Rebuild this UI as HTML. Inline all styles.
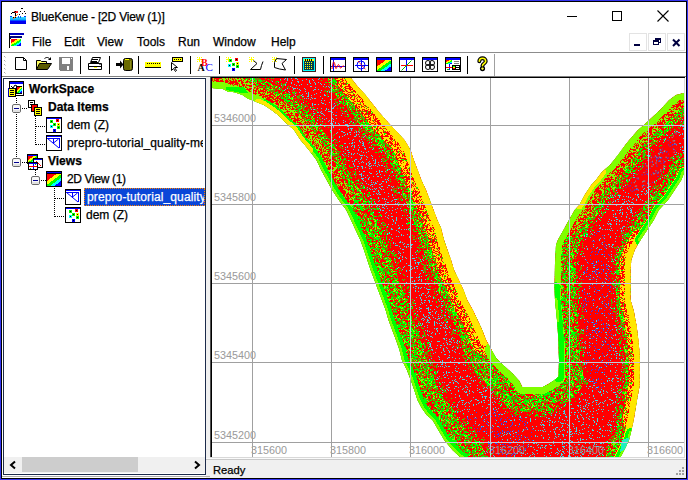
<!DOCTYPE html>
<html><head><meta charset="utf-8">
<style>
html,body{margin:0;padding:0;}
body{width:688px;height:480px;position:relative;overflow:hidden;background:#fff;font-family:"Liberation Sans",sans-serif;color:#000;}
.a{position:absolute;}
.t{position:absolute;white-space:nowrap;line-height:1;-webkit-text-stroke:0.25px currentColor;}
.menu{font-size:12px;top:36px;}
.tree{font-size:12px;}
.lbl{position:absolute;font-size:10.8px;color:#999;line-height:1;white-space:nowrap;}
</style></head><body>
<svg class="a" style="left:0;top:0" width="688" height="78" shape-rendering="crispEdges">
<defs><linearGradient id="wat" x1="0" y1="0" x2="0" y2="1"><stop offset="0" stop-color="#40e0ff"/><stop offset="0.45" stop-color="#00a0ff"/><stop offset="0.55" stop-color="#0000ff"/><stop offset="1" stop-color="#0000e0"/></linearGradient><linearGradient id="rb" x1="0" y1="0.1" x2="0.8" y2="1"><stop offset="0" stop-color="#ff0000"/><stop offset="0.3" stop-color="#ff0000"/><stop offset="0.3" stop-color="#ffff00"/><stop offset="0.5" stop-color="#ffff00"/><stop offset="0.5" stop-color="#00ff00"/><stop offset="0.68" stop-color="#00ff00"/><stop offset="0.68" stop-color="#00ffff"/><stop offset="0.85" stop-color="#00ffff"/><stop offset="0.85" stop-color="#0000ff"/><stop offset="1" stop-color="#0000ff"/></linearGradient></defs>
<path d="M10 17h16v7h-16z" fill="url(#wat)"/>
<rect x="10" y="16" width="2" height="1" fill="#0040ff"/><rect x="24" y="16" width="2" height="1" fill="#0040ff"/>
<rect x="14" y="11" width="4" height="2" fill="#ff2020"/><rect x="15" y="13" width="1" height="5" fill="#000"/><rect x="13" y="17" width="3" height="1" fill="#000"/>
<path d="M11 14l2-2 1 1 2-2" fill="none" stroke="#000" stroke-width="1" shape-rendering="auto"/>
<path d="M13 19l5-5" fill="none" stroke="#ff8020" stroke-width="1" shape-rendering="auto"/>
<rect x="21" y="8" width="2" height="1" fill="#000"/><rect x="20" y="11" width="1" height="1" fill="#000"/><rect x="24" y="11" width="1" height="1" fill="#000"/><rect x="22" y="13" width="1" height="1" fill="#000"/><rect x="25" y="13" width="1" height="1" fill="#000"/><rect x="19" y="14" width="1" height="1" fill="#000"/>
<rect x="18" y="16" width="1" height="2" fill="#0060ff"/><rect x="20" y="16" width="1" height="2" fill="#0060ff"/>
<rect x="9" y="33" width="1" height="15" fill="#000"/><rect x="10" y="33" width="14" height="2" fill="#0000c0"/><rect x="10" y="36" width="12" height="2" fill="#000080"/><rect x="10" y="38" width="1" height="1" fill="#000"/>
<rect x="11" y="39" width="10" height="7" fill="url(#rb)"/>
<rect x="567" y="16" width="10" height="1" fill="#000"/>
<rect x="612.5" y="11.5" width="9" height="9" fill="none" stroke="#000" stroke-width="1"/>
<path d="M657.5 10.5l11 11M668.5 10.5l-11 11" stroke="#000" stroke-width="1.1" shape-rendering="auto"/>
<rect x="629.5" y="33.5" width="17" height="17" fill="#fff" stroke="#e3e3e3"/>
<rect x="648.5" y="33.5" width="17" height="17" fill="#fff" stroke="#e3e3e3"/>
<rect x="667.5" y="33.5" width="17" height="17" fill="#fff" stroke="#e3e3e3"/>
<rect x="634" y="44" width="6" height="2" fill="#000040"/>
<rect x="655" y="38" width="6" height="2" fill="#000040"/><rect x="655" y="38" width="1" height="2" fill="#000040"/><rect x="660" y="38" width="1" height="5" fill="#000040"/><rect x="659" y="42" width="2" height="1" fill="#000040"/>
<rect x="653" y="40" width="6" height="2" fill="#000040"/><rect x="653" y="40" width="1" height="5" fill="#000040"/><rect x="658" y="40" width="1" height="5" fill="#000040"/><rect x="653" y="44" width="6" height="1" fill="#000040"/><rect x="654" y="42" width="4" height="2" fill="#fff"/>
<path d="M673 39.5l6.5 6.5M679.5 39.5l-6.5 6.5" stroke="#000040" stroke-width="2" shape-rendering="auto"/>
<rect x="2" y="52" width="684" height="1" fill="#8c8c8c"/>
<rect x="2" y="76" width="684" height="1" fill="#808080"/>
<rect x="4" y="56" width="1" height="1" fill="#a8a8a8"/><rect x="5" y="57" width="1" height="1" fill="#d8d8d8"/>
<rect x="4" y="60" width="1" height="1" fill="#a8a8a8"/><rect x="5" y="61" width="1" height="1" fill="#d8d8d8"/>
<rect x="4" y="64" width="1" height="1" fill="#a8a8a8"/><rect x="5" y="65" width="1" height="1" fill="#d8d8d8"/>
<rect x="4" y="68" width="1" height="1" fill="#a8a8a8"/><rect x="5" y="69" width="1" height="1" fill="#d8d8d8"/>
<rect x="4" y="72" width="1" height="1" fill="#a8a8a8"/><rect x="5" y="73" width="1" height="1" fill="#d8d8d8"/>
<rect x="80" y="56" width="1" height="18" fill="#000"/>
<rect x="109" y="56" width="1" height="18" fill="#000"/>
<rect x="138" y="56" width="1" height="18" fill="#000"/>
<rect x="190" y="56" width="1" height="18" fill="#000"/>
<rect x="219" y="56" width="1" height="18" fill="#000"/>
<rect x="294" y="56" width="1" height="18" fill="#000"/>
<rect x="323" y="56" width="1" height="18" fill="#000"/>
<rect x="467" y="56" width="1" height="18" fill="#000"/>
<rect x="494" y="54" width="1" height="22" fill="#a0a0a0"/>
<path d="M15.5 57.5h8l3 3v9h-11z" fill="#fff" stroke="#000" shape-rendering="auto"/>
<path d="M23.5 57.5v3h3" fill="none" stroke="#000" stroke-width="1" shape-rendering="auto"/>
<path d="M36.5 69.5v-9h4l1 1h5v2" fill="#ffff60" stroke="#000" shape-rendering="auto"/>
<path d="M36.5 69.5l3-6h12l-4 6z" fill="#5c5c00" stroke="#000" shape-rendering="auto"/>
<path d="M44.5 58.5c2-1.5 4-1.5 5.5 1" fill="none" stroke="#000" shape-rendering="auto"/>
<path d="M48 60h3v-3z" fill="#000" shape-rendering="auto"/>
<rect x="59" y="57" width="14" height="14" fill="#808080"/><rect x="62" y="58" width="8" height="6" fill="#fff"/><rect x="67" y="66" width="2" height="4" fill="#fff"/><rect x="71" y="58" width="1" height="1" fill="#fff"/>
<rect x="59" y="70" width="1" height="1" fill="#fff"/>
<path d="M90.5 62.5l2-5h8l-2 5z" fill="#fff" stroke="#000" shape-rendering="auto"/>
<rect x="92" y="59" width="6" height="1" fill="#000"/><rect x="91" y="61" width="6" height="1" fill="#000"/>
<path d="M88.5 63.5h13v6h-13z" fill="#fff" stroke="#000" shape-rendering="auto"/>
<rect x="88" y="66" width="13" height="1" fill="#000"/><rect x="94" y="67" width="3" height="1" fill="#ffff00"/><rect x="99" y="64" width="2" height="1" fill="#808080"/>
<rect x="116" y="63" width="5" height="3" fill="#000"/><path d="M120 60.5l3.5 4-3.5 4z" fill="#000" shape-rendering="auto"/>
<rect x="123.5" y="58.5" width="9" height="12" rx="2" fill="#6a6a00" stroke="#000" shape-rendering="auto"/>
<rect x="125" y="59" width="4" height="1" fill="#ffff00"/><rect x="130" y="61" width="1" height="8" fill="#8c8c20"/>
<rect x="145" y="62" width="16" height="5" fill="#ffff00"/><rect x="145" y="67" width="16" height="1" fill="#000"/>
<rect x="147" y="63" width="1" height="1" fill="#000"/>
<rect x="149" y="63" width="1" height="1" fill="#000"/>
<rect x="151" y="63" width="1" height="1" fill="#000"/>
<rect x="153" y="63" width="1" height="1" fill="#000"/>
<rect x="155" y="63" width="1" height="1" fill="#000"/>
<rect x="157" y="63" width="1" height="1" fill="#000"/>
<rect x="159" y="63" width="1" height="1" fill="#000"/>
<rect x="172" y="57" width="11" height="5" fill="#000"/><rect x="173" y="58" width="9" height="3" fill="#ffff00"/><rect x="174" y="59" width="1" height="1" fill="#000"/><rect x="176" y="59" width="1" height="1" fill="#000"/><rect x="178" y="59" width="1" height="1" fill="#000"/><rect x="180" y="59" width="1" height="1" fill="#000"/>
<path d="M171.5 62.5v8l2-2 2 3 1-1-2-3h3z" fill="#fff" stroke="#000" stroke-width="1" shape-rendering="auto"/>
<rect x="199" y="57" width="1" height="5" fill="#ffff00"/><rect x="197" y="59" width="5" height="1" fill="#ffff00"/><rect x="197" y="57" width="1" height="1" fill="#ffff00"/><rect x="201" y="57" width="1" height="1" fill="#ffff00"/><rect x="197" y="61" width="1" height="1" fill="#ffff00"/><rect x="201" y="61" width="1" height="1" fill="#ffff00"/>
<text x="197.5" y="70.5" font-family="Liberation Serif" font-weight="bold" font-size="10" fill="#000">A</text>
<text x="201" y="66" font-family="Liberation Serif" font-weight="bold" font-size="10" fill="#ff0000">B</text>
<text x="205.5" y="70.5" font-family="Liberation Serif" font-size="11" fill="#0000ff">C</text>
<rect x="228" y="57" width="1" height="5" fill="#ffff00"/><rect x="226" y="59" width="5" height="1" fill="#ffff00"/><rect x="226" y="57" width="1" height="1" fill="#ffff00"/><rect x="230" y="57" width="1" height="1" fill="#ffff00"/><rect x="226" y="61" width="1" height="1" fill="#ffff00"/><rect x="230" y="61" width="1" height="1" fill="#ffff00"/>
<rect x="229" y="59" width="3" height="3" fill="#00ff00"/><rect x="230" y="60" width="1" height="1" fill="#000"/><rect x="235" y="58" width="3" height="3" fill="#ff0000"/><rect x="236" y="59" width="1" height="1" fill="#000"/><rect x="232" y="63" width="3" height="3" fill="#00ff00"/><rect x="233" y="64" width="1" height="1" fill="#000"/><rect x="236" y="62" width="3" height="3" fill="#ffff00"/><rect x="237" y="63" width="1" height="1" fill="#000"/><rect x="228" y="64" width="3" height="3" fill="#00ffff"/><rect x="229" y="65" width="1" height="1" fill="#000"/><rect x="236" y="65" width="3" height="3" fill="#00ff00"/><rect x="237" y="66" width="1" height="1" fill="#000"/><rect x="232" y="68" width="3" height="3" fill="#0000ff"/><rect x="233" y="69" width="1" height="1" fill="#000"/>
<rect x="251" y="57" width="1" height="5" fill="#ffff00"/><rect x="249" y="59" width="5" height="1" fill="#ffff00"/><rect x="249" y="57" width="1" height="1" fill="#ffff00"/><rect x="253" y="57" width="1" height="1" fill="#ffff00"/><rect x="249" y="61" width="1" height="1" fill="#ffff00"/><rect x="253" y="61" width="1" height="1" fill="#ffff00"/>
<path d="M253.5 60.5l3.5 3-6.5 6h10l1-4 1.5-4" fill="none" stroke="#000" stroke-width="1" shape-rendering="auto"/>
<rect x="274" y="57" width="1" height="5" fill="#ffff00"/><rect x="272" y="59" width="5" height="1" fill="#ffff00"/><rect x="272" y="57" width="1" height="1" fill="#ffff00"/><rect x="276" y="57" width="1" height="1" fill="#ffff00"/><rect x="272" y="61" width="1" height="1" fill="#ffff00"/><rect x="276" y="61" width="1" height="1" fill="#ffff00"/>
<path d="M276.5 58.5l10 1-4.5 4 3.5 6.5-6-1-5-1.5v-5z" fill="none" stroke="#000" stroke-width="1" shape-rendering="auto"/>
<rect x="302" y="57" width="14" height="15" fill="#402020"/><rect x="303" y="58" width="12" height="13" fill="#00ffff"/><rect x="304" y="59" width="10" height="11" fill="#004050"/><rect x="304" y="59" width="10" height="2" fill="#ffff00"/><rect x="305" y="59" width="1" height="2" fill="#000"/><rect x="307" y="59" width="1" height="2" fill="#000"/><rect x="309" y="59" width="1" height="2" fill="#000"/><rect x="311" y="59" width="1" height="2" fill="#000"/>
<rect x="305" y="62" width="1" height="1" fill="#ffff00"/>
<rect x="307" y="62" width="1" height="1" fill="#ffff00"/>
<rect x="309" y="62" width="1" height="1" fill="#ffff00"/>
<rect x="311" y="62" width="1" height="1" fill="#ffff00"/>
<rect x="305" y="64" width="1" height="1" fill="#ffff00"/>
<rect x="307" y="64" width="1" height="1" fill="#ffff00"/>
<rect x="309" y="64" width="1" height="1" fill="#ffff00"/>
<rect x="311" y="64" width="1" height="1" fill="#ffff00"/>
<rect x="305" y="66" width="1" height="1" fill="#ffff00"/>
<rect x="307" y="66" width="1" height="1" fill="#ffff00"/>
<rect x="309" y="66" width="1" height="1" fill="#ffff00"/>
<rect x="311" y="66" width="1" height="1" fill="#ffff00"/>
<rect x="305" y="68" width="1" height="1" fill="#ffff00"/>
<rect x="307" y="68" width="1" height="1" fill="#ffff00"/>
<rect x="309" y="68" width="1" height="1" fill="#ffff00"/>
<rect x="311" y="68" width="1" height="1" fill="#ffff00"/>
<rect x="330" y="57" width="16" height="15" fill="#000"/><rect x="331" y="58" width="14" height="13" fill="#fff"/><rect x="331" y="58" width="14" height="2" fill="#0000ff"/>
<rect x="353" y="57" width="16" height="15" fill="#000"/><rect x="354" y="58" width="14" height="13" fill="#fff"/><rect x="354" y="58" width="14" height="2" fill="#0000ff"/>
<rect x="376" y="57" width="16" height="15" fill="#000"/><rect x="377" y="58" width="14" height="13" fill="#fff"/><rect x="377" y="58" width="14" height="2" fill="#0000ff"/>
<rect x="399" y="57" width="16" height="15" fill="#000"/><rect x="400" y="58" width="14" height="13" fill="#fff"/><rect x="400" y="58" width="14" height="2" fill="#0000ff"/>
<rect x="422" y="57" width="16" height="15" fill="#000"/><rect x="423" y="58" width="14" height="13" fill="#fff"/><rect x="423" y="58" width="14" height="2" fill="#0000ff"/>
<rect x="445" y="57" width="16" height="15" fill="#000"/><rect x="446" y="58" width="14" height="13" fill="#fff"/><rect x="446" y="58" width="14" height="2" fill="#0000ff"/>
<rect x="333" y="60" width="1" height="11" fill="#0000ff"/><rect x="331" y="66" width="14" height="1" fill="#0000ff"/>
<path d="M332 69c1-8 2-9 3-4s1 4 2 2 1-3 2-2 1 4 2 3 1-2 3-2" fill="none" stroke="#ff0000" stroke-width="1" shape-rendering="auto"/>
<circle cx="361" cy="65" r="4" fill="none" stroke="#0000ff" stroke-width="1" shape-rendering="auto"/><rect x="355" y="65" width="13" height="1" fill="#0000ff"/><rect x="361" y="60" width="1" height="11" fill="#0000ff"/>
<path d="M358 61l8 9" stroke="#ff0000" stroke-width="1" stroke-dasharray="2 1" shape-rendering="auto"/>
<rect x="377" y="60" width="14" height="11" fill="url(#rb)"/>
<rect x="401" y="65" width="12" height="1" fill="#ff0000"/><rect x="406" y="60" width="1" height="11" fill="#0000ff"/><path d="M401.5 70.5l10-10" stroke="#00c000" stroke-width="1" shape-rendering="auto"/>
<g fill="none" stroke="#000" stroke-width="1" shape-rendering="auto"><circle cx="428" cy="63" r="2.5"/><circle cx="432" cy="63" r="2.5"/><circle cx="428" cy="67" r="2.5"/><circle cx="432" cy="67" r="2.5"/></g>
<rect x="446" y="60" width="6" height="4" fill="url(#rb)"/><rect x="454" y="61" width="5" height="1" fill="#808080"/><rect x="454" y="63" width="5" height="1" fill="#808080"/><rect x="449" y="64" width="1" height="6" fill="#0000ff"/><rect x="446" y="67" width="6" height="1" fill="#ff0000"/><rect x="447" y="69" width="2" height="1" fill="#00c000"/>
<rect x="452" y="65" width="8" height="5" fill="#000"/><rect x="453" y="66" width="2" height="1" fill="#00ff00"/><rect x="453" y="67" width="2" height="1" fill="#ffff00"/><rect x="453" y="68" width="2" height="1" fill="#ff0000"/><rect x="456" y="66" width="3" height="1" fill="#fff"/><rect x="456" y="68" width="3" height="1" fill="#fff"/>
<g shape-rendering="auto" fill="none" stroke-linecap="round" stroke-linejoin="round"><path d="M479.3 61.2c0-4 6.4-4 6.4 0c0 2.3-3.2 2.3-3.2 4.6" stroke="#000" stroke-width="4"/><circle cx="482.5" cy="68.6" r="0.8" stroke="#000" stroke-width="3.6"/><path d="M479.3 61.2c0-4 6.4-4 6.4 0c0 2.3-3.2 2.3-3.2 4.6" stroke="#ffff00" stroke-width="1.6"/><circle cx="482.5" cy="68.6" r="0.4" stroke="#ffff00" stroke-width="1.4"/></g>
</svg>
<div class="t" style="left:31px;top:11.2px;font-size:12px;letter-spacing:-0.2px">BlueKenue - [2D View (1)]</div>
<div class="t menu" style="left:32px">File</div>
<div class="t menu" style="left:64px">Edit</div>
<div class="t menu" style="left:97px">View</div>
<div class="t menu" style="left:137px">Tools</div>
<div class="t menu" style="left:178px">Run</div>
<div class="t menu" style="left:213px">Window</div>
<div class="t menu" style="left:271px">Help</div>

<!-- tree panel -->
<div class="a" style="left:3px;top:78px;width:203px;height:397px;border:1px solid #1c2a4a;box-sizing:border-box;background:#fff"></div>
<svg class="a" style="left:0;top:78px" width="206" height="398" shape-rendering="crispEdges">
<g transform="translate(0,-78)">
<rect x="16" y="98" width="1" height="1" fill="#000"/><rect x="16" y="100" width="1" height="1" fill="#000"/><rect x="16" y="102" width="1" height="1" fill="#000"/><rect x="16" y="104" width="1" height="1" fill="#000"/><rect x="16" y="106" width="1" height="1" fill="#000"/><rect x="16" y="108" width="1" height="1" fill="#000"/><rect x="16" y="110" width="1" height="1" fill="#000"/><rect x="16" y="112" width="1" height="1" fill="#000"/><rect x="16" y="114" width="1" height="1" fill="#000"/><rect x="16" y="116" width="1" height="1" fill="#000"/><rect x="16" y="118" width="1" height="1" fill="#000"/><rect x="16" y="120" width="1" height="1" fill="#000"/><rect x="16" y="122" width="1" height="1" fill="#000"/><rect x="16" y="124" width="1" height="1" fill="#000"/><rect x="16" y="126" width="1" height="1" fill="#000"/><rect x="16" y="128" width="1" height="1" fill="#000"/><rect x="16" y="130" width="1" height="1" fill="#000"/><rect x="16" y="132" width="1" height="1" fill="#000"/><rect x="16" y="134" width="1" height="1" fill="#000"/><rect x="16" y="136" width="1" height="1" fill="#000"/><rect x="16" y="138" width="1" height="1" fill="#000"/><rect x="16" y="140" width="1" height="1" fill="#000"/><rect x="16" y="142" width="1" height="1" fill="#000"/><rect x="16" y="144" width="1" height="1" fill="#000"/><rect x="16" y="146" width="1" height="1" fill="#000"/><rect x="16" y="148" width="1" height="1" fill="#000"/><rect x="16" y="150" width="1" height="1" fill="#000"/><rect x="16" y="152" width="1" height="1" fill="#000"/><rect x="16" y="154" width="1" height="1" fill="#000"/><rect x="16" y="156" width="1" height="1" fill="#000"/><rect x="16" y="158" width="1" height="1" fill="#000"/><rect x="16" y="160" width="1" height="1" fill="#000"/>
<rect x="22" y="108" width="1" height="1" fill="#000"/><rect x="24" y="108" width="1" height="1" fill="#000"/><rect x="26" y="108" width="1" height="1" fill="#000"/><rect x="22" y="162" width="1" height="1" fill="#000"/><rect x="24" y="162" width="1" height="1" fill="#000"/><rect x="26" y="162" width="1" height="1" fill="#000"/>
<rect x="35" y="116" width="1" height="1" fill="#000"/><rect x="35" y="118" width="1" height="1" fill="#000"/><rect x="35" y="120" width="1" height="1" fill="#000"/><rect x="35" y="122" width="1" height="1" fill="#000"/><rect x="35" y="124" width="1" height="1" fill="#000"/><rect x="35" y="126" width="1" height="1" fill="#000"/><rect x="35" y="128" width="1" height="1" fill="#000"/><rect x="35" y="130" width="1" height="1" fill="#000"/><rect x="35" y="132" width="1" height="1" fill="#000"/><rect x="35" y="134" width="1" height="1" fill="#000"/><rect x="35" y="136" width="1" height="1" fill="#000"/><rect x="35" y="138" width="1" height="1" fill="#000"/><rect x="35" y="140" width="1" height="1" fill="#000"/><rect x="35" y="142" width="1" height="1" fill="#000"/><rect x="35" y="144" width="1" height="1" fill="#000"/>
<rect x="36" y="126" width="1" height="1" fill="#000"/><rect x="38" y="126" width="1" height="1" fill="#000"/><rect x="40" y="126" width="1" height="1" fill="#000"/><rect x="42" y="126" width="1" height="1" fill="#000"/><rect x="44" y="126" width="1" height="1" fill="#000"/><rect x="36" y="144" width="1" height="1" fill="#000"/><rect x="38" y="144" width="1" height="1" fill="#000"/><rect x="40" y="144" width="1" height="1" fill="#000"/><rect x="42" y="144" width="1" height="1" fill="#000"/><rect x="44" y="144" width="1" height="1" fill="#000"/>
<rect x="35" y="170" width="1" height="1" fill="#000"/><rect x="35" y="172" width="1" height="1" fill="#000"/><rect x="35" y="174" width="1" height="1" fill="#000"/>
<rect x="41" y="180" width="1" height="1" fill="#000"/><rect x="43" y="180" width="1" height="1" fill="#000"/><rect x="45" y="180" width="1" height="1" fill="#000"/>
<rect x="54" y="188" width="1" height="1" fill="#000"/><rect x="54" y="190" width="1" height="1" fill="#000"/><rect x="54" y="192" width="1" height="1" fill="#000"/><rect x="54" y="194" width="1" height="1" fill="#000"/><rect x="54" y="196" width="1" height="1" fill="#000"/><rect x="54" y="198" width="1" height="1" fill="#000"/><rect x="54" y="200" width="1" height="1" fill="#000"/><rect x="54" y="202" width="1" height="1" fill="#000"/><rect x="54" y="204" width="1" height="1" fill="#000"/><rect x="54" y="206" width="1" height="1" fill="#000"/><rect x="54" y="208" width="1" height="1" fill="#000"/><rect x="54" y="210" width="1" height="1" fill="#000"/><rect x="54" y="212" width="1" height="1" fill="#000"/><rect x="54" y="214" width="1" height="1" fill="#000"/><rect x="54" y="216" width="1" height="1" fill="#000"/>
<rect x="55" y="198" width="1" height="1" fill="#000"/><rect x="57" y="198" width="1" height="1" fill="#000"/><rect x="59" y="198" width="1" height="1" fill="#000"/><rect x="61" y="198" width="1" height="1" fill="#000"/><rect x="63" y="198" width="1" height="1" fill="#000"/><rect x="55" y="216" width="1" height="1" fill="#000"/><rect x="57" y="216" width="1" height="1" fill="#000"/><rect x="59" y="216" width="1" height="1" fill="#000"/><rect x="61" y="216" width="1" height="1" fill="#000"/><rect x="63" y="216" width="1" height="1" fill="#000"/>
<rect x="12.5" y="104.5" width="8" height="8" rx="1.5" fill="#f8f8f8" stroke="#6a6a6a" shape-rendering="auto"/><rect x="13" y="110" width="7" height="2" fill="#e0e0e0"/><rect x="14" y="108" width="5" height="1" fill="#000090"/><rect x="12.5" y="158.5" width="8" height="8" rx="1.5" fill="#f8f8f8" stroke="#6a6a6a" shape-rendering="auto"/><rect x="13" y="164" width="7" height="2" fill="#e0e0e0"/><rect x="14" y="162" width="5" height="1" fill="#000090"/><rect x="31.5" y="176.5" width="8" height="8" rx="1.5" fill="#f8f8f8" stroke="#6a6a6a" shape-rendering="auto"/><rect x="32" y="182" width="7" height="2" fill="#e0e0e0"/><rect x="33" y="180" width="5" height="1" fill="#000090"/>
<rect x="9" y="81" width="15" height="15" fill="#000"/><rect x="10" y="82" width="13" height="13" fill="#fff"/><rect x="10" y="82" width="13" height="2" fill="#0000ff"/><rect x="16" y="86" width="6" height="8" fill="#000"/><rect x="17" y="87" width="5" height="6" fill="url(#rb)"/>
<path d="M11 86l2 2 2-3 2 1" fill="none" stroke="#000" stroke-width="1" shape-rendering="auto"/>
<rect x="8" y="88" width="8" height="9" fill="#000"/><rect x="9" y="89" width="6" height="7" fill="#ffff00"/><rect x="10" y="90" width="4" height="1" fill="#000"/><rect x="10" y="92" width="4" height="1" fill="#000"/><rect x="10" y="94" width="4" height="1" fill="#000"/><rect x="8" y="88" width="1" height="9" fill="#0000c0"/>
<rect x="28" y="100" width="7" height="8" fill="#000"/><rect x="29" y="101" width="5" height="6" fill="#fff"/><rect x="30" y="102" width="3" height="1" fill="#000"/><rect x="30" y="104" width="3" height="1" fill="#000"/>
<rect x="31" y="104" width="7" height="8" fill="#000"/><rect x="32" y="105" width="5" height="6" fill="#ff0000"/>
<rect x="34" y="107" width="8" height="9" fill="#000"/><rect x="35" y="108" width="6" height="7" fill="#ffff00"/><rect x="36" y="109" width="4" height="1" fill="#000"/><rect x="36" y="111" width="4" height="1" fill="#000"/><rect x="36" y="113" width="4" height="1" fill="#000"/>
<rect x="46" y="117" width="16" height="16" fill="#000"/><rect x="47" y="118" width="14" height="14" fill="#fff"/><rect x="47" y="118" width="14" height="1" fill="#0000ff"/><rect x="50" y="120" width="3" height="3" fill="#00ff00"/><rect x="51" y="121" width="1" height="1" fill="#000"/><rect x="56" y="119" width="3" height="3" fill="#ff0000"/><rect x="57" y="120" width="1" height="1" fill="#000"/><rect x="53" y="123" width="3" height="3" fill="#00ff00"/><rect x="54" y="124" width="1" height="1" fill="#000"/><rect x="57" y="123" width="3" height="3" fill="#ffff00"/><rect x="58" y="124" width="1" height="1" fill="#000"/><rect x="50" y="125" width="3" height="3" fill="#00ffff"/><rect x="51" y="126" width="1" height="1" fill="#000"/><rect x="57" y="126" width="3" height="3" fill="#00ff00"/><rect x="58" y="127" width="1" height="1" fill="#000"/><rect x="53" y="129" width="3" height="3" fill="#0000ff"/><rect x="54" y="130" width="1" height="1" fill="#000"/><rect x="46" y="135" width="16" height="16" fill="#000"/><rect x="47" y="136" width="14" height="14" fill="#fff"/><rect x="47" y="136" width="14" height="1" fill="#0000ff"/><rect x="47" y="138" width="13" height="1" fill="#0000ff"/><rect x="59" y="138" width="1" height="10" fill="#0000ff"/><path d="M47.5 138.5l11.5 9.5M58.5 139l-5 4M53.5 138.5v5" fill="none" stroke="#0000ff" stroke-width="1" shape-rendering="auto"/><rect x="65" y="189" width="16" height="16" fill="#000"/><rect x="66" y="190" width="14" height="14" fill="#fff"/><rect x="66" y="190" width="14" height="1" fill="#0000ff"/><rect x="66" y="192" width="13" height="1" fill="#0000ff"/><rect x="78" y="192" width="1" height="10" fill="#0000ff"/><path d="M66.5 192.5l11.5 9.5M77.5 193l-5 4M72.5 192.5v5" fill="none" stroke="#0000ff" stroke-width="1" shape-rendering="auto"/><rect x="65" y="207" width="16" height="16" fill="#000"/><rect x="66" y="208" width="14" height="14" fill="#fff"/><rect x="66" y="208" width="14" height="1" fill="#0000ff"/><rect x="69" y="210" width="3" height="3" fill="#00ff00"/><rect x="70" y="211" width="1" height="1" fill="#000"/><rect x="75" y="209" width="3" height="3" fill="#ff0000"/><rect x="76" y="210" width="1" height="1" fill="#000"/><rect x="72" y="213" width="3" height="3" fill="#00ff00"/><rect x="73" y="214" width="1" height="1" fill="#000"/><rect x="76" y="213" width="3" height="3" fill="#ffff00"/><rect x="77" y="214" width="1" height="1" fill="#000"/><rect x="69" y="215" width="3" height="3" fill="#00ffff"/><rect x="70" y="216" width="1" height="1" fill="#000"/><rect x="76" y="216" width="3" height="3" fill="#00ff00"/><rect x="77" y="217" width="1" height="1" fill="#000"/><rect x="72" y="219" width="3" height="3" fill="#0000ff"/><rect x="73" y="220" width="1" height="1" fill="#000"/>
<rect x="27" y="154" width="11" height="10" fill="#000"/><rect x="28" y="156" width="9" height="7" fill="url(#rb)"/><rect x="28" y="155" width="9" height="1" fill="#0000ff"/>
<rect x="33" y="158" width="10" height="10" fill="#000"/><rect x="34" y="159" width="8" height="8" fill="#fff"/><rect x="34" y="159" width="8" height="1" fill="#0000ff"/><path d="M36 161l5 5" stroke="#ff0000" stroke-width="1" shape-rendering="auto"/>
<rect x="28" y="162" width="10" height="8" fill="#000"/><rect x="29" y="163" width="8" height="6" fill="#fff"/><rect x="29" y="163" width="8" height="1" fill="#0000ff"/><rect x="33" y="163" width="1" height="6" fill="#0000ff"/><rect x="29" y="166" width="8" height="1" fill="#ff0000"/><rect x="30" y="168" width="1" height="1" fill="#00c000"/><rect x="35" y="164" width="1" height="1" fill="#00c000"/>
<rect x="46" y="171" width="16" height="16" fill="#000"/><rect x="47" y="172" width="14" height="1" fill="#0000ff"/><rect x="47" y="174" width="14" height="12" fill="url(#rb)"/>
</g></svg>
<div class="t tree" style="left:29px;top:83px;font-weight:bold">WorkSpace</div>
<div class="t tree" style="left:48px;top:101px;font-weight:bold">Data Items</div>
<div class="t tree" style="left:67px;top:119px">dem (Z)</div>
<div class="t tree" style="left:67px;top:135px;width:136px;overflow:hidden;line-height:16px;letter-spacing:0.12px">prepro-tutorial_quality-mesh</div>
<div class="t tree" style="left:48px;top:155px;font-weight:bold">Views</div>
<div class="t tree" style="left:67px;top:173px;letter-spacing:-0.35px">2D View (1)</div>
<div class="a" style="left:84px;top:188px;width:121px;height:18px;background:#0a46d8;border:1px dotted #ff8000;box-sizing:border-box"></div>
<div class="t tree" style="left:87px;top:189px;color:#fff;letter-spacing:0.12px;width:117px;overflow:hidden;line-height:16px">prepro-tutorial_quality</div>
<div class="t tree" style="left:86px;top:209px">dem (Z)</div>

<!-- scrollbar -->
<div class="a" style="left:4px;top:457px;width:201px;height:16px;background:#f0f0f0"></div>
<div class="a" style="left:22px;top:457px;width:116px;height:15px;background:#cdcdcd"></div>
<svg class="a" style="left:0;top:450px" width="206" height="24"><path d="M15 11.5l-4 3.5 4 3.5M195 11.5l4 3.5-4 3.5" fill="none" stroke="#000" stroke-width="2"/></svg>

<!-- map -->
<div class="a" style="left:206px;top:77px;width:4px;height:382px;background:#f0f0f0"></div>
<div class="a" style="left:211px;top:77px;width:474px;height:381px;background:#fff;border-left:1px solid #000;border-top:1px solid #000;box-sizing:border-box"></div>
<div class="a" style="left:210px;top:77px;width:1px;height:381px;background:#505050"></div>
<svg class="a" style="left:0;top:0" width="688" height="480" shape-rendering="crispEdges">
<defs><pattern id="core" width="67" height="67" patternUnits="userSpaceOnUse"><rect width="67" height="67" fill="#ff0000"/><path fill="#3ed8e8" d="M10 0h1v1h-1zM12 0h1v1h-1zM15 0h1v1h-1zM21 0h1v1h-1zM23 0h1v1h-1zM26 0h1v1h-1zM43 0h1v1h-1zM50 0h1v1h-1zM56 0h1v1h-1zM60 0h1v1h-1zM64 0h1v1h-1zM66 0h1v1h-1zM0 1h1v1h-1zM9 1h1v1h-1zM21 1h1v1h-1zM28 1h2v1h-2zM52 1h2v1h-2zM63 1h1v1h-1zM4 2h1v1h-1zM7 2h1v1h-1zM19 2h2v1h-2zM24 2h1v1h-1zM30 2h1v1h-1zM50 2h1v1h-1zM60 2h1v1h-1zM62 2h1v1h-1zM4 3h1v1h-1zM41 3h2v1h-2zM44 3h1v1h-1zM49 3h1v1h-1zM52 3h1v1h-1zM56 3h1v1h-1zM0 4h1v1h-1zM13 4h1v1h-1zM42 4h1v1h-1zM47 4h1v1h-1zM49 4h1v1h-1zM63 4h1v1h-1zM18 5h1v1h-1zM26 5h1v1h-1zM44 5h1v1h-1zM51 5h1v1h-1zM17 6h1v1h-1zM24 6h1v1h-1zM29 6h1v1h-1zM35 6h3v1h-3zM47 6h2v1h-2zM57 6h1v1h-1zM0 7h1v1h-1zM24 7h1v1h-1zM27 7h1v1h-1zM44 7h1v1h-1zM49 7h1v1h-1zM52 7h1v1h-1zM62 7h1v1h-1zM65 7h1v1h-1zM5 8h1v1h-1zM17 8h1v1h-1zM19 8h1v1h-1zM25 8h1v1h-1zM28 8h1v1h-1zM41 8h1v1h-1zM45 8h1v1h-1zM60 8h1v1h-1zM9 9h2v1h-2zM14 9h1v1h-1zM16 9h2v1h-2zM27 9h2v1h-2zM45 9h1v1h-1zM47 9h2v1h-2zM54 9h1v1h-1zM57 9h1v1h-1zM66 9h1v1h-1zM28 10h1v1h-1zM35 10h1v1h-1zM38 10h2v1h-2zM42 10h1v1h-1zM17 11h1v1h-1zM19 11h1v1h-1zM23 11h1v1h-1zM27 11h2v1h-2zM51 11h1v1h-1zM61 11h1v1h-1zM12 12h1v1h-1zM16 12h1v1h-1zM19 12h1v1h-1zM29 12h1v1h-1zM38 12h1v1h-1zM44 12h1v1h-1zM50 12h1v1h-1zM56 12h1v1h-1zM10 13h1v1h-1zM12 13h1v1h-1zM19 13h1v1h-1zM24 13h1v1h-1zM34 13h1v1h-1zM41 13h1v1h-1zM45 13h1v1h-1zM0 14h1v1h-1zM29 14h2v1h-2zM41 14h1v1h-1zM53 14h1v1h-1zM10 15h1v1h-1zM18 15h1v1h-1zM23 15h1v1h-1zM30 15h1v1h-1zM41 15h1v1h-1zM46 15h1v1h-1zM50 15h1v1h-1zM56 15h2v1h-2zM12 16h2v1h-2zM23 16h1v1h-1zM42 16h1v1h-1zM47 16h1v1h-1zM52 16h1v1h-1zM61 16h1v1h-1zM26 17h1v1h-1zM33 17h1v1h-1zM39 17h1v1h-1zM47 17h1v1h-1zM53 17h1v1h-1zM61 17h1v1h-1zM66 17h1v1h-1zM6 18h1v1h-1zM13 18h2v1h-2zM28 18h1v1h-1zM31 18h1v1h-1zM57 18h1v1h-1zM61 18h1v1h-1zM8 19h1v1h-1zM11 19h1v1h-1zM16 19h1v1h-1zM19 19h1v1h-1zM22 19h1v1h-1zM42 19h2v1h-2zM58 19h1v1h-1zM61 19h1v1h-1zM5 20h1v1h-1zM13 20h1v1h-1zM16 20h1v1h-1zM18 20h1v1h-1zM24 20h1v1h-1zM47 20h1v1h-1zM58 20h1v1h-1zM25 21h3v1h-3zM29 21h1v1h-1zM36 21h1v1h-1zM60 21h1v1h-1zM4 22h1v1h-1zM6 22h2v1h-2zM13 22h1v1h-1zM31 22h1v1h-1zM37 22h1v1h-1zM46 22h2v1h-2zM50 22h1v1h-1zM60 22h1v1h-1zM5 23h1v1h-1zM7 23h2v1h-2zM13 23h1v1h-1zM16 23h1v1h-1zM26 23h1v1h-1zM32 23h1v1h-1zM45 23h1v1h-1zM53 23h1v1h-1zM57 23h1v1h-1zM0 24h1v1h-1zM26 24h1v1h-1zM37 24h1v1h-1zM63 24h1v1h-1zM7 25h1v1h-1zM20 25h2v1h-2zM25 25h1v1h-1zM31 25h1v1h-1zM40 25h1v1h-1zM52 25h1v1h-1zM19 26h1v1h-1zM38 26h1v1h-1zM40 26h1v1h-1zM48 26h1v1h-1zM64 26h1v1h-1zM8 27h1v1h-1zM17 27h1v1h-1zM19 27h1v1h-1zM23 27h1v1h-1zM27 27h1v1h-1zM34 27h1v1h-1zM40 27h1v1h-1zM46 27h1v1h-1zM56 27h1v1h-1zM63 27h2v1h-2zM2 28h1v1h-1zM4 28h1v1h-1zM6 28h1v1h-1zM26 28h1v1h-1zM28 28h1v1h-1zM33 28h1v1h-1zM40 28h1v1h-1zM43 28h1v1h-1zM56 28h2v1h-2zM66 28h1v1h-1zM7 29h1v1h-1zM9 29h1v1h-1zM14 29h1v1h-1zM18 29h1v1h-1zM24 29h1v1h-1zM31 29h1v1h-1zM34 29h2v1h-2zM39 29h2v1h-2zM52 29h1v1h-1zM61 29h1v1h-1zM18 30h1v1h-1zM31 30h1v1h-1zM34 30h1v1h-1zM43 30h1v1h-1zM63 30h1v1h-1zM19 31h1v1h-1zM33 31h1v1h-1zM36 31h1v1h-1zM38 31h1v1h-1zM40 31h1v1h-1zM44 31h1v1h-1zM46 31h2v1h-2zM54 31h1v1h-1zM64 31h1v1h-1zM12 32h1v1h-1zM19 32h1v1h-1zM22 32h2v1h-2zM26 32h2v1h-2zM34 32h2v1h-2zM42 32h1v1h-1zM5 33h1v1h-1zM27 33h1v1h-1zM30 33h1v1h-1zM53 33h1v1h-1zM56 33h1v1h-1zM66 33h1v1h-1zM1 34h1v1h-1zM19 34h1v1h-1zM22 34h1v1h-1zM27 34h1v1h-1zM34 34h1v1h-1zM36 34h1v1h-1zM66 34h1v1h-1zM7 35h1v1h-1zM13 35h1v1h-1zM20 35h1v1h-1zM53 35h1v1h-1zM61 35h1v1h-1zM63 35h1v1h-1zM7 36h1v1h-1zM18 36h1v1h-1zM44 36h1v1h-1zM54 36h2v1h-2zM12 37h1v1h-1zM24 37h1v1h-1zM28 37h2v1h-2zM41 37h1v1h-1zM44 37h1v1h-1zM46 37h2v1h-2zM50 37h1v1h-1zM57 37h1v1h-1zM34 38h1v1h-1zM44 38h1v1h-1zM17 39h1v1h-1zM26 39h1v1h-1zM35 39h2v1h-2zM42 39h1v1h-1zM12 40h1v1h-1zM14 40h1v1h-1zM18 40h2v1h-2zM24 40h3v1h-3zM41 40h1v1h-1zM45 40h1v1h-1zM65 40h1v1h-1zM0 41h1v1h-1zM17 41h1v1h-1zM26 41h1v1h-1zM28 41h1v1h-1zM32 41h1v1h-1zM49 41h1v1h-1zM53 41h1v1h-1zM58 41h1v1h-1zM64 41h2v1h-2zM2 42h1v1h-1zM13 42h1v1h-1zM26 42h1v1h-1zM38 42h1v1h-1zM42 42h2v1h-2zM58 42h1v1h-1zM60 42h1v1h-1zM1 43h1v1h-1zM5 43h2v1h-2zM9 43h2v1h-2zM14 43h2v1h-2zM18 43h1v1h-1zM30 43h1v1h-1zM34 43h1v1h-1zM46 43h1v1h-1zM57 43h1v1h-1zM9 44h1v1h-1zM26 44h3v1h-3zM33 44h1v1h-1zM53 44h1v1h-1zM60 44h3v1h-3zM2 45h1v1h-1zM4 45h1v1h-1zM6 45h1v1h-1zM8 45h1v1h-1zM27 45h1v1h-1zM33 45h1v1h-1zM50 45h1v1h-1zM52 45h1v1h-1zM64 45h1v1h-1zM4 46h1v1h-1zM9 46h1v1h-1zM14 46h2v1h-2zM21 46h1v1h-1zM28 46h1v1h-1zM36 46h1v1h-1zM53 46h2v1h-2zM21 47h1v1h-1zM26 47h1v1h-1zM30 47h1v1h-1zM42 47h1v1h-1zM47 47h2v1h-2zM51 47h1v1h-1zM55 47h1v1h-1zM65 47h1v1h-1zM0 48h2v1h-2zM22 48h1v1h-1zM24 48h1v1h-1zM36 48h1v1h-1zM38 48h1v1h-1zM40 48h1v1h-1zM51 48h1v1h-1zM56 48h1v1h-1zM23 49h1v1h-1zM26 49h2v1h-2zM31 49h1v1h-1zM40 49h2v1h-2zM46 49h1v1h-1zM8 50h1v1h-1zM15 50h1v1h-1zM20 50h2v1h-2zM27 50h1v1h-1zM33 50h1v1h-1zM36 50h2v1h-2zM39 50h1v1h-1zM44 50h2v1h-2zM63 50h1v1h-1zM1 51h1v1h-1zM13 51h1v1h-1zM19 51h1v1h-1zM22 51h1v1h-1zM25 51h1v1h-1zM28 51h1v1h-1zM35 51h1v1h-1zM53 51h2v1h-2zM58 51h1v1h-1zM64 51h1v1h-1zM21 52h1v1h-1zM25 52h2v1h-2zM37 52h1v1h-1zM46 52h2v1h-2zM56 52h1v1h-1zM63 52h1v1h-1zM65 52h1v1h-1zM8 53h1v1h-1zM14 53h1v1h-1zM25 53h1v1h-1zM32 53h1v1h-1zM44 53h1v1h-1zM52 53h1v1h-1zM61 53h1v1h-1zM10 54h1v1h-1zM24 54h1v1h-1zM26 54h2v1h-2zM32 54h1v1h-1zM34 54h1v1h-1zM39 54h1v1h-1zM41 54h1v1h-1zM45 54h1v1h-1zM60 54h1v1h-1zM65 54h1v1h-1zM0 55h1v1h-1zM8 55h1v1h-1zM16 55h2v1h-2zM20 55h1v1h-1zM32 55h1v1h-1zM35 55h1v1h-1zM37 55h1v1h-1zM40 55h1v1h-1zM46 55h1v1h-1zM48 55h1v1h-1zM56 55h1v1h-1zM0 56h1v1h-1zM3 56h1v1h-1zM14 56h1v1h-1zM16 56h1v1h-1zM20 56h1v1h-1zM32 56h1v1h-1zM43 56h1v1h-1zM56 56h1v1h-1zM62 56h1v1h-1zM64 56h1v1h-1zM4 57h1v1h-1zM10 57h3v1h-3zM25 57h1v1h-1zM32 57h1v1h-1zM38 57h2v1h-2zM43 57h1v1h-1zM63 57h2v1h-2zM0 58h1v1h-1zM22 58h1v1h-1zM44 58h1v1h-1zM49 58h1v1h-1zM12 59h2v1h-2zM25 59h1v1h-1zM41 59h1v1h-1zM43 59h1v1h-1zM53 59h1v1h-1zM65 59h1v1h-1zM32 60h1v1h-1zM34 60h2v1h-2zM38 60h1v1h-1zM42 60h1v1h-1zM44 60h2v1h-2zM57 60h1v1h-1zM65 60h1v1h-1zM13 61h1v1h-1zM15 61h3v1h-3zM34 61h1v1h-1zM57 61h1v1h-1zM4 62h1v1h-1zM13 62h1v1h-1zM16 62h1v1h-1zM20 62h1v1h-1zM23 62h1v1h-1zM25 62h1v1h-1zM35 62h1v1h-1zM53 62h1v1h-1zM16 63h1v1h-1zM25 63h1v1h-1zM27 63h1v1h-1zM35 63h1v1h-1zM43 63h1v1h-1zM58 63h1v1h-1zM6 64h2v1h-2zM30 64h1v1h-1zM43 64h1v1h-1zM47 64h1v1h-1zM49 64h1v1h-1zM2 65h1v1h-1zM8 65h2v1h-2zM14 65h2v1h-2zM19 65h1v1h-1zM21 65h1v1h-1zM29 65h1v1h-1zM33 65h1v1h-1zM37 65h1v1h-1zM49 65h1v1h-1zM51 65h1v1h-1zM59 65h3v1h-3zM1 66h1v1h-1zM12 66h1v1h-1zM25 66h1v1h-1zM33 66h1v1h-1zM44 66h1v1h-1zM57 66h1v1h-1z"/></pattern><pattern id="coreb" width="59" height="59" patternUnits="userSpaceOnUse"><rect width="59" height="59" fill="#ff0000"/><path fill="#3ed8e8" d="M17 0h1v1h-1zM28 0h1v1h-1zM32 0h1v1h-1zM0 1h1v1h-1zM16 1h1v1h-1zM27 1h1v1h-1zM29 1h2v1h-2zM10 2h1v1h-1zM14 2h1v1h-1zM23 2h1v1h-1zM46 2h1v1h-1zM9 3h1v1h-1zM19 3h1v1h-1zM40 3h1v1h-1zM54 3h1v1h-1zM3 4h1v1h-1zM9 4h1v1h-1zM48 4h1v1h-1zM54 5h1v1h-1zM12 6h1v1h-1zM42 6h1v1h-1zM47 6h1v1h-1zM24 7h1v1h-1zM38 7h2v1h-2zM42 7h1v1h-1zM3 8h1v1h-1zM12 8h1v1h-1zM18 8h1v1h-1zM32 8h1v1h-1zM34 8h1v1h-1zM16 9h1v1h-1zM55 9h1v1h-1zM3 10h1v1h-1zM23 10h1v1h-1zM52 10h1v1h-1zM7 11h1v1h-1zM31 11h1v1h-1zM33 11h1v1h-1zM47 11h1v1h-1zM6 12h1v1h-1zM16 12h1v1h-1zM20 12h1v1h-1zM43 12h1v1h-1zM9 13h1v1h-1zM11 13h1v1h-1zM21 13h1v1h-1zM25 13h2v1h-2zM35 14h1v1h-1zM54 14h1v1h-1zM51 16h1v1h-1zM55 16h1v1h-1zM51 17h1v1h-1zM12 18h1v1h-1zM14 18h1v1h-1zM20 18h1v1h-1zM40 18h1v1h-1zM50 18h1v1h-1zM32 19h1v1h-1zM43 19h2v1h-2zM14 20h1v1h-1zM30 20h1v1h-1zM35 20h1v1h-1zM37 20h1v1h-1zM41 20h1v1h-1zM32 21h1v1h-1zM34 21h1v1h-1zM38 21h1v1h-1zM46 21h1v1h-1zM16 22h1v1h-1zM31 22h1v1h-1zM49 22h1v1h-1zM22 23h1v1h-1zM29 23h1v1h-1zM41 23h1v1h-1zM53 24h1v1h-1zM55 24h1v1h-1zM6 25h1v1h-1zM18 25h1v1h-1zM38 25h1v1h-1zM6 26h1v1h-1zM30 26h1v1h-1zM35 26h1v1h-1zM43 26h1v1h-1zM47 26h1v1h-1zM56 26h1v1h-1zM2 27h1v1h-1zM35 27h1v1h-1zM16 28h1v1h-1zM26 28h1v1h-1zM41 28h1v1h-1zM51 28h1v1h-1zM3 29h2v1h-2zM11 29h1v1h-1zM18 29h1v1h-1zM29 29h1v1h-1zM32 29h1v1h-1zM37 29h1v1h-1zM19 30h1v1h-1zM51 30h1v1h-1zM3 31h2v1h-2zM28 31h1v1h-1zM30 31h1v1h-1zM45 31h1v1h-1zM56 31h1v1h-1zM8 32h1v1h-1zM47 32h1v1h-1zM6 33h2v1h-2zM13 33h1v1h-1zM18 33h1v1h-1zM56 33h1v1h-1zM22 34h1v1h-1zM28 34h1v1h-1zM40 34h1v1h-1zM2 35h1v1h-1zM4 35h1v1h-1zM39 35h1v1h-1zM9 36h1v1h-1zM28 36h1v1h-1zM48 36h1v1h-1zM53 36h1v1h-1zM2 37h1v1h-1zM15 37h2v1h-2zM32 37h1v1h-1zM53 37h1v1h-1zM6 38h1v1h-1zM46 38h1v1h-1zM58 38h1v1h-1zM0 39h1v1h-1zM16 39h1v1h-1zM21 39h1v1h-1zM49 39h1v1h-1zM7 40h1v1h-1zM36 40h1v1h-1zM45 40h1v1h-1zM48 40h1v1h-1zM55 40h1v1h-1zM3 41h1v1h-1zM34 41h1v1h-1zM4 42h1v1h-1zM15 42h1v1h-1zM21 42h1v1h-1zM42 42h1v1h-1zM0 43h1v1h-1zM6 43h1v1h-1zM16 43h1v1h-1zM22 43h1v1h-1zM48 43h1v1h-1zM58 43h1v1h-1zM28 44h1v1h-1zM48 44h1v1h-1zM6 45h1v1h-1zM12 46h1v1h-1zM15 46h1v1h-1zM28 46h1v1h-1zM29 47h1v1h-1zM31 47h1v1h-1zM36 47h1v1h-1zM39 47h1v1h-1zM49 47h1v1h-1zM58 47h1v1h-1zM2 48h1v1h-1zM13 49h1v1h-1zM23 49h1v1h-1zM36 49h1v1h-1zM12 50h1v1h-1zM26 50h1v1h-1zM36 50h1v1h-1zM58 50h1v1h-1zM28 51h1v1h-1zM21 52h1v1h-1zM36 52h1v1h-1zM40 52h1v1h-1zM58 52h1v1h-1zM48 53h1v1h-1zM53 53h1v1h-1zM9 54h1v1h-1zM41 54h1v1h-1zM4 55h1v1h-1zM19 55h1v1h-1zM25 55h1v1h-1zM39 56h1v1h-1zM46 56h1v1h-1zM17 57h1v1h-1zM25 57h1v1h-1zM56 57h1v1h-1zM58 57h1v1h-1zM22 58h1v1h-1zM42 58h1v1h-1z"/><path fill="#2848ff" d="M21 0h1v1h-1zM23 0h1v1h-1zM28 0h1v1h-1zM13 1h1v1h-1zM26 1h1v1h-1zM57 1h1v1h-1zM40 2h1v1h-1zM19 3h1v1h-1zM23 3h1v1h-1zM26 3h1v1h-1zM43 3h1v1h-1zM35 4h1v1h-1zM47 4h1v1h-1zM54 4h1v1h-1zM2 5h1v1h-1zM4 5h1v1h-1zM14 5h1v1h-1zM29 5h1v1h-1zM49 5h1v1h-1zM52 5h1v1h-1zM54 5h1v1h-1zM18 6h1v1h-1zM23 6h1v1h-1zM28 6h1v1h-1zM33 6h1v1h-1zM37 6h1v1h-1zM55 6h1v1h-1zM57 6h1v1h-1zM11 7h1v1h-1zM28 7h1v1h-1zM48 7h1v1h-1zM15 8h1v1h-1zM33 8h1v1h-1zM50 8h1v1h-1zM53 8h1v1h-1zM18 9h1v1h-1zM26 9h1v1h-1zM31 9h1v1h-1zM34 9h1v1h-1zM40 9h1v1h-1zM14 10h1v1h-1zM18 10h1v1h-1zM29 10h1v1h-1zM40 10h1v1h-1zM47 10h1v1h-1zM52 10h1v1h-1zM55 10h1v1h-1zM15 11h1v1h-1zM29 11h1v1h-1zM33 11h1v1h-1zM40 11h1v1h-1zM53 11h1v1h-1zM1 12h1v1h-1zM39 12h1v1h-1zM52 12h1v1h-1zM10 13h1v1h-1zM38 13h1v1h-1zM46 13h1v1h-1zM9 14h1v1h-1zM19 14h1v1h-1zM27 14h1v1h-1zM33 14h1v1h-1zM2 15h1v1h-1zM5 15h1v1h-1zM8 15h1v1h-1zM14 15h1v1h-1zM20 15h1v1h-1zM55 15h1v1h-1zM1 16h1v1h-1zM8 16h1v1h-1zM53 16h1v1h-1zM30 17h1v1h-1zM41 17h1v1h-1zM46 17h1v1h-1zM5 18h1v1h-1zM7 18h1v1h-1zM11 18h1v1h-1zM14 18h1v1h-1zM18 18h1v1h-1zM22 18h1v1h-1zM25 18h1v1h-1zM30 18h1v1h-1zM32 18h1v1h-1zM35 18h2v1h-2zM38 18h1v1h-1zM46 18h1v1h-1zM0 19h1v1h-1zM19 19h1v1h-1zM28 19h1v1h-1zM34 19h1v1h-1zM37 19h1v1h-1zM26 20h1v1h-1zM28 20h1v1h-1zM22 21h1v1h-1zM25 21h2v1h-2zM44 21h1v1h-1zM46 21h1v1h-1zM27 22h1v1h-1zM38 22h1v1h-1zM0 23h1v1h-1zM26 23h1v1h-1zM44 23h1v1h-1zM52 23h1v1h-1zM8 24h1v1h-1zM24 24h1v1h-1zM47 24h1v1h-1zM49 24h1v1h-1zM55 24h1v1h-1zM3 25h1v1h-1zM8 25h1v1h-1zM11 25h1v1h-1zM48 26h1v1h-1zM1 27h1v1h-1zM3 27h1v1h-1zM39 27h1v1h-1zM46 27h1v1h-1zM53 27h1v1h-1zM57 27h1v1h-1zM5 28h2v1h-2zM13 28h1v1h-1zM29 28h1v1h-1zM44 28h1v1h-1zM3 29h1v1h-1zM13 29h1v1h-1zM30 29h1v1h-1zM35 29h1v1h-1zM16 30h2v1h-2zM23 30h2v1h-2zM37 30h2v1h-2zM25 31h1v1h-1zM30 31h2v1h-2zM33 31h1v1h-1zM8 32h1v1h-1zM16 32h2v1h-2zM35 32h1v1h-1zM51 32h1v1h-1zM55 32h1v1h-1zM8 33h1v1h-1zM11 33h1v1h-1zM25 33h1v1h-1zM31 33h1v1h-1zM46 33h1v1h-1zM5 34h1v1h-1zM13 34h1v1h-1zM32 34h1v1h-1zM37 34h1v1h-1zM39 34h1v1h-1zM55 34h1v1h-1zM3 35h1v1h-1zM6 35h1v1h-1zM13 35h1v1h-1zM17 35h1v1h-1zM20 35h1v1h-1zM39 35h1v1h-1zM42 35h1v1h-1zM44 35h1v1h-1zM53 35h1v1h-1zM5 36h1v1h-1zM8 36h1v1h-1zM30 36h2v1h-2zM53 36h1v1h-1zM55 36h1v1h-1zM2 37h1v1h-1zM5 37h1v1h-1zM8 37h1v1h-1zM11 37h1v1h-1zM19 37h1v1h-1zM36 37h1v1h-1zM47 37h1v1h-1zM49 37h1v1h-1zM28 38h1v1h-1zM51 38h1v1h-1zM58 38h1v1h-1zM21 39h1v1h-1zM29 39h1v1h-1zM32 39h1v1h-1zM42 39h1v1h-1zM50 39h1v1h-1zM17 40h1v1h-1zM37 40h1v1h-1zM41 40h1v1h-1zM43 40h1v1h-1zM57 40h1v1h-1zM0 41h1v1h-1zM9 41h1v1h-1zM26 41h1v1h-1zM30 41h1v1h-1zM35 41h1v1h-1zM40 41h1v1h-1zM43 41h1v1h-1zM4 42h1v1h-1zM10 42h1v1h-1zM19 42h1v1h-1zM39 42h1v1h-1zM45 42h1v1h-1zM2 43h1v1h-1zM34 43h1v1h-1zM52 43h1v1h-1zM18 44h1v1h-1zM26 44h1v1h-1zM14 45h1v1h-1zM38 45h1v1h-1zM45 45h1v1h-1zM20 46h1v1h-1zM46 46h1v1h-1zM51 46h1v1h-1zM13 47h1v1h-1zM15 47h1v1h-1zM27 47h1v1h-1zM41 47h1v1h-1zM48 47h1v1h-1zM52 47h1v1h-1zM0 48h1v1h-1zM6 48h1v1h-1zM32 48h1v1h-1zM34 48h1v1h-1zM42 48h1v1h-1zM44 48h1v1h-1zM11 49h1v1h-1zM17 49h2v1h-2zM20 50h1v1h-1zM0 51h1v1h-1zM4 51h1v1h-1zM20 51h1v1h-1zM30 51h1v1h-1zM35 51h1v1h-1zM11 52h1v1h-1zM29 52h1v1h-1zM46 52h1v1h-1zM53 52h1v1h-1zM5 53h1v1h-1zM18 53h1v1h-1zM41 53h1v1h-1zM7 54h2v1h-2zM26 54h1v1h-1zM20 55h1v1h-1zM29 55h1v1h-1zM51 55h1v1h-1zM6 56h1v1h-1zM22 56h2v1h-2zM39 56h1v1h-1zM53 56h1v1h-1zM17 57h1v1h-1zM4 58h1v1h-1zM12 58h1v1h-1zM53 58h1v1h-1zM56 58h1v1h-1z"/></pattern><pattern id="meshg" width="64" height="64" patternUnits="userSpaceOnUse"><rect width="64" height="64" fill="#ff0000"/><path fill="#00ff00" d="M6 0h1v1h-1zM13 0h4v1h-4zM18 0h1v1h-1zM24 0h1v1h-1zM27 0h1v1h-1zM29 0h2v1h-2zM32 0h1v1h-1zM34 0h1v1h-1zM40 0h1v1h-1zM42 0h2v1h-2zM45 0h2v1h-2zM51 0h1v1h-1zM56 0h1v1h-1zM61 0h1v1h-1zM1 1h4v1h-4zM10 1h3v1h-3zM14 1h1v1h-1zM17 1h2v1h-2zM20 1h1v1h-1zM26 1h2v1h-2zM29 1h1v1h-1zM32 1h2v1h-2zM36 1h1v1h-1zM39 1h4v1h-4zM45 1h2v1h-2zM48 1h4v1h-4zM53 1h2v1h-2zM56 1h2v1h-2zM61 1h1v1h-1zM0 2h4v1h-4zM6 2h3v1h-3zM11 2h1v1h-1zM15 2h2v1h-2zM18 2h4v1h-4zM24 2h5v1h-5zM30 2h1v1h-1zM32 2h1v1h-1zM35 2h1v1h-1zM38 2h1v1h-1zM42 2h3v1h-3zM46 2h1v1h-1zM50 2h3v1h-3zM55 2h1v1h-1zM58 2h2v1h-2zM61 2h1v1h-1zM63 2h1v1h-1zM0 3h2v1h-2zM3 3h2v1h-2zM6 3h2v1h-2zM11 3h1v1h-1zM13 3h1v1h-1zM16 3h7v1h-7zM24 3h1v1h-1zM26 3h1v1h-1zM34 3h2v1h-2zM37 3h2v1h-2zM42 3h1v1h-1zM45 3h1v1h-1zM47 3h3v1h-3zM51 3h2v1h-2zM55 3h1v1h-1zM58 3h1v1h-1zM60 3h1v1h-1zM2 4h6v1h-6zM11 4h2v1h-2zM14 4h3v1h-3zM19 4h1v1h-1zM21 4h2v1h-2zM24 4h2v1h-2zM27 4h1v1h-1zM29 4h2v1h-2zM33 4h2v1h-2zM40 4h1v1h-1zM42 4h1v1h-1zM44 4h3v1h-3zM50 4h1v1h-1zM52 4h2v1h-2zM55 4h1v1h-1zM59 4h1v1h-1zM3 5h4v1h-4zM11 5h2v1h-2zM14 5h5v1h-5zM20 5h2v1h-2zM24 5h1v1h-1zM26 5h3v1h-3zM31 5h5v1h-5zM37 5h1v1h-1zM39 5h1v1h-1zM41 5h1v1h-1zM44 5h1v1h-1zM47 5h1v1h-1zM51 5h1v1h-1zM53 5h1v1h-1zM0 6h2v1h-2zM3 6h1v1h-1zM5 6h2v1h-2zM8 6h2v1h-2zM12 6h4v1h-4zM17 6h5v1h-5zM23 6h1v1h-1zM25 6h1v1h-1zM32 6h3v1h-3zM37 6h6v1h-6zM45 6h1v1h-1zM52 6h1v1h-1zM55 6h3v1h-3zM62 6h2v1h-2zM5 7h1v1h-1zM8 7h1v1h-1zM10 7h1v1h-1zM12 7h5v1h-5zM19 7h2v1h-2zM25 7h1v1h-1zM27 7h1v1h-1zM30 7h3v1h-3zM35 7h1v1h-1zM40 7h3v1h-3zM45 7h3v1h-3zM49 7h1v1h-1zM51 7h1v1h-1zM54 7h7v1h-7zM62 7h1v1h-1zM0 8h1v1h-1zM3 8h3v1h-3zM7 8h1v1h-1zM10 8h1v1h-1zM17 8h2v1h-2zM25 8h1v1h-1zM27 8h2v1h-2zM30 8h1v1h-1zM33 8h8v1h-8zM43 8h2v1h-2zM47 8h6v1h-6zM56 8h1v1h-1zM58 8h1v1h-1zM62 8h2v1h-2zM0 9h3v1h-3zM6 9h1v1h-1zM8 9h2v1h-2zM12 9h3v1h-3zM17 9h2v1h-2zM21 9h2v1h-2zM24 9h1v1h-1zM27 9h1v1h-1zM30 9h1v1h-1zM32 9h7v1h-7zM40 9h1v1h-1zM43 9h2v1h-2zM46 9h2v1h-2zM49 9h2v1h-2zM53 9h3v1h-3zM58 9h3v1h-3zM63 9h1v1h-1zM1 10h2v1h-2zM4 10h2v1h-2zM7 10h2v1h-2zM10 10h3v1h-3zM21 10h1v1h-1zM23 10h1v1h-1zM25 10h1v1h-1zM27 10h11v1h-11zM43 10h1v1h-1zM45 10h2v1h-2zM52 10h2v1h-2zM55 10h2v1h-2zM59 10h2v1h-2zM0 11h1v1h-1zM4 11h1v1h-1zM9 11h2v1h-2zM12 11h1v1h-1zM23 11h4v1h-4zM28 11h1v1h-1zM32 11h3v1h-3zM37 11h2v1h-2zM41 11h1v1h-1zM43 11h3v1h-3zM49 11h2v1h-2zM52 11h1v1h-1zM55 11h4v1h-4zM60 11h2v1h-2zM0 12h1v1h-1zM3 12h3v1h-3zM13 12h1v1h-1zM15 12h1v1h-1zM19 12h2v1h-2zM22 12h1v1h-1zM28 12h3v1h-3zM32 12h1v1h-1zM35 12h2v1h-2zM42 12h2v1h-2zM46 12h1v1h-1zM49 12h2v1h-2zM53 12h1v1h-1zM56 12h1v1h-1zM59 12h5v1h-5zM1 13h2v1h-2zM5 13h4v1h-4zM12 13h1v1h-1zM14 13h2v1h-2zM19 13h1v1h-1zM22 13h2v1h-2zM25 13h5v1h-5zM31 13h3v1h-3zM36 13h5v1h-5zM43 13h1v1h-1zM46 13h1v1h-1zM50 13h1v1h-1zM55 13h3v1h-3zM59 13h5v1h-5zM0 14h1v1h-1zM2 14h1v1h-1zM4 14h1v1h-1zM6 14h1v1h-1zM8 14h1v1h-1zM11 14h1v1h-1zM13 14h1v1h-1zM17 14h1v1h-1zM20 14h2v1h-2zM23 14h1v1h-1zM25 14h1v1h-1zM27 14h1v1h-1zM29 14h1v1h-1zM32 14h2v1h-2zM36 14h1v1h-1zM38 14h1v1h-1zM40 14h3v1h-3zM48 14h1v1h-1zM50 14h1v1h-1zM54 14h1v1h-1zM56 14h1v1h-1zM58 14h5v1h-5zM1 15h1v1h-1zM3 15h2v1h-2zM7 15h3v1h-3zM11 15h1v1h-1zM13 15h2v1h-2zM16 15h10v1h-10zM27 15h3v1h-3zM32 15h3v1h-3zM38 15h5v1h-5zM44 15h1v1h-1zM47 15h1v1h-1zM49 15h1v1h-1zM51 15h1v1h-1zM53 15h3v1h-3zM59 15h1v1h-1zM61 15h3v1h-3zM0 16h1v1h-1zM2 16h4v1h-4zM7 16h2v1h-2zM12 16h5v1h-5zM18 16h3v1h-3zM26 16h1v1h-1zM28 16h5v1h-5zM35 16h1v1h-1zM40 16h3v1h-3zM44 16h1v1h-1zM46 16h2v1h-2zM49 16h2v1h-2zM53 16h1v1h-1zM56 16h1v1h-1zM58 16h1v1h-1zM60 16h1v1h-1zM63 16h1v1h-1zM0 17h1v1h-1zM3 17h4v1h-4zM10 17h8v1h-8zM19 17h1v1h-1zM22 17h6v1h-6zM29 17h1v1h-1zM31 17h1v1h-1zM33 17h1v1h-1zM35 17h1v1h-1zM37 17h2v1h-2zM40 17h3v1h-3zM45 17h1v1h-1zM51 17h13v1h-13zM0 18h1v1h-1zM2 18h1v1h-1zM4 18h1v1h-1zM8 18h5v1h-5zM14 18h2v1h-2zM18 18h1v1h-1zM20 18h2v1h-2zM23 18h6v1h-6zM32 18h1v1h-1zM34 18h1v1h-1zM39 18h1v1h-1zM41 18h3v1h-3zM48 18h2v1h-2zM51 18h2v1h-2zM56 18h1v1h-1zM0 19h1v1h-1zM5 19h4v1h-4zM12 19h3v1h-3zM16 19h1v1h-1zM19 19h3v1h-3zM25 19h1v1h-1zM28 19h1v1h-1zM30 19h2v1h-2zM38 19h1v1h-1zM48 19h1v1h-1zM50 19h1v1h-1zM52 19h2v1h-2zM56 19h1v1h-1zM58 19h4v1h-4zM0 20h3v1h-3zM6 20h1v1h-1zM8 20h2v1h-2zM13 20h2v1h-2zM18 20h1v1h-1zM20 20h2v1h-2zM24 20h2v1h-2zM28 20h1v1h-1zM30 20h2v1h-2zM34 20h2v1h-2zM37 20h1v1h-1zM39 20h1v1h-1zM51 20h3v1h-3zM55 20h1v1h-1zM57 20h5v1h-5zM0 21h2v1h-2zM10 21h1v1h-1zM15 21h1v1h-1zM18 21h1v1h-1zM22 21h3v1h-3zM27 21h1v1h-1zM31 21h2v1h-2zM34 21h1v1h-1zM36 21h1v1h-1zM45 21h1v1h-1zM50 21h4v1h-4zM56 21h3v1h-3zM0 22h1v1h-1zM3 22h3v1h-3zM7 22h2v1h-2zM10 22h2v1h-2zM13 22h1v1h-1zM16 22h2v1h-2zM19 22h3v1h-3zM23 22h2v1h-2zM26 22h1v1h-1zM28 22h3v1h-3zM33 22h4v1h-4zM41 22h1v1h-1zM44 22h1v1h-1zM46 22h1v1h-1zM50 22h1v1h-1zM52 22h1v1h-1zM55 22h2v1h-2zM59 22h2v1h-2zM63 22h1v1h-1zM0 23h1v1h-1zM2 23h3v1h-3zM7 23h1v1h-1zM11 23h3v1h-3zM17 23h1v1h-1zM20 23h1v1h-1zM24 23h2v1h-2zM30 23h1v1h-1zM35 23h3v1h-3zM44 23h3v1h-3zM53 23h2v1h-2zM56 23h1v1h-1zM59 23h2v1h-2zM62 23h1v1h-1zM1 24h1v1h-1zM3 24h1v1h-1zM9 24h2v1h-2zM16 24h1v1h-1zM19 24h1v1h-1zM22 24h4v1h-4zM28 24h2v1h-2zM31 24h1v1h-1zM34 24h1v1h-1zM36 24h4v1h-4zM43 24h1v1h-1zM45 24h1v1h-1zM49 24h1v1h-1zM53 24h3v1h-3zM57 24h4v1h-4zM63 24h1v1h-1zM0 25h1v1h-1zM3 25h2v1h-2zM8 25h3v1h-3zM12 25h3v1h-3zM17 25h2v1h-2zM21 25h1v1h-1zM23 25h1v1h-1zM25 25h3v1h-3zM29 25h4v1h-4zM34 25h1v1h-1zM36 25h5v1h-5zM43 25h1v1h-1zM46 25h1v1h-1zM50 25h2v1h-2zM53 25h1v1h-1zM55 25h1v1h-1zM57 25h1v1h-1zM59 25h1v1h-1zM62 25h2v1h-2zM2 26h1v1h-1zM4 26h2v1h-2zM8 26h7v1h-7zM16 26h1v1h-1zM18 26h1v1h-1zM24 26h1v1h-1zM26 26h4v1h-4zM35 26h6v1h-6zM42 26h3v1h-3zM47 26h4v1h-4zM52 26h2v1h-2zM56 26h8v1h-8zM3 27h4v1h-4zM12 27h1v1h-1zM14 27h2v1h-2zM17 27h1v1h-1zM21 27h1v1h-1zM26 27h1v1h-1zM29 27h1v1h-1zM32 27h1v1h-1zM35 27h3v1h-3zM39 27h1v1h-1zM41 27h1v1h-1zM44 27h1v1h-1zM47 27h2v1h-2zM50 27h2v1h-2zM55 27h4v1h-4zM62 27h2v1h-2zM4 28h1v1h-1zM6 28h3v1h-3zM10 28h1v1h-1zM13 28h1v1h-1zM18 28h4v1h-4zM25 28h1v1h-1zM29 28h2v1h-2zM32 28h2v1h-2zM38 28h6v1h-6zM45 28h1v1h-1zM48 28h1v1h-1zM54 28h4v1h-4zM61 28h1v1h-1zM3 29h1v1h-1zM8 29h2v1h-2zM15 29h4v1h-4zM20 29h1v1h-1zM22 29h1v1h-1zM24 29h1v1h-1zM30 29h1v1h-1zM32 29h3v1h-3zM37 29h4v1h-4zM42 29h1v1h-1zM44 29h1v1h-1zM46 29h1v1h-1zM48 29h1v1h-1zM50 29h1v1h-1zM54 29h1v1h-1zM56 29h2v1h-2zM59 29h1v1h-1zM61 29h1v1h-1zM0 30h4v1h-4zM6 30h1v1h-1zM8 30h1v1h-1zM10 30h2v1h-2zM14 30h3v1h-3zM21 30h3v1h-3zM25 30h1v1h-1zM27 30h6v1h-6zM36 30h1v1h-1zM39 30h1v1h-1zM42 30h4v1h-4zM47 30h5v1h-5zM55 30h6v1h-6zM0 31h1v1h-1zM2 31h3v1h-3zM6 31h4v1h-4zM11 31h1v1h-1zM17 31h2v1h-2zM20 31h3v1h-3zM24 31h1v1h-1zM26 31h1v1h-1zM28 31h1v1h-1zM30 31h2v1h-2zM33 31h2v1h-2zM36 31h4v1h-4zM41 31h1v1h-1zM44 31h2v1h-2zM47 31h2v1h-2zM50 31h2v1h-2zM55 31h2v1h-2zM59 31h5v1h-5zM1 32h4v1h-4zM7 32h1v1h-1zM10 32h4v1h-4zM17 32h2v1h-2zM20 32h1v1h-1zM24 32h1v1h-1zM26 32h1v1h-1zM29 32h5v1h-5zM36 32h6v1h-6zM43 32h3v1h-3zM47 32h1v1h-1zM52 32h1v1h-1zM54 32h3v1h-3zM58 32h2v1h-2zM61 32h2v1h-2zM1 33h1v1h-1zM3 33h1v1h-1zM5 33h1v1h-1zM10 33h3v1h-3zM14 33h2v1h-2zM17 33h1v1h-1zM19 33h1v1h-1zM22 33h2v1h-2zM25 33h2v1h-2zM28 33h1v1h-1zM30 33h1v1h-1zM32 33h2v1h-2zM35 33h2v1h-2zM40 33h2v1h-2zM44 33h2v1h-2zM47 33h1v1h-1zM50 33h2v1h-2zM54 33h1v1h-1zM56 33h1v1h-1zM59 33h1v1h-1zM61 33h2v1h-2zM0 34h1v1h-1zM3 34h1v1h-1zM5 34h2v1h-2zM9 34h1v1h-1zM13 34h1v1h-1zM15 34h1v1h-1zM17 34h1v1h-1zM22 34h2v1h-2zM25 34h4v1h-4zM30 34h4v1h-4zM35 34h4v1h-4zM40 34h5v1h-5zM46 34h1v1h-1zM48 34h2v1h-2zM52 34h7v1h-7zM61 34h1v1h-1zM63 34h1v1h-1zM1 35h1v1h-1zM3 35h2v1h-2zM7 35h2v1h-2zM10 35h4v1h-4zM16 35h3v1h-3zM28 35h3v1h-3zM35 35h1v1h-1zM40 35h1v1h-1zM46 35h1v1h-1zM48 35h1v1h-1zM50 35h1v1h-1zM55 35h1v1h-1zM57 35h2v1h-2zM60 35h4v1h-4zM0 36h3v1h-3zM4 36h1v1h-1zM6 36h3v1h-3zM11 36h4v1h-4zM16 36h1v1h-1zM18 36h2v1h-2zM23 36h1v1h-1zM25 36h9v1h-9zM37 36h1v1h-1zM42 36h1v1h-1zM46 36h3v1h-3zM57 36h3v1h-3zM61 36h1v1h-1zM63 36h1v1h-1zM0 37h1v1h-1zM2 37h5v1h-5zM8 37h3v1h-3zM12 37h2v1h-2zM15 37h1v1h-1zM17 37h5v1h-5zM23 37h1v1h-1zM26 37h1v1h-1zM28 37h1v1h-1zM30 37h4v1h-4zM37 37h1v1h-1zM40 37h4v1h-4zM45 37h4v1h-4zM54 37h1v1h-1zM57 37h1v1h-1zM59 37h2v1h-2zM62 37h2v1h-2zM0 38h1v1h-1zM2 38h1v1h-1zM4 38h2v1h-2zM9 38h2v1h-2zM12 38h1v1h-1zM16 38h2v1h-2zM19 38h3v1h-3zM23 38h2v1h-2zM26 38h2v1h-2zM29 38h1v1h-1zM31 38h1v1h-1zM34 38h1v1h-1zM38 38h4v1h-4zM46 38h3v1h-3zM52 38h3v1h-3zM57 38h2v1h-2zM61 38h2v1h-2zM3 39h3v1h-3zM7 39h1v1h-1zM9 39h1v1h-1zM13 39h2v1h-2zM16 39h4v1h-4zM22 39h2v1h-2zM25 39h2v1h-2zM29 39h4v1h-4zM34 39h3v1h-3zM42 39h1v1h-1zM47 39h2v1h-2zM50 39h2v1h-2zM54 39h4v1h-4zM59 39h1v1h-1zM61 39h3v1h-3zM0 40h1v1h-1zM4 40h1v1h-1zM8 40h1v1h-1zM10 40h1v1h-1zM13 40h4v1h-4zM18 40h1v1h-1zM20 40h1v1h-1zM22 40h2v1h-2zM25 40h4v1h-4zM30 40h1v1h-1zM32 40h2v1h-2zM35 40h2v1h-2zM38 40h2v1h-2zM41 40h2v1h-2zM45 40h1v1h-1zM50 40h1v1h-1zM52 40h1v1h-1zM55 40h1v1h-1zM59 40h3v1h-3zM0 41h3v1h-3zM7 41h3v1h-3zM11 41h3v1h-3zM15 41h4v1h-4zM23 41h2v1h-2zM29 41h1v1h-1zM32 41h1v1h-1zM36 41h2v1h-2zM39 41h1v1h-1zM43 41h1v1h-1zM47 41h6v1h-6zM54 41h3v1h-3zM59 41h4v1h-4zM1 42h2v1h-2zM5 42h1v1h-1zM7 42h2v1h-2zM10 42h1v1h-1zM12 42h4v1h-4zM18 42h1v1h-1zM20 42h2v1h-2zM27 42h1v1h-1zM29 42h3v1h-3zM33 42h3v1h-3zM37 42h1v1h-1zM41 42h5v1h-5zM49 42h6v1h-6zM56 42h2v1h-2zM60 42h2v1h-2zM63 42h1v1h-1zM0 43h1v1h-1zM5 43h1v1h-1zM7 43h2v1h-2zM15 43h2v1h-2zM18 43h5v1h-5zM24 43h1v1h-1zM27 43h1v1h-1zM29 43h2v1h-2zM32 43h3v1h-3zM40 43h3v1h-3zM45 43h2v1h-2zM49 43h3v1h-3zM53 43h1v1h-1zM57 43h1v1h-1zM0 44h1v1h-1zM4 44h2v1h-2zM14 44h1v1h-1zM16 44h1v1h-1zM18 44h1v1h-1zM21 44h1v1h-1zM24 44h2v1h-2zM28 44h1v1h-1zM30 44h2v1h-2zM34 44h1v1h-1zM36 44h1v1h-1zM38 44h1v1h-1zM41 44h1v1h-1zM43 44h3v1h-3zM47 44h1v1h-1zM49 44h6v1h-6zM56 44h4v1h-4zM0 45h3v1h-3zM9 45h2v1h-2zM12 45h1v1h-1zM15 45h1v1h-1zM20 45h2v1h-2zM24 45h2v1h-2zM28 45h1v1h-1zM31 45h1v1h-1zM33 45h2v1h-2zM36 45h3v1h-3zM42 45h3v1h-3zM47 45h1v1h-1zM52 45h1v1h-1zM54 45h1v1h-1zM56 45h2v1h-2zM59 45h1v1h-1zM61 45h1v1h-1zM63 45h1v1h-1zM2 46h1v1h-1zM4 46h7v1h-7zM13 46h1v1h-1zM15 46h1v1h-1zM19 46h3v1h-3zM26 46h2v1h-2zM29 46h1v1h-1zM31 46h1v1h-1zM39 46h3v1h-3zM43 46h1v1h-1zM47 46h3v1h-3zM53 46h8v1h-8zM2 47h2v1h-2zM5 47h2v1h-2zM8 47h1v1h-1zM13 47h1v1h-1zM16 47h5v1h-5zM23 47h1v1h-1zM28 47h1v1h-1zM31 47h2v1h-2zM36 47h1v1h-1zM38 47h2v1h-2zM42 47h4v1h-4zM50 47h2v1h-2zM54 47h1v1h-1zM56 47h3v1h-3zM60 47h1v1h-1zM0 48h1v1h-1zM3 48h2v1h-2zM7 48h3v1h-3zM11 48h2v1h-2zM16 48h4v1h-4zM22 48h3v1h-3zM27 48h2v1h-2zM33 48h1v1h-1zM35 48h3v1h-3zM39 48h3v1h-3zM43 48h3v1h-3zM48 48h4v1h-4zM53 48h3v1h-3zM58 48h1v1h-1zM60 48h1v1h-1zM62 48h1v1h-1zM1 49h1v1h-1zM3 49h1v1h-1zM5 49h1v1h-1zM7 49h2v1h-2zM10 49h1v1h-1zM12 49h1v1h-1zM15 49h1v1h-1zM21 49h1v1h-1zM23 49h2v1h-2zM28 49h1v1h-1zM30 49h5v1h-5zM37 49h1v1h-1zM40 49h3v1h-3zM46 49h1v1h-1zM50 49h1v1h-1zM58 49h1v1h-1zM60 49h3v1h-3zM0 50h2v1h-2zM5 50h2v1h-2zM9 50h9v1h-9zM20 50h2v1h-2zM23 50h2v1h-2zM26 50h2v1h-2zM29 50h1v1h-1zM31 50h1v1h-1zM33 50h7v1h-7zM41 50h1v1h-1zM46 50h3v1h-3zM50 50h2v1h-2zM53 50h3v1h-3zM62 50h1v1h-1zM0 51h2v1h-2zM4 51h4v1h-4zM12 51h1v1h-1zM14 51h4v1h-4zM19 51h3v1h-3zM27 51h3v1h-3zM34 51h1v1h-1zM37 51h1v1h-1zM41 51h1v1h-1zM43 51h2v1h-2zM46 51h1v1h-1zM49 51h6v1h-6zM57 51h2v1h-2zM60 51h3v1h-3zM2 52h3v1h-3zM6 52h1v1h-1zM9 52h1v1h-1zM11 52h1v1h-1zM13 52h1v1h-1zM16 52h2v1h-2zM19 52h1v1h-1zM23 52h2v1h-2zM28 52h1v1h-1zM31 52h1v1h-1zM35 52h1v1h-1zM37 52h1v1h-1zM41 52h4v1h-4zM49 52h3v1h-3zM55 52h3v1h-3zM61 52h1v1h-1zM63 52h1v1h-1zM0 53h1v1h-1zM2 53h1v1h-1zM4 53h3v1h-3zM10 53h3v1h-3zM17 53h1v1h-1zM19 53h2v1h-2zM23 53h3v1h-3zM28 53h5v1h-5zM34 53h3v1h-3zM38 53h1v1h-1zM42 53h2v1h-2zM46 53h2v1h-2zM51 53h1v1h-1zM53 53h1v1h-1zM55 53h4v1h-4zM60 53h1v1h-1zM63 53h1v1h-1zM1 54h5v1h-5zM9 54h1v1h-1zM11 54h1v1h-1zM17 54h3v1h-3zM21 54h3v1h-3zM28 54h2v1h-2zM31 54h1v1h-1zM33 54h1v1h-1zM35 54h1v1h-1zM37 54h3v1h-3zM41 54h1v1h-1zM43 54h3v1h-3zM48 54h2v1h-2zM55 54h1v1h-1zM58 54h1v1h-1zM61 54h1v1h-1zM63 54h1v1h-1zM1 55h2v1h-2zM9 55h4v1h-4zM16 55h1v1h-1zM20 55h1v1h-1zM23 55h1v1h-1zM28 55h2v1h-2zM31 55h2v1h-2zM36 55h1v1h-1zM38 55h1v1h-1zM40 55h2v1h-2zM43 55h1v1h-1zM47 55h3v1h-3zM51 55h3v1h-3zM57 55h1v1h-1zM62 55h1v1h-1zM0 56h1v1h-1zM3 56h6v1h-6zM10 56h1v1h-1zM12 56h1v1h-1zM16 56h4v1h-4zM23 56h1v1h-1zM26 56h2v1h-2zM29 56h1v1h-1zM33 56h2v1h-2zM37 56h1v1h-1zM39 56h1v1h-1zM43 56h1v1h-1zM45 56h3v1h-3zM49 56h4v1h-4zM54 56h6v1h-6zM62 56h2v1h-2zM0 57h1v1h-1zM2 57h1v1h-1zM4 57h5v1h-5zM16 57h2v1h-2zM20 57h1v1h-1zM22 57h1v1h-1zM27 57h4v1h-4zM32 57h1v1h-1zM34 57h1v1h-1zM36 57h3v1h-3zM43 57h1v1h-1zM46 57h1v1h-1zM48 57h2v1h-2zM54 57h2v1h-2zM57 57h2v1h-2zM60 57h1v1h-1zM62 57h2v1h-2zM0 58h2v1h-2zM6 58h2v1h-2zM10 58h1v1h-1zM13 58h2v1h-2zM21 58h1v1h-1zM25 58h1v1h-1zM27 58h6v1h-6zM34 58h1v1h-1zM36 58h1v1h-1zM38 58h2v1h-2zM41 58h3v1h-3zM45 58h5v1h-5zM51 58h1v1h-1zM55 58h1v1h-1zM58 58h1v1h-1zM63 58h1v1h-1zM0 59h2v1h-2zM3 59h7v1h-7zM11 59h2v1h-2zM16 59h2v1h-2zM19 59h1v1h-1zM21 59h1v1h-1zM24 59h5v1h-5zM31 59h2v1h-2zM36 59h2v1h-2zM40 59h2v1h-2zM43 59h2v1h-2zM46 59h6v1h-6zM55 59h1v1h-1zM60 59h1v1h-1zM62 59h1v1h-1zM0 60h2v1h-2zM3 60h1v1h-1zM5 60h1v1h-1zM9 60h3v1h-3zM17 60h2v1h-2zM20 60h1v1h-1zM23 60h2v1h-2zM26 60h4v1h-4zM31 60h3v1h-3zM37 60h2v1h-2zM40 60h1v1h-1zM42 60h7v1h-7zM50 60h1v1h-1zM56 60h2v1h-2zM59 60h2v1h-2zM2 61h1v1h-1zM5 61h1v1h-1zM9 61h1v1h-1zM12 61h1v1h-1zM22 61h3v1h-3zM27 61h7v1h-7zM37 61h4v1h-4zM42 61h1v1h-1zM44 61h5v1h-5zM50 61h1v1h-1zM54 61h1v1h-1zM57 61h5v1h-5zM1 62h1v1h-1zM3 62h1v1h-1zM5 62h1v1h-1zM8 62h1v1h-1zM10 62h1v1h-1zM12 62h4v1h-4zM19 62h1v1h-1zM24 62h4v1h-4zM29 62h1v1h-1zM32 62h2v1h-2zM37 62h4v1h-4zM43 62h2v1h-2zM46 62h2v1h-2zM49 62h5v1h-5zM55 62h8v1h-8zM0 63h1v1h-1zM3 63h2v1h-2zM7 63h1v1h-1zM13 63h4v1h-4zM18 63h2v1h-2zM21 63h3v1h-3zM26 63h2v1h-2zM29 63h2v1h-2zM33 63h1v1h-1zM37 63h1v1h-1zM39 63h1v1h-1zM41 63h1v1h-1zM43 63h2v1h-2zM47 63h4v1h-4zM52 63h4v1h-4zM59 63h1v1h-1z"/><path fill="#80ff00" d="M7 0h1v1h-1zM24 0h1v1h-1zM27 0h1v1h-1zM32 0h1v1h-1zM34 0h1v1h-1zM41 0h1v1h-1zM47 0h1v1h-1zM58 0h1v1h-1zM60 0h1v1h-1zM63 0h1v1h-1zM4 1h1v1h-1zM8 1h1v1h-1zM19 1h2v1h-2zM34 1h1v1h-1zM36 1h3v1h-3zM40 1h1v1h-1zM47 1h1v1h-1zM53 1h1v1h-1zM60 1h1v1h-1zM1 2h2v1h-2zM5 2h1v1h-1zM19 2h1v1h-1zM31 2h1v1h-1zM35 2h3v1h-3zM46 2h1v1h-1zM51 2h3v1h-3zM61 2h1v1h-1zM27 3h1v1h-1zM39 3h1v1h-1zM50 3h2v1h-2zM5 4h1v1h-1zM7 4h1v1h-1zM11 4h1v1h-1zM21 4h1v1h-1zM49 4h1v1h-1zM2 5h3v1h-3zM6 5h1v1h-1zM11 5h3v1h-3zM29 5h1v1h-1zM31 5h1v1h-1zM34 5h1v1h-1zM55 5h1v1h-1zM59 5h1v1h-1zM2 6h1v1h-1zM10 6h1v1h-1zM12 6h1v1h-1zM22 6h1v1h-1zM26 6h1v1h-1zM30 6h1v1h-1zM63 6h1v1h-1zM12 7h1v1h-1zM21 7h1v1h-1zM30 7h1v1h-1zM40 7h2v1h-2zM49 7h1v1h-1zM62 7h1v1h-1zM19 8h1v1h-1zM40 8h1v1h-1zM49 8h1v1h-1zM2 9h2v1h-2zM15 9h1v1h-1zM17 9h1v1h-1zM20 9h1v1h-1zM25 9h1v1h-1zM28 9h1v1h-1zM43 9h3v1h-3zM48 9h2v1h-2zM1 10h1v1h-1zM3 10h1v1h-1zM6 10h1v1h-1zM21 10h2v1h-2zM29 10h1v1h-1zM48 10h1v1h-1zM52 10h1v1h-1zM57 10h3v1h-3zM1 11h1v1h-1zM13 11h1v1h-1zM23 11h2v1h-2zM27 11h1v1h-1zM29 11h2v1h-2zM42 11h1v1h-1zM49 11h1v1h-1zM59 11h2v1h-2zM14 12h1v1h-1zM17 12h1v1h-1zM19 12h1v1h-1zM25 12h2v1h-2zM37 12h1v1h-1zM50 12h1v1h-1zM52 12h1v1h-1zM55 12h1v1h-1zM7 13h1v1h-1zM14 13h1v1h-1zM16 13h1v1h-1zM30 13h1v1h-1zM43 13h1v1h-1zM49 13h1v1h-1zM52 13h1v1h-1zM55 13h1v1h-1zM8 14h1v1h-1zM42 14h2v1h-2zM49 14h2v1h-2zM7 15h1v1h-1zM9 15h2v1h-2zM24 15h1v1h-1zM27 15h2v1h-2zM32 15h1v1h-1zM35 15h1v1h-1zM54 15h1v1h-1zM58 15h1v1h-1zM18 16h1v1h-1zM27 16h1v1h-1zM34 16h1v1h-1zM36 16h1v1h-1zM43 16h1v1h-1zM56 16h2v1h-2zM61 16h1v1h-1zM10 17h1v1h-1zM18 17h1v1h-1zM24 17h1v1h-1zM28 17h1v1h-1zM37 17h3v1h-3zM44 17h1v1h-1zM59 17h2v1h-2zM0 18h1v1h-1zM9 18h1v1h-1zM16 18h1v1h-1zM56 18h1v1h-1zM60 18h1v1h-1zM62 18h1v1h-1zM5 19h1v1h-1zM17 19h1v1h-1zM19 19h1v1h-1zM23 19h1v1h-1zM30 19h2v1h-2zM61 19h1v1h-1zM63 19h1v1h-1zM7 20h1v1h-1zM15 20h1v1h-1zM20 20h1v1h-1zM31 20h1v1h-1zM40 20h1v1h-1zM60 20h1v1h-1zM15 21h2v1h-2zM20 21h2v1h-2zM24 21h1v1h-1zM26 21h1v1h-1zM30 21h1v1h-1zM40 21h1v1h-1zM42 21h1v1h-1zM54 21h1v1h-1zM59 21h1v1h-1zM61 21h1v1h-1zM20 22h1v1h-1zM22 22h1v1h-1zM33 22h1v1h-1zM41 22h1v1h-1zM44 22h1v1h-1zM51 22h1v1h-1zM55 22h1v1h-1zM62 22h1v1h-1zM2 23h1v1h-1zM15 23h1v1h-1zM19 23h2v1h-2zM37 23h1v1h-1zM52 23h1v1h-1zM1 24h1v1h-1zM5 24h1v1h-1zM11 24h2v1h-2zM16 24h1v1h-1zM45 24h1v1h-1zM60 24h1v1h-1zM13 25h1v1h-1zM15 25h2v1h-2zM23 25h1v1h-1zM34 25h1v1h-1zM0 26h1v1h-1zM34 26h1v1h-1zM48 26h1v1h-1zM50 26h1v1h-1zM60 26h2v1h-2zM5 27h1v1h-1zM10 27h1v1h-1zM29 27h1v1h-1zM31 27h1v1h-1zM41 27h1v1h-1zM44 27h1v1h-1zM48 27h1v1h-1zM53 27h2v1h-2zM56 27h1v1h-1zM59 27h1v1h-1zM8 28h1v1h-1zM10 28h2v1h-2zM29 28h1v1h-1zM33 28h2v1h-2zM48 28h1v1h-1zM55 28h1v1h-1zM60 28h2v1h-2zM0 29h1v1h-1zM4 29h1v1h-1zM10 29h1v1h-1zM16 29h1v1h-1zM24 29h2v1h-2zM49 29h1v1h-1zM54 29h2v1h-2zM57 29h1v1h-1zM61 29h1v1h-1zM0 30h2v1h-2zM16 30h1v1h-1zM20 30h1v1h-1zM23 30h1v1h-1zM25 30h1v1h-1zM29 30h1v1h-1zM35 30h2v1h-2zM38 30h1v1h-1zM49 30h1v1h-1zM0 31h2v1h-2zM3 31h1v1h-1zM16 31h1v1h-1zM18 31h1v1h-1zM22 31h1v1h-1zM28 31h1v1h-1zM35 31h1v1h-1zM49 31h3v1h-3zM55 31h1v1h-1zM0 32h1v1h-1zM10 32h1v1h-1zM29 32h1v1h-1zM33 32h1v1h-1zM37 32h1v1h-1zM49 32h2v1h-2zM55 32h1v1h-1zM3 33h1v1h-1zM5 33h1v1h-1zM9 33h2v1h-2zM12 33h1v1h-1zM14 33h1v1h-1zM19 33h1v1h-1zM33 33h1v1h-1zM36 33h2v1h-2zM45 33h1v1h-1zM55 33h1v1h-1zM0 34h1v1h-1zM4 34h1v1h-1zM10 34h2v1h-2zM13 34h1v1h-1zM16 34h1v1h-1zM18 34h1v1h-1zM23 34h1v1h-1zM34 34h1v1h-1zM36 34h1v1h-1zM42 34h1v1h-1zM44 34h1v1h-1zM55 34h1v1h-1zM1 35h1v1h-1zM9 35h2v1h-2zM17 35h1v1h-1zM21 35h2v1h-2zM36 35h1v1h-1zM53 35h1v1h-1zM55 35h1v1h-1zM57 35h1v1h-1zM60 35h1v1h-1zM12 36h1v1h-1zM40 36h1v1h-1zM52 36h1v1h-1zM55 36h1v1h-1zM57 36h3v1h-3zM62 36h1v1h-1zM0 37h1v1h-1zM16 37h1v1h-1zM20 37h1v1h-1zM26 37h1v1h-1zM35 37h1v1h-1zM39 37h1v1h-1zM50 37h2v1h-2zM55 37h1v1h-1zM63 37h1v1h-1zM0 38h2v1h-2zM17 38h1v1h-1zM27 38h2v1h-2zM36 38h1v1h-1zM40 38h1v1h-1zM44 38h1v1h-1zM50 38h2v1h-2zM1 39h1v1h-1zM3 39h1v1h-1zM27 39h1v1h-1zM47 39h1v1h-1zM3 40h2v1h-2zM15 40h1v1h-1zM27 40h1v1h-1zM30 40h1v1h-1zM32 40h1v1h-1zM40 40h3v1h-3zM48 40h2v1h-2zM14 41h1v1h-1zM24 41h1v1h-1zM27 41h1v1h-1zM31 41h1v1h-1zM34 41h3v1h-3zM42 41h1v1h-1zM50 41h1v1h-1zM57 41h1v1h-1zM61 41h1v1h-1zM12 42h1v1h-1zM18 42h1v1h-1zM20 42h1v1h-1zM23 42h1v1h-1zM45 42h1v1h-1zM48 42h2v1h-2zM4 43h3v1h-3zM9 43h1v1h-1zM11 43h1v1h-1zM13 43h1v1h-1zM19 43h2v1h-2zM29 43h1v1h-1zM37 43h2v1h-2zM54 43h1v1h-1zM57 43h1v1h-1zM1 44h1v1h-1zM5 44h1v1h-1zM9 44h1v1h-1zM15 44h1v1h-1zM36 44h1v1h-1zM39 44h1v1h-1zM45 44h1v1h-1zM54 44h1v1h-1zM56 44h4v1h-4zM14 45h1v1h-1zM20 45h1v1h-1zM22 45h1v1h-1zM30 45h1v1h-1zM36 45h1v1h-1zM55 45h1v1h-1zM25 46h1v1h-1zM36 46h1v1h-1zM7 47h2v1h-2zM12 47h1v1h-1zM27 47h1v1h-1zM39 47h1v1h-1zM44 47h1v1h-1zM63 47h1v1h-1zM3 48h1v1h-1zM26 48h1v1h-1zM37 48h1v1h-1zM44 48h1v1h-1zM54 48h1v1h-1zM9 49h1v1h-1zM44 49h1v1h-1zM59 49h1v1h-1zM2 50h2v1h-2zM10 50h1v1h-1zM20 50h1v1h-1zM43 50h1v1h-1zM57 50h1v1h-1zM60 50h1v1h-1zM62 50h1v1h-1zM4 51h1v1h-1zM16 51h1v1h-1zM18 51h1v1h-1zM28 51h1v1h-1zM36 51h1v1h-1zM40 51h1v1h-1zM50 51h2v1h-2zM54 51h1v1h-1zM57 51h2v1h-2zM3 52h1v1h-1zM6 52h1v1h-1zM17 52h2v1h-2zM29 52h1v1h-1zM35 52h1v1h-1zM49 52h1v1h-1zM56 52h1v1h-1zM2 53h1v1h-1zM6 53h1v1h-1zM8 53h1v1h-1zM40 53h1v1h-1zM46 53h1v1h-1zM51 53h1v1h-1zM56 53h1v1h-1zM61 53h1v1h-1zM0 54h1v1h-1zM2 54h1v1h-1zM6 54h1v1h-1zM14 54h1v1h-1zM17 54h1v1h-1zM32 54h2v1h-2zM38 54h2v1h-2zM46 54h1v1h-1zM55 54h1v1h-1zM57 54h1v1h-1zM59 54h1v1h-1zM4 55h3v1h-3zM26 55h1v1h-1zM40 55h1v1h-1zM56 55h1v1h-1zM16 56h1v1h-1zM20 56h1v1h-1zM34 56h1v1h-1zM37 56h1v1h-1zM47 56h1v1h-1zM61 56h1v1h-1zM20 57h2v1h-2zM31 57h1v1h-1zM37 57h1v1h-1zM43 57h1v1h-1zM50 57h1v1h-1zM53 57h1v1h-1zM60 57h1v1h-1zM0 58h1v1h-1zM5 58h1v1h-1zM8 58h1v1h-1zM14 58h1v1h-1zM21 58h1v1h-1zM29 58h1v1h-1zM32 58h1v1h-1zM35 58h1v1h-1zM43 58h2v1h-2zM56 58h1v1h-1zM60 58h1v1h-1zM63 58h1v1h-1zM9 59h1v1h-1zM13 59h1v1h-1zM28 59h1v1h-1zM35 59h1v1h-1zM37 59h3v1h-3zM50 59h1v1h-1zM52 59h1v1h-1zM57 59h1v1h-1zM60 59h1v1h-1zM62 59h2v1h-2zM12 60h1v1h-1zM31 60h1v1h-1zM36 60h3v1h-3zM41 60h2v1h-2zM45 60h1v1h-1zM54 60h1v1h-1zM59 60h1v1h-1zM8 61h1v1h-1zM12 61h1v1h-1zM17 61h1v1h-1zM35 61h1v1h-1zM37 61h1v1h-1zM47 61h1v1h-1zM55 61h1v1h-1zM9 62h1v1h-1zM11 62h1v1h-1zM15 62h1v1h-1zM39 62h1v1h-1zM47 62h1v1h-1zM59 62h1v1h-1zM6 63h1v1h-1zM16 63h1v1h-1zM24 63h2v1h-2zM30 63h1v1h-1zM40 63h1v1h-1zM45 63h2v1h-2zM60 63h2v1h-2z"/></pattern><pattern id="meshs" width="64" height="64" patternUnits="userSpaceOnUse"><rect width="64" height="64" fill="#ff0000"/><path fill="#00ff00" d="M10 0h1v1h-1zM12 0h1v1h-1zM19 0h2v1h-2zM39 0h1v1h-1zM48 0h2v1h-2zM56 0h1v1h-1zM60 0h2v1h-2zM13 1h1v1h-1zM15 1h1v1h-1zM19 1h1v1h-1zM34 1h1v1h-1zM39 1h2v1h-2zM44 1h1v1h-1zM49 1h1v1h-1zM51 1h1v1h-1zM62 1h1v1h-1zM30 2h1v1h-1zM35 2h1v1h-1zM39 2h1v1h-1zM42 2h1v1h-1zM44 2h1v1h-1zM47 2h2v1h-2zM59 2h1v1h-1zM10 3h2v1h-2zM18 3h1v1h-1zM34 3h1v1h-1zM38 3h1v1h-1zM41 3h1v1h-1zM47 3h1v1h-1zM49 3h1v1h-1zM58 3h1v1h-1zM10 4h1v1h-1zM16 4h1v1h-1zM19 4h1v1h-1zM21 4h1v1h-1zM34 4h1v1h-1zM36 4h1v1h-1zM47 4h1v1h-1zM57 4h1v1h-1zM63 4h1v1h-1zM2 5h1v1h-1zM11 5h1v1h-1zM19 5h1v1h-1zM34 5h1v1h-1zM36 5h1v1h-1zM43 5h3v1h-3zM57 5h2v1h-2zM60 5h1v1h-1zM1 6h1v1h-1zM14 6h1v1h-1zM17 6h1v1h-1zM22 6h1v1h-1zM32 6h2v1h-2zM42 6h3v1h-3zM59 6h1v1h-1zM1 7h1v1h-1zM13 7h1v1h-1zM16 7h1v1h-1zM23 7h2v1h-2zM26 7h1v1h-1zM30 7h2v1h-2zM37 7h1v1h-1zM51 7h1v1h-1zM53 7h4v1h-4zM60 7h2v1h-2zM17 8h2v1h-2zM38 8h2v1h-2zM42 8h1v1h-1zM46 8h1v1h-1zM48 8h1v1h-1zM52 8h1v1h-1zM55 8h1v1h-1zM58 8h2v1h-2zM62 8h1v1h-1zM5 9h1v1h-1zM7 9h1v1h-1zM12 9h1v1h-1zM32 9h1v1h-1zM34 9h1v1h-1zM40 9h2v1h-2zM46 9h1v1h-1zM48 9h4v1h-4zM5 10h3v1h-3zM40 10h1v1h-1zM47 10h3v1h-3zM51 10h1v1h-1zM54 10h1v1h-1zM57 10h1v1h-1zM4 11h1v1h-1zM7 11h1v1h-1zM15 11h1v1h-1zM23 11h3v1h-3zM29 11h1v1h-1zM33 11h2v1h-2zM39 11h1v1h-1zM41 11h1v1h-1zM44 11h1v1h-1zM49 11h1v1h-1zM54 11h1v1h-1zM57 11h1v1h-1zM5 12h1v1h-1zM12 12h1v1h-1zM16 12h1v1h-1zM34 12h1v1h-1zM40 12h2v1h-2zM47 12h1v1h-1zM49 12h1v1h-1zM54 12h1v1h-1zM4 13h1v1h-1zM6 13h2v1h-2zM11 13h2v1h-2zM24 13h1v1h-1zM34 13h1v1h-1zM40 13h1v1h-1zM42 13h1v1h-1zM52 13h1v1h-1zM57 13h2v1h-2zM62 13h1v1h-1zM3 14h1v1h-1zM9 14h1v1h-1zM15 14h1v1h-1zM17 14h1v1h-1zM27 14h1v1h-1zM31 14h2v1h-2zM40 14h1v1h-1zM58 14h1v1h-1zM12 15h1v1h-1zM24 15h1v1h-1zM27 15h1v1h-1zM35 15h1v1h-1zM38 15h2v1h-2zM41 15h1v1h-1zM46 15h1v1h-1zM48 15h1v1h-1zM57 15h1v1h-1zM1 16h1v1h-1zM15 16h1v1h-1zM24 16h2v1h-2zM41 16h1v1h-1zM44 16h1v1h-1zM47 16h1v1h-1zM52 16h3v1h-3zM56 16h3v1h-3zM20 17h3v1h-3zM30 17h2v1h-2zM35 17h2v1h-2zM54 17h2v1h-2zM57 17h2v1h-2zM63 17h1v1h-1zM5 18h2v1h-2zM19 18h1v1h-1zM31 18h2v1h-2zM34 18h1v1h-1zM37 18h1v1h-1zM43 18h1v1h-1zM45 18h1v1h-1zM0 19h1v1h-1zM20 19h1v1h-1zM25 19h1v1h-1zM29 19h1v1h-1zM33 19h1v1h-1zM41 19h1v1h-1zM50 19h2v1h-2zM53 19h1v1h-1zM61 19h1v1h-1zM1 20h1v1h-1zM22 20h1v1h-1zM25 20h1v1h-1zM27 20h2v1h-2zM45 20h1v1h-1zM47 20h1v1h-1zM58 20h1v1h-1zM0 21h2v1h-2zM9 21h1v1h-1zM27 21h1v1h-1zM29 21h1v1h-1zM33 21h2v1h-2zM44 21h1v1h-1zM53 21h1v1h-1zM63 21h1v1h-1zM0 22h1v1h-1zM11 22h1v1h-1zM26 22h1v1h-1zM32 22h1v1h-1zM36 22h1v1h-1zM40 22h1v1h-1zM43 22h2v1h-2zM51 22h2v1h-2zM60 22h1v1h-1zM62 22h1v1h-1zM5 23h1v1h-1zM13 23h1v1h-1zM18 23h1v1h-1zM20 23h1v1h-1zM26 23h1v1h-1zM31 23h1v1h-1zM39 23h1v1h-1zM43 23h2v1h-2zM59 23h3v1h-3zM19 24h1v1h-1zM33 24h1v1h-1zM38 24h3v1h-3zM55 24h2v1h-2zM58 24h1v1h-1zM10 25h1v1h-1zM24 25h1v1h-1zM40 25h1v1h-1zM43 25h1v1h-1zM48 25h1v1h-1zM5 26h1v1h-1zM8 26h1v1h-1zM27 26h1v1h-1zM36 26h1v1h-1zM40 26h2v1h-2zM53 26h1v1h-1zM0 27h1v1h-1zM4 27h1v1h-1zM6 27h1v1h-1zM9 27h2v1h-2zM26 27h1v1h-1zM38 27h1v1h-1zM41 27h1v1h-1zM44 27h1v1h-1zM47 27h1v1h-1zM50 27h1v1h-1zM53 27h1v1h-1zM57 27h1v1h-1zM62 27h1v1h-1zM3 28h2v1h-2zM7 28h1v1h-1zM20 28h1v1h-1zM24 28h1v1h-1zM36 28h3v1h-3zM40 28h1v1h-1zM50 28h1v1h-1zM55 28h3v1h-3zM59 28h1v1h-1zM2 29h2v1h-2zM30 29h3v1h-3zM37 29h1v1h-1zM4 30h2v1h-2zM7 30h1v1h-1zM15 30h1v1h-1zM18 30h1v1h-1zM24 30h2v1h-2zM30 30h1v1h-1zM32 30h1v1h-1zM34 30h1v1h-1zM38 30h1v1h-1zM44 30h3v1h-3zM53 30h1v1h-1zM55 30h1v1h-1zM58 30h1v1h-1zM62 30h2v1h-2zM0 31h1v1h-1zM3 31h1v1h-1zM17 31h1v1h-1zM23 31h3v1h-3zM33 31h1v1h-1zM43 31h2v1h-2zM56 31h1v1h-1zM1 32h2v1h-2zM7 32h1v1h-1zM23 32h1v1h-1zM26 32h1v1h-1zM29 32h2v1h-2zM32 32h1v1h-1zM41 32h2v1h-2zM51 32h1v1h-1zM62 32h1v1h-1zM0 33h2v1h-2zM20 33h1v1h-1zM33 33h1v1h-1zM41 33h1v1h-1zM43 33h1v1h-1zM46 33h1v1h-1zM49 33h1v1h-1zM60 33h1v1h-1zM63 33h1v1h-1zM16 34h1v1h-1zM20 34h1v1h-1zM25 34h1v1h-1zM33 34h2v1h-2zM39 34h1v1h-1zM42 34h1v1h-1zM53 34h2v1h-2zM56 34h1v1h-1zM58 34h1v1h-1zM2 35h2v1h-2zM6 35h2v1h-2zM14 35h2v1h-2zM44 35h1v1h-1zM46 35h1v1h-1zM50 35h1v1h-1zM54 35h1v1h-1zM58 35h1v1h-1zM61 35h1v1h-1zM63 35h1v1h-1zM7 36h1v1h-1zM24 36h1v1h-1zM41 36h1v1h-1zM47 36h1v1h-1zM60 36h1v1h-1zM2 37h1v1h-1zM15 37h1v1h-1zM20 37h2v1h-2zM29 37h1v1h-1zM35 37h1v1h-1zM40 37h1v1h-1zM43 37h1v1h-1zM50 37h1v1h-1zM55 37h1v1h-1zM2 38h1v1h-1zM16 38h2v1h-2zM20 38h1v1h-1zM25 38h1v1h-1zM29 38h1v1h-1zM40 38h1v1h-1zM56 38h1v1h-1zM62 38h2v1h-2zM3 39h1v1h-1zM20 39h1v1h-1zM30 39h3v1h-3zM41 39h1v1h-1zM45 39h1v1h-1zM52 39h1v1h-1zM57 39h1v1h-1zM62 39h1v1h-1zM1 40h1v1h-1zM7 40h1v1h-1zM10 40h1v1h-1zM17 40h2v1h-2zM23 40h1v1h-1zM45 40h2v1h-2zM49 40h1v1h-1zM0 41h1v1h-1zM4 41h1v1h-1zM10 41h2v1h-2zM17 41h1v1h-1zM24 41h1v1h-1zM43 41h1v1h-1zM45 41h1v1h-1zM47 41h1v1h-1zM50 41h1v1h-1zM60 41h1v1h-1zM0 42h1v1h-1zM2 42h2v1h-2zM14 42h1v1h-1zM48 42h1v1h-1zM51 42h1v1h-1zM57 42h3v1h-3zM7 43h1v1h-1zM10 43h2v1h-2zM20 43h1v1h-1zM22 43h2v1h-2zM28 43h1v1h-1zM33 43h1v1h-1zM35 43h1v1h-1zM41 43h1v1h-1zM43 43h1v1h-1zM48 43h1v1h-1zM54 43h1v1h-1zM56 43h3v1h-3zM2 44h1v1h-1zM7 44h1v1h-1zM11 44h1v1h-1zM13 44h1v1h-1zM17 44h1v1h-1zM20 44h1v1h-1zM23 44h1v1h-1zM30 44h1v1h-1zM35 44h1v1h-1zM42 44h2v1h-2zM47 44h1v1h-1zM54 44h1v1h-1zM2 45h1v1h-1zM6 45h1v1h-1zM14 45h2v1h-2zM29 45h1v1h-1zM34 45h2v1h-2zM46 45h1v1h-1zM48 45h1v1h-1zM52 45h1v1h-1zM59 45h1v1h-1zM2 46h1v1h-1zM21 46h1v1h-1zM26 46h1v1h-1zM28 46h1v1h-1zM32 46h1v1h-1zM36 46h1v1h-1zM50 46h1v1h-1zM52 46h1v1h-1zM60 46h1v1h-1zM63 46h1v1h-1zM2 47h1v1h-1zM22 47h1v1h-1zM24 47h1v1h-1zM26 47h1v1h-1zM29 47h2v1h-2zM35 47h1v1h-1zM52 47h1v1h-1zM61 47h1v1h-1zM7 48h1v1h-1zM17 48h1v1h-1zM20 48h1v1h-1zM27 48h1v1h-1zM48 48h1v1h-1zM4 49h1v1h-1zM18 49h1v1h-1zM24 49h1v1h-1zM35 49h1v1h-1zM45 49h1v1h-1zM47 49h1v1h-1zM49 49h1v1h-1zM55 49h1v1h-1zM59 49h1v1h-1zM1 50h1v1h-1zM4 50h1v1h-1zM16 50h1v1h-1zM19 50h1v1h-1zM28 50h1v1h-1zM48 50h1v1h-1zM54 50h1v1h-1zM58 50h1v1h-1zM0 51h1v1h-1zM6 51h1v1h-1zM11 51h1v1h-1zM18 51h1v1h-1zM20 51h1v1h-1zM28 51h1v1h-1zM38 51h1v1h-1zM47 51h1v1h-1zM50 51h2v1h-2zM61 51h1v1h-1zM0 52h1v1h-1zM3 52h1v1h-1zM15 52h1v1h-1zM25 52h1v1h-1zM27 52h2v1h-2zM36 52h2v1h-2zM46 52h2v1h-2zM51 52h1v1h-1zM3 53h1v1h-1zM6 53h1v1h-1zM16 53h1v1h-1zM22 53h1v1h-1zM35 53h1v1h-1zM38 53h1v1h-1zM50 53h3v1h-3zM56 53h1v1h-1zM63 53h1v1h-1zM30 54h1v1h-1zM41 54h1v1h-1zM48 54h1v1h-1zM51 54h1v1h-1zM58 54h1v1h-1zM63 54h1v1h-1zM0 55h1v1h-1zM6 55h1v1h-1zM15 55h1v1h-1zM29 55h1v1h-1zM33 55h2v1h-2zM36 55h3v1h-3zM40 55h1v1h-1zM46 55h1v1h-1zM58 55h1v1h-1zM61 55h1v1h-1zM22 56h2v1h-2zM35 56h1v1h-1zM39 56h1v1h-1zM49 56h1v1h-1zM51 56h1v1h-1zM0 57h1v1h-1zM15 57h1v1h-1zM18 57h1v1h-1zM22 57h3v1h-3zM30 57h1v1h-1zM41 57h1v1h-1zM43 57h1v1h-1zM45 57h1v1h-1zM13 58h1v1h-1zM16 58h2v1h-2zM30 58h1v1h-1zM36 58h1v1h-1zM40 58h1v1h-1zM43 58h2v1h-2zM57 58h1v1h-1zM60 58h1v1h-1zM2 59h1v1h-1zM5 59h2v1h-2zM14 59h2v1h-2zM20 59h3v1h-3zM32 59h2v1h-2zM35 59h1v1h-1zM42 59h3v1h-3zM58 59h1v1h-1zM1 60h1v1h-1zM7 60h1v1h-1zM10 60h1v1h-1zM12 60h1v1h-1zM16 60h1v1h-1zM27 60h1v1h-1zM34 60h1v1h-1zM40 60h2v1h-2zM43 60h2v1h-2zM46 60h1v1h-1zM61 60h1v1h-1zM5 61h1v1h-1zM7 61h3v1h-3zM21 61h1v1h-1zM60 61h1v1h-1zM4 62h2v1h-2zM9 62h1v1h-1zM11 62h2v1h-2zM23 62h1v1h-1zM31 62h1v1h-1zM46 62h1v1h-1zM51 62h1v1h-1zM53 62h1v1h-1zM62 62h1v1h-1zM0 63h1v1h-1zM8 63h1v1h-1zM10 63h2v1h-2zM30 63h1v1h-1zM32 63h1v1h-1zM38 63h1v1h-1zM55 63h2v1h-2zM61 63h2v1h-2z"/><path fill="#3ed8e8" d="M14 0h2v1h-2zM20 0h1v1h-1zM41 0h1v1h-1zM52 0h1v1h-1zM28 1h1v1h-1zM44 1h1v1h-1zM51 1h1v1h-1zM63 1h1v1h-1zM10 2h1v1h-1zM17 2h1v1h-1zM53 2h1v1h-1zM55 2h1v1h-1zM62 2h2v1h-2zM34 3h1v1h-1zM36 3h1v1h-1zM38 3h1v1h-1zM50 3h1v1h-1zM39 4h1v1h-1zM48 4h1v1h-1zM56 4h1v1h-1zM32 5h1v1h-1zM35 5h1v1h-1zM37 5h1v1h-1zM11 6h1v1h-1zM26 6h1v1h-1zM33 6h1v1h-1zM50 6h2v1h-2zM58 6h1v1h-1zM61 6h1v1h-1zM1 7h1v1h-1zM18 7h1v1h-1zM27 7h1v1h-1zM45 7h1v1h-1zM2 8h1v1h-1zM44 8h1v1h-1zM58 8h1v1h-1zM63 8h1v1h-1zM5 9h1v1h-1zM29 9h1v1h-1zM43 9h1v1h-1zM49 9h1v1h-1zM54 9h1v1h-1zM6 10h2v1h-2zM25 10h1v1h-1zM32 10h1v1h-1zM14 11h1v1h-1zM20 11h1v1h-1zM25 11h1v1h-1zM35 11h1v1h-1zM51 11h1v1h-1zM55 11h1v1h-1zM58 11h1v1h-1zM13 12h1v1h-1zM24 12h1v1h-1zM19 13h1v1h-1zM43 13h1v1h-1zM23 14h1v1h-1zM26 14h1v1h-1zM31 14h1v1h-1zM49 14h1v1h-1zM51 14h1v1h-1zM56 14h1v1h-1zM30 16h1v1h-1zM39 16h1v1h-1zM16 17h1v1h-1zM28 17h1v1h-1zM38 17h1v1h-1zM51 17h1v1h-1zM22 18h1v1h-1zM42 19h1v1h-1zM4 20h1v1h-1zM9 20h1v1h-1zM29 20h1v1h-1zM53 20h1v1h-1zM59 20h1v1h-1zM9 21h1v1h-1zM11 21h1v1h-1zM25 21h1v1h-1zM29 21h1v1h-1zM48 21h1v1h-1zM52 21h1v1h-1zM3 22h1v1h-1zM6 22h1v1h-1zM8 22h1v1h-1zM34 22h1v1h-1zM62 22h1v1h-1zM9 23h1v1h-1zM23 23h1v1h-1zM39 23h1v1h-1zM49 23h1v1h-1zM31 24h1v1h-1zM47 24h1v1h-1zM61 24h1v1h-1zM1 25h1v1h-1zM25 25h1v1h-1zM29 25h1v1h-1zM37 25h1v1h-1zM22 26h1v1h-1zM28 26h1v1h-1zM7 27h1v1h-1zM9 27h1v1h-1zM12 27h1v1h-1zM23 27h1v1h-1zM32 27h1v1h-1zM57 27h1v1h-1zM9 28h1v1h-1zM33 28h1v1h-1zM44 28h1v1h-1zM52 28h1v1h-1zM20 29h1v1h-1zM39 29h1v1h-1zM33 30h1v1h-1zM39 31h1v1h-1zM61 31h1v1h-1zM8 32h1v1h-1zM28 32h1v1h-1zM37 32h1v1h-1zM11 33h1v1h-1zM7 34h1v1h-1zM54 34h1v1h-1zM10 35h1v1h-1zM52 35h1v1h-1zM25 36h1v1h-1zM57 36h1v1h-1zM19 37h1v1h-1zM37 37h1v1h-1zM0 38h1v1h-1zM11 38h1v1h-1zM41 38h1v1h-1zM47 38h1v1h-1zM53 38h1v1h-1zM60 38h1v1h-1zM14 39h1v1h-1zM19 39h1v1h-1zM45 39h1v1h-1zM24 40h1v1h-1zM3 41h1v1h-1zM5 41h1v1h-1zM15 41h1v1h-1zM56 41h1v1h-1zM3 42h1v1h-1zM10 42h2v1h-2zM38 42h1v1h-1zM40 42h1v1h-1zM49 42h1v1h-1zM62 42h1v1h-1zM8 43h1v1h-1zM46 43h1v1h-1zM54 43h1v1h-1zM8 44h1v1h-1zM10 44h1v1h-1zM42 44h1v1h-1zM38 45h1v1h-1zM55 45h1v1h-1zM57 45h2v1h-2zM34 46h1v1h-1zM5 47h1v1h-1zM9 47h1v1h-1zM25 47h1v1h-1zM46 47h1v1h-1zM57 47h1v1h-1zM61 48h1v1h-1zM22 49h1v1h-1zM31 49h1v1h-1zM40 49h1v1h-1zM57 49h2v1h-2zM63 49h1v1h-1zM14 50h1v1h-1zM20 50h1v1h-1zM27 50h1v1h-1zM45 51h1v1h-1zM53 51h1v1h-1zM57 51h1v1h-1zM63 51h1v1h-1zM13 52h1v1h-1zM38 52h1v1h-1zM50 52h1v1h-1zM53 52h1v1h-1zM61 53h1v1h-1zM57 54h1v1h-1zM42 55h1v1h-1zM26 56h1v1h-1zM55 56h1v1h-1zM57 56h1v1h-1zM61 56h1v1h-1zM2 57h1v1h-1zM31 57h1v1h-1zM41 57h1v1h-1zM49 57h1v1h-1zM53 57h1v1h-1zM9 58h1v1h-1zM33 58h1v1h-1zM47 58h1v1h-1zM54 58h1v1h-1zM8 59h1v1h-1zM44 59h1v1h-1zM52 59h2v1h-2zM60 59h2v1h-2zM0 60h1v1h-1zM14 60h1v1h-1zM18 60h1v1h-1zM1 61h1v1h-1zM32 61h1v1h-1zM47 61h1v1h-1zM4 62h1v1h-1zM40 62h1v1h-1zM55 62h1v1h-1zM58 62h1v1h-1zM27 63h1v1h-1z"/></pattern><pattern id="meshl" width="64" height="64" patternUnits="userSpaceOnUse"><rect width="64" height="64" fill="#ff0000"/><path fill="#80ff00" d="M0 0h2v1h-2zM3 0h2v1h-2zM6 0h2v1h-2zM13 0h5v1h-5zM19 0h1v1h-1zM26 0h2v1h-2zM29 0h1v1h-1zM31 0h1v1h-1zM36 0h1v1h-1zM38 0h1v1h-1zM40 0h1v1h-1zM45 0h1v1h-1zM47 0h2v1h-2zM50 0h1v1h-1zM52 0h3v1h-3zM56 0h1v1h-1zM60 0h2v1h-2zM0 1h2v1h-2zM3 1h1v1h-1zM6 1h2v1h-2zM12 1h1v1h-1zM16 1h3v1h-3zM21 1h1v1h-1zM26 1h1v1h-1zM29 1h2v1h-2zM32 1h1v1h-1zM35 1h1v1h-1zM40 1h1v1h-1zM46 1h1v1h-1zM48 1h3v1h-3zM53 1h1v1h-1zM55 1h1v1h-1zM57 1h1v1h-1zM62 1h1v1h-1zM5 2h1v1h-1zM7 2h1v1h-1zM12 2h3v1h-3zM17 2h1v1h-1zM20 2h1v1h-1zM22 2h1v1h-1zM25 2h1v1h-1zM31 2h1v1h-1zM33 2h3v1h-3zM43 2h1v1h-1zM45 2h1v1h-1zM47 2h1v1h-1zM50 2h1v1h-1zM52 2h2v1h-2zM56 2h5v1h-5zM63 2h1v1h-1zM5 3h2v1h-2zM8 3h1v1h-1zM12 3h4v1h-4zM17 3h1v1h-1zM19 3h4v1h-4zM25 3h1v1h-1zM28 3h1v1h-1zM38 3h1v1h-1zM40 3h1v1h-1zM44 3h1v1h-1zM47 3h3v1h-3zM56 3h1v1h-1zM61 3h1v1h-1zM5 4h3v1h-3zM12 4h1v1h-1zM16 4h2v1h-2zM20 4h1v1h-1zM25 4h1v1h-1zM29 4h1v1h-1zM33 4h2v1h-2zM38 4h3v1h-3zM42 4h1v1h-1zM44 4h1v1h-1zM46 4h2v1h-2zM54 4h4v1h-4zM4 5h1v1h-1zM6 5h1v1h-1zM9 5h1v1h-1zM12 5h2v1h-2zM17 5h1v1h-1zM21 5h2v1h-2zM24 5h1v1h-1zM26 5h1v1h-1zM29 5h1v1h-1zM31 5h4v1h-4zM38 5h2v1h-2zM43 5h3v1h-3zM48 5h1v1h-1zM53 5h1v1h-1zM55 5h2v1h-2zM58 5h1v1h-1zM0 6h2v1h-2zM3 6h2v1h-2zM6 6h1v1h-1zM8 6h2v1h-2zM13 6h1v1h-1zM16 6h3v1h-3zM21 6h1v1h-1zM23 6h2v1h-2zM30 6h1v1h-1zM32 6h4v1h-4zM37 6h1v1h-1zM39 6h1v1h-1zM43 6h1v1h-1zM45 6h1v1h-1zM49 6h2v1h-2zM53 6h1v1h-1zM60 6h1v1h-1zM63 6h1v1h-1zM1 7h1v1h-1zM5 7h1v1h-1zM7 7h2v1h-2zM11 7h1v1h-1zM13 7h1v1h-1zM15 7h3v1h-3zM20 7h1v1h-1zM24 7h1v1h-1zM29 7h3v1h-3zM33 7h3v1h-3zM39 7h3v1h-3zM44 7h2v1h-2zM47 7h1v1h-1zM49 7h1v1h-1zM53 7h5v1h-5zM61 7h1v1h-1zM6 8h1v1h-1zM10 8h1v1h-1zM12 8h1v1h-1zM14 8h2v1h-2zM19 8h1v1h-1zM21 8h1v1h-1zM24 8h2v1h-2zM29 8h1v1h-1zM33 8h1v1h-1zM35 8h1v1h-1zM40 8h1v1h-1zM42 8h1v1h-1zM45 8h1v1h-1zM48 8h1v1h-1zM52 8h1v1h-1zM54 8h2v1h-2zM59 8h3v1h-3zM3 9h8v1h-8zM13 9h1v1h-1zM15 9h1v1h-1zM22 9h1v1h-1zM25 9h1v1h-1zM35 9h1v1h-1zM37 9h2v1h-2zM41 9h1v1h-1zM45 9h2v1h-2zM48 9h2v1h-2zM52 9h1v1h-1zM54 9h2v1h-2zM58 9h1v1h-1zM2 10h5v1h-5zM8 10h1v1h-1zM14 10h2v1h-2zM26 10h1v1h-1zM29 10h1v1h-1zM34 10h1v1h-1zM38 10h2v1h-2zM41 10h1v1h-1zM49 10h3v1h-3zM53 10h3v1h-3zM57 10h2v1h-2zM60 10h2v1h-2zM1 11h2v1h-2zM10 11h1v1h-1zM13 11h1v1h-1zM15 11h2v1h-2zM25 11h3v1h-3zM29 11h1v1h-1zM33 11h1v1h-1zM36 11h2v1h-2zM42 11h1v1h-1zM44 11h4v1h-4zM49 11h5v1h-5zM55 11h1v1h-1zM57 11h1v1h-1zM59 11h1v1h-1zM61 11h3v1h-3zM0 12h2v1h-2zM3 12h1v1h-1zM6 12h1v1h-1zM8 12h1v1h-1zM10 12h1v1h-1zM12 12h1v1h-1zM14 12h1v1h-1zM18 12h1v1h-1zM22 12h2v1h-2zM25 12h2v1h-2zM33 12h1v1h-1zM36 12h2v1h-2zM39 12h2v1h-2zM42 12h1v1h-1zM45 12h1v1h-1zM48 12h1v1h-1zM51 12h1v1h-1zM53 12h4v1h-4zM58 12h3v1h-3zM62 12h1v1h-1zM0 13h9v1h-9zM12 13h1v1h-1zM16 13h1v1h-1zM21 13h1v1h-1zM25 13h1v1h-1zM30 13h3v1h-3zM34 13h1v1h-1zM38 13h1v1h-1zM41 13h1v1h-1zM43 13h1v1h-1zM45 13h1v1h-1zM48 13h1v1h-1zM52 13h2v1h-2zM55 13h1v1h-1zM58 13h1v1h-1zM60 13h3v1h-3zM0 14h1v1h-1zM2 14h2v1h-2zM8 14h1v1h-1zM15 14h1v1h-1zM17 14h3v1h-3zM21 14h1v1h-1zM30 14h3v1h-3zM34 14h2v1h-2zM37 14h1v1h-1zM39 14h1v1h-1zM41 14h1v1h-1zM43 14h2v1h-2zM47 14h1v1h-1zM49 14h4v1h-4zM55 14h1v1h-1zM59 14h4v1h-4zM1 15h1v1h-1zM4 15h1v1h-1zM13 15h1v1h-1zM15 15h2v1h-2zM19 15h1v1h-1zM21 15h1v1h-1zM23 15h1v1h-1zM27 15h3v1h-3zM31 15h3v1h-3zM35 15h1v1h-1zM37 15h3v1h-3zM42 15h1v1h-1zM44 15h5v1h-5zM50 15h4v1h-4zM55 15h1v1h-1zM58 15h1v1h-1zM60 15h1v1h-1zM62 15h2v1h-2zM0 16h1v1h-1zM8 16h3v1h-3zM12 16h1v1h-1zM15 16h1v1h-1zM17 16h3v1h-3zM21 16h1v1h-1zM27 16h1v1h-1zM31 16h2v1h-2zM36 16h1v1h-1zM39 16h2v1h-2zM42 16h1v1h-1zM45 16h1v1h-1zM50 16h1v1h-1zM52 16h3v1h-3zM57 16h1v1h-1zM59 16h1v1h-1zM61 16h1v1h-1zM63 16h1v1h-1zM0 17h2v1h-2zM6 17h3v1h-3zM15 17h1v1h-1zM19 17h2v1h-2zM22 17h2v1h-2zM32 17h1v1h-1zM37 17h1v1h-1zM45 17h1v1h-1zM48 17h1v1h-1zM51 17h3v1h-3zM57 17h2v1h-2zM63 17h1v1h-1zM1 18h1v1h-1zM4 18h1v1h-1zM7 18h1v1h-1zM9 18h1v1h-1zM13 18h1v1h-1zM16 18h1v1h-1zM18 18h1v1h-1zM21 18h1v1h-1zM23 18h2v1h-2zM27 18h1v1h-1zM31 18h2v1h-2zM36 18h1v1h-1zM46 18h3v1h-3zM52 18h1v1h-1zM56 18h1v1h-1zM59 18h1v1h-1zM61 18h1v1h-1zM63 18h1v1h-1zM1 19h1v1h-1zM3 19h1v1h-1zM7 19h2v1h-2zM10 19h1v1h-1zM12 19h1v1h-1zM17 19h1v1h-1zM19 19h1v1h-1zM21 19h1v1h-1zM23 19h1v1h-1zM25 19h1v1h-1zM27 19h1v1h-1zM29 19h2v1h-2zM33 19h3v1h-3zM42 19h1v1h-1zM47 19h2v1h-2zM51 19h7v1h-7zM59 19h1v1h-1zM62 19h2v1h-2zM0 20h1v1h-1zM2 20h2v1h-2zM6 20h1v1h-1zM11 20h5v1h-5zM18 20h3v1h-3zM22 20h1v1h-1zM24 20h2v1h-2zM29 20h1v1h-1zM32 20h3v1h-3zM37 20h1v1h-1zM39 20h1v1h-1zM41 20h1v1h-1zM46 20h1v1h-1zM48 20h2v1h-2zM53 20h1v1h-1zM55 20h5v1h-5zM62 20h1v1h-1zM2 21h1v1h-1zM4 21h2v1h-2zM7 21h1v1h-1zM9 21h1v1h-1zM11 21h2v1h-2zM15 21h1v1h-1zM17 21h1v1h-1zM22 21h3v1h-3zM31 21h2v1h-2zM42 21h3v1h-3zM46 21h1v1h-1zM48 21h2v1h-2zM53 21h1v1h-1zM60 21h3v1h-3zM2 22h1v1h-1zM4 22h1v1h-1zM6 22h5v1h-5zM17 22h2v1h-2zM22 22h2v1h-2zM27 22h4v1h-4zM32 22h2v1h-2zM35 22h1v1h-1zM39 22h2v1h-2zM42 22h2v1h-2zM45 22h2v1h-2zM50 22h1v1h-1zM52 22h1v1h-1zM54 22h3v1h-3zM60 22h4v1h-4zM0 23h1v1h-1zM2 23h1v1h-1zM6 23h1v1h-1zM10 23h1v1h-1zM14 23h2v1h-2zM17 23h1v1h-1zM20 23h3v1h-3zM25 23h4v1h-4zM30 23h1v1h-1zM33 23h2v1h-2zM38 23h1v1h-1zM40 23h1v1h-1zM43 23h3v1h-3zM49 23h1v1h-1zM51 23h2v1h-2zM55 23h5v1h-5zM61 23h1v1h-1zM3 24h5v1h-5zM11 24h1v1h-1zM14 24h1v1h-1zM16 24h1v1h-1zM19 24h2v1h-2zM23 24h1v1h-1zM27 24h2v1h-2zM32 24h1v1h-1zM36 24h1v1h-1zM38 24h2v1h-2zM42 24h3v1h-3zM47 24h3v1h-3zM52 24h3v1h-3zM56 24h1v1h-1zM60 24h2v1h-2zM63 24h1v1h-1zM2 25h2v1h-2zM5 25h2v1h-2zM11 25h1v1h-1zM13 25h1v1h-1zM15 25h2v1h-2zM18 25h1v1h-1zM20 25h1v1h-1zM22 25h1v1h-1zM27 25h3v1h-3zM32 25h2v1h-2zM37 25h3v1h-3zM42 25h1v1h-1zM48 25h2v1h-2zM51 25h1v1h-1zM59 25h2v1h-2zM62 25h2v1h-2zM1 26h1v1h-1zM3 26h1v1h-1zM8 26h1v1h-1zM11 26h2v1h-2zM15 26h5v1h-5zM28 26h1v1h-1zM33 26h4v1h-4zM38 26h1v1h-1zM42 26h2v1h-2zM45 26h2v1h-2zM49 26h1v1h-1zM51 26h1v1h-1zM58 26h3v1h-3zM1 27h1v1h-1zM10 27h1v1h-1zM12 27h1v1h-1zM15 27h2v1h-2zM19 27h2v1h-2zM23 27h2v1h-2zM26 27h3v1h-3zM32 27h7v1h-7zM40 27h3v1h-3zM50 27h2v1h-2zM55 27h2v1h-2zM59 27h1v1h-1zM62 27h1v1h-1zM0 28h2v1h-2zM4 28h3v1h-3zM8 28h1v1h-1zM10 28h1v1h-1zM15 28h1v1h-1zM20 28h2v1h-2zM23 28h3v1h-3zM30 28h1v1h-1zM34 28h3v1h-3zM39 28h1v1h-1zM41 28h3v1h-3zM45 28h1v1h-1zM48 28h1v1h-1zM50 28h1v1h-1zM56 28h4v1h-4zM62 28h1v1h-1zM1 29h1v1h-1zM5 29h1v1h-1zM7 29h1v1h-1zM9 29h2v1h-2zM12 29h2v1h-2zM17 29h1v1h-1zM22 29h1v1h-1zM25 29h2v1h-2zM30 29h2v1h-2zM33 29h6v1h-6zM40 29h1v1h-1zM42 29h2v1h-2zM46 29h2v1h-2zM50 29h1v1h-1zM53 29h1v1h-1zM58 29h3v1h-3zM0 30h4v1h-4zM9 30h4v1h-4zM18 30h2v1h-2zM25 30h2v1h-2zM29 30h1v1h-1zM32 30h2v1h-2zM37 30h1v1h-1zM41 30h4v1h-4zM47 30h2v1h-2zM52 30h3v1h-3zM58 30h3v1h-3zM0 31h3v1h-3zM6 31h1v1h-1zM8 31h1v1h-1zM15 31h2v1h-2zM19 31h2v1h-2zM25 31h1v1h-1zM29 31h1v1h-1zM34 31h1v1h-1zM37 31h3v1h-3zM42 31h3v1h-3zM51 31h1v1h-1zM55 31h3v1h-3zM0 32h2v1h-2zM4 32h2v1h-2zM12 32h1v1h-1zM17 32h1v1h-1zM20 32h1v1h-1zM23 32h2v1h-2zM29 32h1v1h-1zM33 32h2v1h-2zM36 32h1v1h-1zM38 32h1v1h-1zM40 32h4v1h-4zM46 32h1v1h-1zM49 32h1v1h-1zM55 32h4v1h-4zM2 33h2v1h-2zM8 33h1v1h-1zM10 33h1v1h-1zM18 33h2v1h-2zM23 33h3v1h-3zM33 33h1v1h-1zM36 33h2v1h-2zM39 33h4v1h-4zM45 33h3v1h-3zM51 33h1v1h-1zM57 33h1v1h-1zM62 33h2v1h-2zM1 34h1v1h-1zM3 34h3v1h-3zM8 34h2v1h-2zM14 34h2v1h-2zM18 34h1v1h-1zM30 34h1v1h-1zM32 34h1v1h-1zM35 34h2v1h-2zM38 34h1v1h-1zM41 34h3v1h-3zM45 34h7v1h-7zM55 34h2v1h-2zM58 34h1v1h-1zM1 35h3v1h-3zM5 35h1v1h-1zM7 35h1v1h-1zM16 35h1v1h-1zM20 35h1v1h-1zM22 35h1v1h-1zM29 35h3v1h-3zM39 35h1v1h-1zM41 35h4v1h-4zM48 35h2v1h-2zM56 35h5v1h-5zM63 35h1v1h-1zM0 36h2v1h-2zM5 36h1v1h-1zM8 36h1v1h-1zM10 36h2v1h-2zM17 36h2v1h-2zM23 36h1v1h-1zM29 36h1v1h-1zM32 36h1v1h-1zM35 36h2v1h-2zM38 36h1v1h-1zM41 36h1v1h-1zM43 36h1v1h-1zM50 36h1v1h-1zM52 36h1v1h-1zM60 36h1v1h-1zM62 36h1v1h-1zM1 37h4v1h-4zM6 37h3v1h-3zM10 37h1v1h-1zM22 37h1v1h-1zM25 37h1v1h-1zM28 37h1v1h-1zM30 37h1v1h-1zM33 37h3v1h-3zM37 37h1v1h-1zM41 37h2v1h-2zM44 37h1v1h-1zM49 37h1v1h-1zM53 37h1v1h-1zM56 37h1v1h-1zM60 37h3v1h-3zM3 38h2v1h-2zM6 38h2v1h-2zM9 38h1v1h-1zM11 38h2v1h-2zM18 38h2v1h-2zM22 38h1v1h-1zM24 38h3v1h-3zM29 38h1v1h-1zM31 38h3v1h-3zM36 38h1v1h-1zM38 38h1v1h-1zM44 38h1v1h-1zM46 38h1v1h-1zM49 38h2v1h-2zM52 38h1v1h-1zM55 38h2v1h-2zM3 39h1v1h-1zM7 39h1v1h-1zM13 39h6v1h-6zM23 39h1v1h-1zM25 39h1v1h-1zM27 39h1v1h-1zM30 39h1v1h-1zM33 39h5v1h-5zM43 39h4v1h-4zM48 39h3v1h-3zM52 39h1v1h-1zM54 39h1v1h-1zM59 39h1v1h-1zM62 39h1v1h-1zM2 40h1v1h-1zM4 40h3v1h-3zM11 40h1v1h-1zM14 40h6v1h-6zM23 40h4v1h-4zM28 40h1v1h-1zM30 40h1v1h-1zM33 40h2v1h-2zM41 40h3v1h-3zM47 40h1v1h-1zM49 40h1v1h-1zM53 40h2v1h-2zM56 40h1v1h-1zM62 40h1v1h-1zM0 41h1v1h-1zM7 41h1v1h-1zM10 41h2v1h-2zM13 41h3v1h-3zM18 41h4v1h-4zM23 41h1v1h-1zM29 41h2v1h-2zM35 41h1v1h-1zM41 41h1v1h-1zM43 41h1v1h-1zM47 41h2v1h-2zM51 41h1v1h-1zM57 41h1v1h-1zM63 41h1v1h-1zM0 42h1v1h-1zM3 42h1v1h-1zM8 42h7v1h-7zM22 42h4v1h-4zM28 42h1v1h-1zM30 42h3v1h-3zM39 42h1v1h-1zM47 42h2v1h-2zM50 42h5v1h-5zM56 42h3v1h-3zM60 42h4v1h-4zM2 43h1v1h-1zM5 43h1v1h-1zM8 43h4v1h-4zM13 43h1v1h-1zM18 43h1v1h-1zM23 43h1v1h-1zM27 43h1v1h-1zM30 43h1v1h-1zM34 43h2v1h-2zM38 43h3v1h-3zM43 43h1v1h-1zM47 43h3v1h-3zM51 43h2v1h-2zM56 43h2v1h-2zM59 43h3v1h-3zM63 43h1v1h-1zM1 44h2v1h-2zM4 44h2v1h-2zM8 44h1v1h-1zM10 44h3v1h-3zM18 44h2v1h-2zM22 44h2v1h-2zM27 44h2v1h-2zM30 44h4v1h-4zM35 44h1v1h-1zM37 44h1v1h-1zM40 44h1v1h-1zM45 44h1v1h-1zM49 44h4v1h-4zM58 44h1v1h-1zM60 44h3v1h-3zM1 45h2v1h-2zM7 45h1v1h-1zM9 45h2v1h-2zM13 45h1v1h-1zM15 45h1v1h-1zM25 45h2v1h-2zM28 45h1v1h-1zM31 45h2v1h-2zM34 45h1v1h-1zM38 45h1v1h-1zM42 45h1v1h-1zM51 45h5v1h-5zM57 45h3v1h-3zM63 45h1v1h-1zM0 46h1v1h-1zM2 46h1v1h-1zM6 46h1v1h-1zM17 46h2v1h-2zM20 46h1v1h-1zM24 46h1v1h-1zM26 46h5v1h-5zM32 46h7v1h-7zM44 46h2v1h-2zM47 46h3v1h-3zM55 46h2v1h-2zM58 46h1v1h-1zM61 46h3v1h-3zM2 47h2v1h-2zM7 47h2v1h-2zM14 47h1v1h-1zM20 47h1v1h-1zM25 47h5v1h-5zM34 47h4v1h-4zM39 47h1v1h-1zM41 47h1v1h-1zM43 47h1v1h-1zM45 47h2v1h-2zM48 47h1v1h-1zM50 47h2v1h-2zM55 47h1v1h-1zM57 47h1v1h-1zM59 47h1v1h-1zM62 47h2v1h-2zM2 48h1v1h-1zM10 48h1v1h-1zM16 48h2v1h-2zM21 48h1v1h-1zM26 48h1v1h-1zM30 48h1v1h-1zM32 48h3v1h-3zM36 48h5v1h-5zM42 48h1v1h-1zM44 48h2v1h-2zM47 48h1v1h-1zM49 48h2v1h-2zM52 48h1v1h-1zM54 48h1v1h-1zM56 48h1v1h-1zM58 48h1v1h-1zM1 49h2v1h-2zM5 49h1v1h-1zM8 49h1v1h-1zM10 49h2v1h-2zM14 49h6v1h-6zM22 49h2v1h-2zM25 49h2v1h-2zM29 49h3v1h-3zM33 49h1v1h-1zM37 49h2v1h-2zM45 49h1v1h-1zM48 49h6v1h-6zM61 49h1v1h-1zM0 50h2v1h-2zM5 50h1v1h-1zM14 50h1v1h-1zM16 50h1v1h-1zM18 50h1v1h-1zM20 50h2v1h-2zM23 50h1v1h-1zM34 50h1v1h-1zM36 50h3v1h-3zM44 50h3v1h-3zM51 50h1v1h-1zM56 50h1v1h-1zM58 50h1v1h-1zM1 51h1v1h-1zM4 51h1v1h-1zM7 51h2v1h-2zM17 51h2v1h-2zM25 51h1v1h-1zM27 51h1v1h-1zM38 51h1v1h-1zM43 51h2v1h-2zM48 51h1v1h-1zM51 51h2v1h-2zM54 51h1v1h-1zM58 51h2v1h-2zM61 51h1v1h-1zM6 52h3v1h-3zM16 52h1v1h-1zM25 52h3v1h-3zM29 52h2v1h-2zM32 52h1v1h-1zM35 52h3v1h-3zM39 52h1v1h-1zM42 52h3v1h-3zM47 52h3v1h-3zM54 52h1v1h-1zM59 52h5v1h-5zM2 53h1v1h-1zM9 53h2v1h-2zM16 53h1v1h-1zM19 53h2v1h-2zM24 53h1v1h-1zM26 53h3v1h-3zM35 53h3v1h-3zM39 53h2v1h-2zM42 53h4v1h-4zM49 53h2v1h-2zM53 53h2v1h-2zM57 53h1v1h-1zM59 53h2v1h-2zM6 54h3v1h-3zM11 54h4v1h-4zM21 54h1v1h-1zM24 54h2v1h-2zM30 54h1v1h-1zM32 54h3v1h-3zM40 54h1v1h-1zM44 54h2v1h-2zM49 54h5v1h-5zM55 54h5v1h-5zM62 54h1v1h-1zM2 55h1v1h-1zM8 55h1v1h-1zM14 55h1v1h-1zM16 55h1v1h-1zM20 55h3v1h-3zM24 55h4v1h-4zM30 55h3v1h-3zM36 55h2v1h-2zM43 55h1v1h-1zM46 55h2v1h-2zM49 55h3v1h-3zM54 55h2v1h-2zM0 56h1v1h-1zM5 56h4v1h-4zM10 56h3v1h-3zM17 56h3v1h-3zM21 56h1v1h-1zM25 56h1v1h-1zM30 56h2v1h-2zM36 56h1v1h-1zM44 56h2v1h-2zM47 56h1v1h-1zM49 56h4v1h-4zM55 56h2v1h-2zM58 56h1v1h-1zM61 56h3v1h-3zM6 57h3v1h-3zM10 57h1v1h-1zM12 57h1v1h-1zM16 57h2v1h-2zM19 57h1v1h-1zM21 57h1v1h-1zM25 57h3v1h-3zM32 57h1v1h-1zM40 57h1v1h-1zM42 57h3v1h-3zM46 57h3v1h-3zM51 57h2v1h-2zM55 57h1v1h-1zM57 57h1v1h-1zM60 57h2v1h-2zM63 57h1v1h-1zM1 58h4v1h-4zM10 58h1v1h-1zM12 58h2v1h-2zM15 58h2v1h-2zM18 58h1v1h-1zM23 58h1v1h-1zM26 58h1v1h-1zM35 58h2v1h-2zM40 58h1v1h-1zM45 58h3v1h-3zM54 58h1v1h-1zM57 58h5v1h-5zM63 58h1v1h-1zM2 59h3v1h-3zM8 59h1v1h-1zM13 59h4v1h-4zM23 59h1v1h-1zM25 59h1v1h-1zM27 59h1v1h-1zM30 59h1v1h-1zM33 59h1v1h-1zM35 59h1v1h-1zM37 59h1v1h-1zM40 59h3v1h-3zM46 59h1v1h-1zM48 59h1v1h-1zM50 59h1v1h-1zM52 59h3v1h-3zM56 59h2v1h-2zM59 59h1v1h-1zM61 59h3v1h-3zM3 60h3v1h-3zM8 60h3v1h-3zM12 60h2v1h-2zM16 60h1v1h-1zM24 60h1v1h-1zM27 60h1v1h-1zM29 60h1v1h-1zM31 60h7v1h-7zM47 60h1v1h-1zM49 60h1v1h-1zM52 60h1v1h-1zM57 60h2v1h-2zM60 60h1v1h-1zM62 60h1v1h-1zM1 61h1v1h-1zM4 61h1v1h-1zM9 61h1v1h-1zM12 61h1v1h-1zM14 61h3v1h-3zM23 61h4v1h-4zM33 61h2v1h-2zM45 61h1v1h-1zM49 61h4v1h-4zM57 61h1v1h-1zM61 61h2v1h-2zM0 62h1v1h-1zM5 62h5v1h-5zM12 62h1v1h-1zM14 62h2v1h-2zM17 62h1v1h-1zM25 62h3v1h-3zM29 62h2v1h-2zM37 62h2v1h-2zM41 62h1v1h-1zM44 62h1v1h-1zM46 62h2v1h-2zM50 62h3v1h-3zM56 62h1v1h-1zM58 62h1v1h-1zM60 62h4v1h-4zM0 63h3v1h-3zM4 63h3v1h-3zM9 63h1v1h-1zM14 63h1v1h-1zM17 63h1v1h-1zM26 63h5v1h-5zM34 63h2v1h-2zM42 63h2v1h-2zM47 63h1v1h-1zM50 63h3v1h-3zM54 63h2v1h-2zM57 63h3v1h-3z"/></pattern><pattern id="meshy" width="64" height="64" patternUnits="userSpaceOnUse"><rect width="64" height="64" fill="#ff0000"/><path fill="#ffe600" d="M0 0h1v1h-1zM2 0h1v1h-1zM4 0h1v1h-1zM6 0h5v1h-5zM13 0h1v1h-1zM17 0h1v1h-1zM19 0h5v1h-5zM25 0h3v1h-3zM30 0h1v1h-1zM33 0h1v1h-1zM39 0h1v1h-1zM41 0h2v1h-2zM44 0h2v1h-2zM48 0h2v1h-2zM52 0h4v1h-4zM58 0h1v1h-1zM62 0h1v1h-1zM0 1h2v1h-2zM3 1h7v1h-7zM12 1h7v1h-7zM20 1h1v1h-1zM23 1h2v1h-2zM30 1h1v1h-1zM32 1h1v1h-1zM35 1h2v1h-2zM38 1h1v1h-1zM40 1h1v1h-1zM42 1h2v1h-2zM45 1h1v1h-1zM48 1h1v1h-1zM50 1h2v1h-2zM53 1h1v1h-1zM55 1h1v1h-1zM58 1h4v1h-4zM63 1h1v1h-1zM0 2h6v1h-6zM7 2h5v1h-5zM13 2h1v1h-1zM17 2h1v1h-1zM19 2h1v1h-1zM22 2h1v1h-1zM26 2h1v1h-1zM29 2h1v1h-1zM34 2h3v1h-3zM40 2h1v1h-1zM42 2h1v1h-1zM44 2h1v1h-1zM46 2h1v1h-1zM52 2h1v1h-1zM56 2h2v1h-2zM59 2h4v1h-4zM2 3h1v1h-1zM4 3h1v1h-1zM6 3h2v1h-2zM11 3h2v1h-2zM17 3h2v1h-2zM20 3h3v1h-3zM25 3h2v1h-2zM28 3h1v1h-1zM33 3h4v1h-4zM38 3h1v1h-1zM40 3h2v1h-2zM43 3h2v1h-2zM46 3h1v1h-1zM52 3h2v1h-2zM56 3h1v1h-1zM58 3h5v1h-5zM5 4h3v1h-3zM10 4h4v1h-4zM17 4h2v1h-2zM21 4h1v1h-1zM24 4h1v1h-1zM26 4h2v1h-2zM31 4h1v1h-1zM33 4h2v1h-2zM40 4h3v1h-3zM44 4h1v1h-1zM46 4h1v1h-1zM52 4h2v1h-2zM55 4h2v1h-2zM58 4h2v1h-2zM62 4h1v1h-1zM1 5h1v1h-1zM6 5h2v1h-2zM10 5h1v1h-1zM13 5h1v1h-1zM16 5h2v1h-2zM20 5h1v1h-1zM22 5h1v1h-1zM24 5h1v1h-1zM26 5h1v1h-1zM29 5h1v1h-1zM31 5h2v1h-2zM35 5h1v1h-1zM37 5h1v1h-1zM41 5h3v1h-3zM45 5h1v1h-1zM48 5h2v1h-2zM52 5h6v1h-6zM59 5h2v1h-2zM62 5h2v1h-2zM0 6h3v1h-3zM6 6h3v1h-3zM12 6h2v1h-2zM15 6h4v1h-4zM20 6h2v1h-2zM23 6h2v1h-2zM29 6h3v1h-3zM33 6h8v1h-8zM42 6h3v1h-3zM47 6h1v1h-1zM49 6h2v1h-2zM52 6h1v1h-1zM54 6h1v1h-1zM57 6h2v1h-2zM60 6h2v1h-2zM63 6h1v1h-1zM0 7h1v1h-1zM4 7h2v1h-2zM8 7h2v1h-2zM12 7h1v1h-1zM15 7h1v1h-1zM19 7h2v1h-2zM22 7h4v1h-4zM30 7h2v1h-2zM33 7h2v1h-2zM36 7h1v1h-1zM38 7h1v1h-1zM43 7h5v1h-5zM49 7h3v1h-3zM53 7h1v1h-1zM55 7h1v1h-1zM58 7h3v1h-3zM63 7h1v1h-1zM5 8h1v1h-1zM7 8h1v1h-1zM10 8h1v1h-1zM16 8h1v1h-1zM19 8h1v1h-1zM22 8h1v1h-1zM27 8h2v1h-2zM30 8h1v1h-1zM35 8h1v1h-1zM37 8h6v1h-6zM44 8h1v1h-1zM50 8h1v1h-1zM54 8h2v1h-2zM58 8h3v1h-3zM0 9h6v1h-6zM8 9h1v1h-1zM11 9h1v1h-1zM16 9h1v1h-1zM18 9h2v1h-2zM22 9h2v1h-2zM26 9h2v1h-2zM35 9h3v1h-3zM39 9h1v1h-1zM41 9h1v1h-1zM43 9h1v1h-1zM45 9h2v1h-2zM50 9h1v1h-1zM53 9h2v1h-2zM63 9h1v1h-1zM0 10h5v1h-5zM9 10h2v1h-2zM13 10h3v1h-3zM17 10h2v1h-2zM22 10h3v1h-3zM29 10h1v1h-1zM31 10h1v1h-1zM34 10h1v1h-1zM36 10h3v1h-3zM44 10h1v1h-1zM48 10h3v1h-3zM53 10h2v1h-2zM58 10h1v1h-1zM0 11h2v1h-2zM3 11h3v1h-3zM9 11h1v1h-1zM14 11h4v1h-4zM23 11h1v1h-1zM25 11h1v1h-1zM27 11h2v1h-2zM31 11h3v1h-3zM36 11h1v1h-1zM39 11h3v1h-3zM44 11h1v1h-1zM48 11h1v1h-1zM50 11h2v1h-2zM57 11h2v1h-2zM60 11h1v1h-1zM63 11h1v1h-1zM0 12h1v1h-1zM4 12h3v1h-3zM8 12h2v1h-2zM11 12h3v1h-3zM16 12h2v1h-2zM19 12h1v1h-1zM21 12h2v1h-2zM26 12h1v1h-1zM33 12h1v1h-1zM35 12h3v1h-3zM40 12h2v1h-2zM48 12h1v1h-1zM51 12h2v1h-2zM54 12h1v1h-1zM56 12h1v1h-1zM59 12h1v1h-1zM63 12h1v1h-1zM0 13h1v1h-1zM2 13h3v1h-3zM7 13h1v1h-1zM9 13h2v1h-2zM12 13h1v1h-1zM14 13h4v1h-4zM19 13h2v1h-2zM22 13h1v1h-1zM24 13h7v1h-7zM34 13h1v1h-1zM36 13h1v1h-1zM41 13h4v1h-4zM47 13h1v1h-1zM49 13h1v1h-1zM57 13h5v1h-5zM63 13h1v1h-1zM0 14h1v1h-1zM2 14h1v1h-1zM8 14h3v1h-3zM12 14h1v1h-1zM14 14h2v1h-2zM18 14h4v1h-4zM23 14h1v1h-1zM25 14h6v1h-6zM32 14h1v1h-1zM36 14h1v1h-1zM38 14h1v1h-1zM44 14h1v1h-1zM47 14h3v1h-3zM53 14h1v1h-1zM60 14h1v1h-1zM63 14h1v1h-1zM3 15h1v1h-1zM5 15h1v1h-1zM9 15h2v1h-2zM12 15h1v1h-1zM16 15h4v1h-4zM23 15h10v1h-10zM35 15h2v1h-2zM38 15h1v1h-1zM43 15h2v1h-2zM49 15h1v1h-1zM53 15h1v1h-1zM57 15h1v1h-1zM60 15h1v1h-1zM62 15h1v1h-1zM1 16h1v1h-1zM5 16h2v1h-2zM9 16h1v1h-1zM15 16h1v1h-1zM20 16h2v1h-2zM24 16h1v1h-1zM26 16h3v1h-3zM31 16h1v1h-1zM33 16h1v1h-1zM38 16h1v1h-1zM40 16h2v1h-2zM44 16h2v1h-2zM48 16h1v1h-1zM51 16h3v1h-3zM58 16h4v1h-4zM0 17h3v1h-3zM4 17h1v1h-1zM7 17h2v1h-2zM10 17h1v1h-1zM12 17h1v1h-1zM14 17h1v1h-1zM16 17h1v1h-1zM19 17h1v1h-1zM23 17h3v1h-3zM27 17h1v1h-1zM35 17h1v1h-1zM40 17h2v1h-2zM47 17h2v1h-2zM50 17h1v1h-1zM52 17h4v1h-4zM57 17h2v1h-2zM60 17h1v1h-1zM62 17h2v1h-2zM0 18h1v1h-1zM2 18h1v1h-1zM5 18h1v1h-1zM7 18h3v1h-3zM12 18h5v1h-5zM18 18h2v1h-2zM21 18h2v1h-2zM24 18h2v1h-2zM27 18h1v1h-1zM29 18h3v1h-3zM36 18h6v1h-6zM44 18h2v1h-2zM50 18h2v1h-2zM53 18h4v1h-4zM60 18h3v1h-3zM1 19h1v1h-1zM4 19h1v1h-1zM6 19h1v1h-1zM8 19h5v1h-5zM15 19h1v1h-1zM19 19h2v1h-2zM28 19h3v1h-3zM39 19h2v1h-2zM45 19h1v1h-1zM48 19h3v1h-3zM52 19h1v1h-1zM54 19h1v1h-1zM57 19h1v1h-1zM59 19h5v1h-5zM0 20h2v1h-2zM3 20h3v1h-3zM9 20h4v1h-4zM15 20h4v1h-4zM20 20h1v1h-1zM22 20h1v1h-1zM24 20h1v1h-1zM27 20h1v1h-1zM34 20h2v1h-2zM38 20h1v1h-1zM45 20h1v1h-1zM50 20h2v1h-2zM53 20h2v1h-2zM56 20h2v1h-2zM59 20h1v1h-1zM62 20h1v1h-1zM0 21h2v1h-2zM3 21h2v1h-2zM6 21h1v1h-1zM9 21h1v1h-1zM14 21h1v1h-1zM16 21h4v1h-4zM22 21h6v1h-6zM30 21h1v1h-1zM32 21h1v1h-1zM34 21h1v1h-1zM37 21h1v1h-1zM42 21h1v1h-1zM47 21h1v1h-1zM50 21h2v1h-2zM53 21h2v1h-2zM57 21h3v1h-3zM61 21h2v1h-2zM3 22h3v1h-3zM7 22h3v1h-3zM11 22h1v1h-1zM13 22h3v1h-3zM17 22h3v1h-3zM23 22h2v1h-2zM34 22h1v1h-1zM37 22h1v1h-1zM40 22h2v1h-2zM48 22h5v1h-5zM54 22h1v1h-1zM58 22h2v1h-2zM61 22h2v1h-2zM4 23h1v1h-1zM6 23h3v1h-3zM10 23h2v1h-2zM16 23h1v1h-1zM18 23h1v1h-1zM20 23h1v1h-1zM22 23h2v1h-2zM26 23h3v1h-3zM32 23h2v1h-2zM36 23h2v1h-2zM45 23h3v1h-3zM49 23h5v1h-5zM57 23h1v1h-1zM59 23h3v1h-3zM4 24h4v1h-4zM9 24h4v1h-4zM14 24h2v1h-2zM17 24h3v1h-3zM21 24h4v1h-4zM31 24h1v1h-1zM33 24h1v1h-1zM36 24h3v1h-3zM40 24h2v1h-2zM44 24h1v1h-1zM46 24h1v1h-1zM51 24h8v1h-8zM63 24h1v1h-1zM1 25h1v1h-1zM7 25h5v1h-5zM13 25h2v1h-2zM16 25h1v1h-1zM18 25h2v1h-2zM23 25h2v1h-2zM26 25h3v1h-3zM33 25h1v1h-1zM37 25h1v1h-1zM39 25h3v1h-3zM47 25h2v1h-2zM50 25h2v1h-2zM54 25h5v1h-5zM60 25h1v1h-1zM62 25h2v1h-2zM3 26h3v1h-3zM7 26h2v1h-2zM10 26h1v1h-1zM13 26h1v1h-1zM16 26h2v1h-2zM21 26h1v1h-1zM24 26h1v1h-1zM27 26h3v1h-3zM31 26h2v1h-2zM35 26h1v1h-1zM38 26h1v1h-1zM40 26h2v1h-2zM43 26h1v1h-1zM45 26h2v1h-2zM49 26h1v1h-1zM51 26h1v1h-1zM54 26h2v1h-2zM60 26h1v1h-1zM63 26h1v1h-1zM2 27h1v1h-1zM5 27h4v1h-4zM11 27h2v1h-2zM16 27h2v1h-2zM25 27h1v1h-1zM28 27h3v1h-3zM32 27h1v1h-1zM36 27h1v1h-1zM42 27h3v1h-3zM46 27h1v1h-1zM48 27h3v1h-3zM56 27h3v1h-3zM62 27h2v1h-2zM0 28h1v1h-1zM10 28h1v1h-1zM12 28h6v1h-6zM19 28h1v1h-1zM23 28h5v1h-5zM31 28h1v1h-1zM33 28h2v1h-2zM36 28h1v1h-1zM39 28h1v1h-1zM43 28h1v1h-1zM48 28h2v1h-2zM54 28h1v1h-1zM59 28h4v1h-4zM1 29h3v1h-3zM9 29h6v1h-6zM17 29h5v1h-5zM25 29h2v1h-2zM28 29h5v1h-5zM34 29h3v1h-3zM40 29h1v1h-1zM43 29h4v1h-4zM49 29h5v1h-5zM2 30h2v1h-2zM6 30h1v1h-1zM12 30h2v1h-2zM15 30h1v1h-1zM22 30h1v1h-1zM27 30h1v1h-1zM31 30h2v1h-2zM35 30h2v1h-2zM39 30h2v1h-2zM42 30h8v1h-8zM51 30h5v1h-5zM57 30h2v1h-2zM60 30h1v1h-1zM63 30h1v1h-1zM0 31h1v1h-1zM3 31h3v1h-3zM7 31h1v1h-1zM10 31h1v1h-1zM14 31h4v1h-4zM24 31h2v1h-2zM29 31h1v1h-1zM35 31h1v1h-1zM37 31h1v1h-1zM39 31h1v1h-1zM42 31h3v1h-3zM46 31h5v1h-5zM54 31h2v1h-2zM61 31h1v1h-1zM63 31h1v1h-1zM3 32h2v1h-2zM7 32h4v1h-4zM20 32h2v1h-2zM23 32h5v1h-5zM30 32h1v1h-1zM33 32h2v1h-2zM36 32h2v1h-2zM41 32h2v1h-2zM45 32h3v1h-3zM49 32h4v1h-4zM54 32h1v1h-1zM56 32h1v1h-1zM61 32h1v1h-1zM63 32h1v1h-1zM4 33h1v1h-1zM8 33h1v1h-1zM11 33h1v1h-1zM13 33h3v1h-3zM18 33h4v1h-4zM23 33h1v1h-1zM26 33h2v1h-2zM29 33h1v1h-1zM32 33h2v1h-2zM35 33h2v1h-2zM38 33h1v1h-1zM44 33h1v1h-1zM46 33h2v1h-2zM49 33h1v1h-1zM52 33h1v1h-1zM56 33h2v1h-2zM60 33h1v1h-1zM62 33h2v1h-2zM1 34h1v1h-1zM6 34h1v1h-1zM8 34h4v1h-4zM13 34h3v1h-3zM17 34h2v1h-2zM20 34h3v1h-3zM24 34h1v1h-1zM28 34h2v1h-2zM31 34h3v1h-3zM35 34h1v1h-1zM37 34h4v1h-4zM44 34h5v1h-5zM50 34h2v1h-2zM54 34h2v1h-2zM58 34h3v1h-3zM62 34h1v1h-1zM1 35h1v1h-1zM4 35h3v1h-3zM9 35h2v1h-2zM14 35h3v1h-3zM18 35h4v1h-4zM28 35h3v1h-3zM35 35h2v1h-2zM38 35h2v1h-2zM41 35h1v1h-1zM44 35h2v1h-2zM47 35h1v1h-1zM51 35h1v1h-1zM53 35h1v1h-1zM56 35h1v1h-1zM58 35h4v1h-4zM63 35h1v1h-1zM0 36h2v1h-2zM3 36h1v1h-1zM8 36h1v1h-1zM10 36h2v1h-2zM13 36h9v1h-9zM30 36h3v1h-3zM34 36h3v1h-3zM38 36h1v1h-1zM40 36h2v1h-2zM43 36h3v1h-3zM48 36h1v1h-1zM53 36h1v1h-1zM58 36h1v1h-1zM60 36h3v1h-3zM0 37h5v1h-5zM7 37h1v1h-1zM10 37h2v1h-2zM15 37h1v1h-1zM17 37h4v1h-4zM24 37h1v1h-1zM26 37h1v1h-1zM28 37h6v1h-6zM36 37h1v1h-1zM40 37h1v1h-1zM48 37h2v1h-2zM52 37h8v1h-8zM62 37h1v1h-1zM2 38h1v1h-1zM4 38h2v1h-2zM9 38h1v1h-1zM11 38h2v1h-2zM16 38h3v1h-3zM20 38h1v1h-1zM22 38h6v1h-6zM29 38h2v1h-2zM34 38h6v1h-6zM41 38h1v1h-1zM43 38h2v1h-2zM47 38h2v1h-2zM50 38h1v1h-1zM52 38h1v1h-1zM54 38h1v1h-1zM56 38h1v1h-1zM59 38h2v1h-2zM63 38h1v1h-1zM1 39h3v1h-3zM5 39h2v1h-2zM8 39h4v1h-4zM14 39h2v1h-2zM17 39h4v1h-4zM23 39h3v1h-3zM28 39h3v1h-3zM35 39h5v1h-5zM41 39h2v1h-2zM44 39h2v1h-2zM48 39h1v1h-1zM50 39h4v1h-4zM55 39h1v1h-1zM63 39h1v1h-1zM0 40h3v1h-3zM5 40h1v1h-1zM7 40h4v1h-4zM18 40h2v1h-2zM23 40h2v1h-2zM26 40h1v1h-1zM28 40h5v1h-5zM34 40h2v1h-2zM37 40h1v1h-1zM41 40h2v1h-2zM44 40h7v1h-7zM56 40h2v1h-2zM63 40h1v1h-1zM3 41h1v1h-1zM5 41h1v1h-1zM8 41h4v1h-4zM18 41h1v1h-1zM20 41h3v1h-3zM24 41h1v1h-1zM28 41h1v1h-1zM33 41h1v1h-1zM37 41h4v1h-4zM42 41h2v1h-2zM46 41h3v1h-3zM53 41h1v1h-1zM55 41h1v1h-1zM57 41h3v1h-3zM63 41h1v1h-1zM4 42h2v1h-2zM9 42h5v1h-5zM16 42h2v1h-2zM19 42h1v1h-1zM21 42h1v1h-1zM24 42h1v1h-1zM26 42h2v1h-2zM29 42h2v1h-2zM33 42h1v1h-1zM37 42h1v1h-1zM40 42h1v1h-1zM44 42h2v1h-2zM47 42h1v1h-1zM50 42h4v1h-4zM56 42h1v1h-1zM59 42h1v1h-1zM61 42h1v1h-1zM63 42h1v1h-1zM1 43h2v1h-2zM8 43h4v1h-4zM14 43h1v1h-1zM16 43h2v1h-2zM19 43h4v1h-4zM24 43h2v1h-2zM28 43h1v1h-1zM30 43h1v1h-1zM33 43h1v1h-1zM38 43h1v1h-1zM40 43h1v1h-1zM42 43h2v1h-2zM45 43h3v1h-3zM49 43h2v1h-2zM52 43h2v1h-2zM59 43h4v1h-4zM3 44h1v1h-1zM5 44h1v1h-1zM7 44h1v1h-1zM9 44h1v1h-1zM11 44h1v1h-1zM13 44h3v1h-3zM17 44h2v1h-2zM21 44h1v1h-1zM26 44h2v1h-2zM29 44h4v1h-4zM34 44h1v1h-1zM36 44h1v1h-1zM39 44h7v1h-7zM47 44h4v1h-4zM54 44h2v1h-2zM59 44h1v1h-1zM62 44h2v1h-2zM0 45h1v1h-1zM3 45h1v1h-1zM7 45h2v1h-2zM11 45h1v1h-1zM16 45h1v1h-1zM18 45h1v1h-1zM20 45h1v1h-1zM22 45h1v1h-1zM26 45h1v1h-1zM28 45h1v1h-1zM33 45h1v1h-1zM37 45h2v1h-2zM40 45h2v1h-2zM45 45h3v1h-3zM49 45h1v1h-1zM51 45h1v1h-1zM54 45h2v1h-2zM57 45h2v1h-2zM60 45h1v1h-1zM62 45h2v1h-2zM0 46h3v1h-3zM4 46h1v1h-1zM8 46h1v1h-1zM10 46h2v1h-2zM15 46h2v1h-2zM19 46h1v1h-1zM21 46h1v1h-1zM23 46h2v1h-2zM26 46h1v1h-1zM29 46h2v1h-2zM32 46h1v1h-1zM36 46h2v1h-2zM41 46h1v1h-1zM43 46h1v1h-1zM48 46h2v1h-2zM52 46h3v1h-3zM58 46h2v1h-2zM0 47h1v1h-1zM2 47h5v1h-5zM8 47h1v1h-1zM10 47h1v1h-1zM13 47h1v1h-1zM15 47h6v1h-6zM23 47h3v1h-3zM27 47h3v1h-3zM35 47h1v1h-1zM37 47h1v1h-1zM40 47h1v1h-1zM42 47h1v1h-1zM44 47h1v1h-1zM47 47h1v1h-1zM51 47h1v1h-1zM53 47h1v1h-1zM55 47h4v1h-4zM1 48h1v1h-1zM6 48h1v1h-1zM13 48h1v1h-1zM17 48h3v1h-3zM23 48h1v1h-1zM26 48h1v1h-1zM28 48h1v1h-1zM35 48h1v1h-1zM37 48h1v1h-1zM40 48h1v1h-1zM43 48h3v1h-3zM47 48h1v1h-1zM51 48h7v1h-7zM59 48h1v1h-1zM2 49h1v1h-1zM9 49h5v1h-5zM17 49h1v1h-1zM27 49h1v1h-1zM34 49h1v1h-1zM38 49h1v1h-1zM44 49h1v1h-1zM53 49h1v1h-1zM59 49h1v1h-1zM61 49h1v1h-1zM0 50h4v1h-4zM5 50h3v1h-3zM10 50h2v1h-2zM17 50h5v1h-5zM26 50h1v1h-1zM31 50h1v1h-1zM33 50h1v1h-1zM38 50h1v1h-1zM43 50h1v1h-1zM47 50h1v1h-1zM50 50h1v1h-1zM57 50h1v1h-1zM0 51h1v1h-1zM3 51h4v1h-4zM8 51h1v1h-1zM20 51h1v1h-1zM30 51h1v1h-1zM35 51h2v1h-2zM38 51h2v1h-2zM43 51h1v1h-1zM45 51h3v1h-3zM49 51h1v1h-1zM52 51h1v1h-1zM57 51h1v1h-1zM62 51h2v1h-2zM0 52h1v1h-1zM2 52h2v1h-2zM6 52h1v1h-1zM8 52h2v1h-2zM14 52h2v1h-2zM18 52h4v1h-4zM24 52h5v1h-5zM30 52h4v1h-4zM37 52h1v1h-1zM39 52h1v1h-1zM42 52h1v1h-1zM44 52h1v1h-1zM46 52h2v1h-2zM50 52h3v1h-3zM54 52h1v1h-1zM58 52h1v1h-1zM62 52h2v1h-2zM2 53h1v1h-1zM6 53h1v1h-1zM10 53h3v1h-3zM14 53h1v1h-1zM17 53h1v1h-1zM19 53h2v1h-2zM24 53h1v1h-1zM26 53h4v1h-4zM32 53h3v1h-3zM38 53h2v1h-2zM41 53h1v1h-1zM49 53h1v1h-1zM51 53h2v1h-2zM54 53h1v1h-1zM56 53h1v1h-1zM58 53h2v1h-2zM63 53h1v1h-1zM3 54h4v1h-4zM11 54h3v1h-3zM15 54h1v1h-1zM18 54h1v1h-1zM21 54h1v1h-1zM23 54h2v1h-2zM26 54h2v1h-2zM30 54h1v1h-1zM33 54h1v1h-1zM35 54h3v1h-3zM39 54h2v1h-2zM42 54h3v1h-3zM46 54h3v1h-3zM51 54h2v1h-2zM54 54h1v1h-1zM58 54h2v1h-2zM61 54h2v1h-2zM0 55h3v1h-3zM5 55h2v1h-2zM9 55h3v1h-3zM17 55h1v1h-1zM20 55h2v1h-2zM23 55h1v1h-1zM25 55h1v1h-1zM27 55h1v1h-1zM30 55h1v1h-1zM34 55h2v1h-2zM47 55h1v1h-1zM51 55h3v1h-3zM57 55h2v1h-2zM1 56h5v1h-5zM9 56h2v1h-2zM12 56h1v1h-1zM14 56h1v1h-1zM17 56h4v1h-4zM24 56h2v1h-2zM28 56h1v1h-1zM30 56h1v1h-1zM39 56h1v1h-1zM42 56h1v1h-1zM48 56h2v1h-2zM51 56h1v1h-1zM53 56h1v1h-1zM56 56h1v1h-1zM61 56h1v1h-1zM63 56h1v1h-1zM1 57h1v1h-1zM11 57h1v1h-1zM14 57h4v1h-4zM19 57h1v1h-1zM21 57h1v1h-1zM23 57h2v1h-2zM29 57h1v1h-1zM31 57h2v1h-2zM39 57h1v1h-1zM41 57h1v1h-1zM44 57h1v1h-1zM48 57h1v1h-1zM50 57h3v1h-3zM54 57h1v1h-1zM59 57h4v1h-4zM0 58h1v1h-1zM4 58h1v1h-1zM8 58h1v1h-1zM11 58h1v1h-1zM14 58h1v1h-1zM17 58h1v1h-1zM28 58h1v1h-1zM30 58h1v1h-1zM32 58h3v1h-3zM38 58h1v1h-1zM41 58h1v1h-1zM43 58h1v1h-1zM45 58h2v1h-2zM48 58h1v1h-1zM51 58h3v1h-3zM55 58h2v1h-2zM60 58h2v1h-2zM2 59h1v1h-1zM7 59h1v1h-1zM9 59h2v1h-2zM13 59h3v1h-3zM19 59h1v1h-1zM24 59h1v1h-1zM28 59h4v1h-4zM37 59h2v1h-2zM46 59h1v1h-1zM49 59h2v1h-2zM54 59h1v1h-1zM56 59h1v1h-1zM61 59h3v1h-3zM3 60h1v1h-1zM6 60h3v1h-3zM14 60h1v1h-1zM17 60h1v1h-1zM21 60h5v1h-5zM27 60h3v1h-3zM31 60h1v1h-1zM33 60h1v1h-1zM36 60h2v1h-2zM45 60h3v1h-3zM51 60h3v1h-3zM56 60h2v1h-2zM61 60h3v1h-3zM5 61h3v1h-3zM10 61h1v1h-1zM13 61h1v1h-1zM19 61h3v1h-3zM24 61h6v1h-6zM31 61h3v1h-3zM35 61h3v1h-3zM39 61h2v1h-2zM43 61h2v1h-2zM47 61h1v1h-1zM49 61h2v1h-2zM53 61h2v1h-2zM57 61h1v1h-1zM59 61h1v1h-1zM61 61h1v1h-1zM1 62h1v1h-1zM3 62h6v1h-6zM10 62h1v1h-1zM13 62h1v1h-1zM16 62h1v1h-1zM18 62h3v1h-3zM22 62h2v1h-2zM25 62h4v1h-4zM30 62h1v1h-1zM32 62h3v1h-3zM39 62h1v1h-1zM42 62h3v1h-3zM46 62h7v1h-7zM56 62h1v1h-1zM59 62h3v1h-3zM0 63h6v1h-6zM7 63h5v1h-5zM14 63h1v1h-1zM16 63h1v1h-1zM18 63h3v1h-3zM22 63h1v1h-1zM24 63h3v1h-3zM28 63h1v1h-1zM34 63h1v1h-1zM36 63h2v1h-2zM46 63h2v1h-2zM49 63h3v1h-3zM53 63h2v1h-2zM56 63h1v1h-1zM58 63h2v1h-2zM61 63h3v1h-3z"/><path fill="#00ff00" d="M0 0h1v1h-1zM23 0h1v1h-1zM45 0h1v1h-1zM19 1h1v1h-1zM26 1h2v1h-2zM40 1h1v1h-1zM58 1h1v1h-1zM39 2h1v1h-1zM41 2h1v1h-1zM48 2h1v1h-1zM57 2h1v1h-1zM0 3h1v1h-1zM35 3h1v1h-1zM41 3h1v1h-1zM46 3h1v1h-1zM22 4h1v1h-1zM27 4h1v1h-1zM41 4h1v1h-1zM45 4h1v1h-1zM0 5h2v1h-2zM22 5h1v1h-1zM24 5h1v1h-1zM0 6h1v1h-1zM21 6h1v1h-1zM59 6h1v1h-1zM22 7h2v1h-2zM45 7h1v1h-1zM24 8h1v1h-1zM46 8h1v1h-1zM11 9h2v1h-2zM20 9h1v1h-1zM43 9h1v1h-1zM48 9h1v1h-1zM13 10h1v1h-1zM37 10h1v1h-1zM39 10h1v1h-1zM41 10h1v1h-1zM49 10h1v1h-1zM58 10h1v1h-1zM35 11h1v1h-1zM58 11h1v1h-1zM9 12h1v1h-1zM19 12h2v1h-2zM32 12h1v1h-1zM53 12h1v1h-1zM21 13h1v1h-1zM54 13h1v1h-1zM45 14h2v1h-2zM51 14h1v1h-1zM63 14h1v1h-1zM0 15h1v1h-1zM25 15h1v1h-1zM52 15h1v1h-1zM1 16h1v1h-1zM52 16h1v1h-1zM7 17h1v1h-1zM20 17h1v1h-1zM41 17h1v1h-1zM18 18h1v1h-1zM42 18h1v1h-1zM26 19h2v1h-2zM30 19h2v1h-2zM39 19h1v1h-1zM60 19h2v1h-2zM24 20h1v1h-1zM35 20h1v1h-1zM54 20h1v1h-1zM6 21h1v1h-1zM43 21h1v1h-1zM54 21h1v1h-1zM60 21h1v1h-1zM22 22h1v1h-1zM34 22h1v1h-1zM36 22h1v1h-1zM43 22h1v1h-1zM14 23h1v1h-1zM33 23h1v1h-1zM36 23h1v1h-1zM41 23h1v1h-1zM48 23h2v1h-2zM14 24h1v1h-1zM23 24h1v1h-1zM37 24h2v1h-2zM48 24h2v1h-2zM62 24h1v1h-1zM19 25h1v1h-1zM24 25h1v1h-1zM42 25h1v1h-1zM19 26h1v1h-1zM23 26h1v1h-1zM59 26h1v1h-1zM1 27h1v1h-1zM32 27h1v1h-1zM39 27h1v1h-1zM50 27h1v1h-1zM63 27h1v1h-1zM0 28h1v1h-1zM31 28h1v1h-1zM39 28h1v1h-1zM44 28h1v1h-1zM49 28h1v1h-1zM53 28h1v1h-1zM1 29h1v1h-1zM33 29h1v1h-1zM51 29h1v1h-1zM54 29h1v1h-1zM49 30h1v1h-1zM17 31h3v1h-3zM28 31h1v1h-1zM55 31h1v1h-1zM2 32h1v1h-1zM19 32h1v1h-1zM21 32h2v1h-2zM32 32h1v1h-1zM34 32h1v1h-1zM54 32h1v1h-1zM56 32h1v1h-1zM3 33h1v1h-1zM7 33h1v1h-1zM26 33h3v1h-3zM41 33h2v1h-2zM26 34h2v1h-2zM54 34h1v1h-1zM5 35h1v1h-1zM8 35h1v1h-1zM10 35h1v1h-1zM14 35h1v1h-1zM55 35h1v1h-1zM5 36h1v1h-1zM53 36h2v1h-2zM56 36h1v1h-1zM25 37h1v1h-1zM48 37h1v1h-1zM63 37h1v1h-1zM0 38h1v1h-1zM63 38h1v1h-1zM25 39h1v1h-1zM37 39h1v1h-1zM40 39h1v1h-1zM8 40h2v1h-2zM24 40h1v1h-1zM16 41h1v1h-1zM51 41h1v1h-1zM12 42h2v1h-2zM16 42h1v1h-1zM27 42h1v1h-1zM41 42h1v1h-1zM45 42h1v1h-1zM13 43h1v1h-1zM26 43h1v1h-1zM47 43h1v1h-1zM49 43h1v1h-1zM13 44h1v1h-1zM25 44h1v1h-1zM50 44h1v1h-1zM56 44h1v1h-1zM5 45h1v1h-1zM55 45h1v1h-1zM16 46h1v1h-1zM63 46h1v1h-1zM0 47h1v1h-1zM9 47h1v1h-1zM14 47h1v1h-1zM21 47h2v1h-2zM40 47h1v1h-1zM42 47h1v1h-1zM44 47h1v1h-1zM47 47h1v1h-1zM51 47h1v1h-1zM62 47h1v1h-1zM3 48h1v1h-1zM5 48h1v1h-1zM9 48h1v1h-1zM27 48h1v1h-1zM47 48h1v1h-1zM52 48h1v1h-1zM11 49h1v1h-1zM25 49h1v1h-1zM51 49h1v1h-1zM10 50h1v1h-1zM26 50h1v1h-1zM47 50h1v1h-1zM56 50h1v1h-1zM3 51h1v1h-1zM42 51h1v1h-1zM57 51h1v1h-1zM61 51h2v1h-2zM16 52h1v1h-1zM33 52h1v1h-1zM32 53h1v1h-1zM62 53h1v1h-1zM21 54h1v1h-1zM28 54h1v1h-1zM61 54h1v1h-1zM15 55h1v1h-1zM29 55h1v1h-1zM45 55h1v1h-1zM47 55h1v1h-1zM45 56h2v1h-2zM53 56h1v1h-1zM63 56h1v1h-1zM5 57h1v1h-1zM17 57h1v1h-1zM41 57h2v1h-2zM2 58h2v1h-2zM5 58h1v1h-1zM18 58h1v1h-1zM17 59h1v1h-1zM20 59h1v1h-1zM32 59h2v1h-2zM33 60h1v1h-1zM45 60h1v1h-1zM40 61h1v1h-1zM5 62h1v1h-1zM36 62h1v1h-1zM55 62h1v1h-1zM22 63h1v1h-1zM27 63h2v1h-2zM50 63h1v1h-1zM54 63h2v1h-2z"/></pattern>
<clipPath id="mapclip"><rect x="212" y="78" width="472" height="379"/></clipPath>
<clipPath id="rv"><polygon points="212.0,78.0 351.0,78.0 356.6,85.2 364.9,94.3 372.2,103.5 379.5,112.7 385.0,119.0 390.4,125.0 398.0,133.0 404.4,140.0 410.5,150.0 413.8,160.0 417.6,170.0 421.3,180.0 426.0,190.0 429.8,200.0 433.5,210.0 437.3,220.0 441.0,228.0 444.0,240.0 447.5,250.0 451.0,260.0 454.0,270.0 458.8,280.0 463.5,290.0 467.2,300.0 472.8,310.0 477.5,320.0 482.2,330.0 486.0,340.0 491.6,350.0 496.0,358.0 504.8,366.4 512.8,373.7 519.4,381.0 522.3,386.9 542.7,387.0 548.5,384.0 554.3,380.3 558.7,376.6 559.0,360.0 558.5,341.0 557.0,320.0 555.0,300.0 554.5,287.5 555.0,262.5 556.0,245.0 557.8,240.0 563.5,230.0 569.0,220.0 574.7,210.0 579.4,205.0 584.7,195.0 591.3,185.0 596.0,180.0 602.0,172.0 610.0,165.0 618.0,155.0 625.3,145.0 629.3,140.0 638.0,130.0 644.0,125.0 649.3,120.0 654.7,115.0 660.0,110.0 669.3,100.0 676.0,95.0 683.0,93.3 684.0,93.3 684.0,173.0 681.3,180.0 674.7,190.0 668.0,200.0 658.8,210.0 653.8,220.0 647.2,230.0 640.5,240.0 634.7,250.0 631.3,260.0 630.5,270.0 630.5,290.0 630.5,300.0 633.8,311.0 636.6,326.0 638.5,341.0 639.8,356.0 639.8,371.0 639.6,386.0 637.0,400.0 633.7,420.0 630.8,433.0 629.0,440.0 625.8,447.0 621.7,455.0 620.0,458.0 462.0,458.0 460.0,457.0 452.5,450.0 444.2,440.0 438.3,430.0 432.5,420.0 426.7,415.0 421.7,408.0 417.5,400.0 414.2,390.0 410.8,380.0 406.9,370.0 401.9,360.0 399.5,350.0 396.0,340.0 392.2,330.0 388.5,320.0 385.6,310.0 381.9,300.0 378.1,290.0 374.4,280.0 370.6,270.0 367.3,260.0 364.0,250.0 360.3,240.0 355.6,230.0 351.0,220.0 346.3,210.0 338.8,200.0 332.2,190.0 326.7,180.0 321.2,170.0 316.5,160.0 309.0,150.0 300.6,140.0 294.0,130.0 288.4,125.0 282.8,120.0 278.0,115.0 271.5,110.0 264.0,105.0 258.3,102.8 252.2,100.2 247.8,98.4 242.6,94.9 234.8,92.3 227.8,91.4 222.6,88.8 212.0,88.0"/></clipPath>
</defs>
<g clip-path="url(#mapclip)">
<g clip-path="url(#rv)">
<polygon points="212.0,78.0 351.0,78.0 356.6,85.2 364.9,94.3 372.2,103.5 379.5,112.7 385.0,119.0 390.4,125.0 398.0,133.0 404.4,140.0 410.5,150.0 413.8,160.0 417.6,170.0 421.3,180.0 426.0,190.0 429.8,200.0 433.5,210.0 437.3,220.0 441.0,228.0 444.0,240.0 447.5,250.0 451.0,260.0 454.0,270.0 458.8,280.0 463.5,290.0 467.2,300.0 472.8,310.0 477.5,320.0 482.2,330.0 486.0,340.0 491.6,350.0 496.0,358.0 504.8,366.4 512.8,373.7 519.4,381.0 522.3,386.9 542.7,387.0 548.5,384.0 554.3,380.3 558.7,376.6 559.0,360.0 558.5,341.0 557.0,320.0 555.0,300.0 554.5,287.5 555.0,262.5 556.0,245.0 557.8,240.0 563.5,230.0 569.0,220.0 574.7,210.0 579.4,205.0 584.7,195.0 591.3,185.0 596.0,180.0 602.0,172.0 610.0,165.0 618.0,155.0 625.3,145.0 629.3,140.0 638.0,130.0 644.0,125.0 649.3,120.0 654.7,115.0 660.0,110.0 669.3,100.0 676.0,95.0 683.0,93.3 684.0,93.3 684.0,173.0 681.3,180.0 674.7,190.0 668.0,200.0 658.8,210.0 653.8,220.0 647.2,230.0 640.5,240.0 634.7,250.0 631.3,260.0 630.5,270.0 630.5,290.0 630.5,300.0 633.8,311.0 636.6,326.0 638.5,341.0 639.8,356.0 639.8,371.0 639.6,386.0 637.0,400.0 633.7,420.0 630.8,433.0 629.0,440.0 625.8,447.0 621.7,455.0 620.0,458.0 462.0,458.0 460.0,457.0 452.5,450.0 444.2,440.0 438.3,430.0 432.5,420.0 426.7,415.0 421.7,408.0 417.5,400.0 414.2,390.0 410.8,380.0 406.9,370.0 401.9,360.0 399.5,350.0 396.0,340.0 392.2,330.0 388.5,320.0 385.6,310.0 381.9,300.0 378.1,290.0 374.4,280.0 370.6,270.0 367.3,260.0 364.0,250.0 360.3,240.0 355.6,230.0 351.0,220.0 346.3,210.0 338.8,200.0 332.2,190.0 326.7,180.0 321.2,170.0 316.5,160.0 309.0,150.0 300.6,140.0 294.0,130.0 288.4,125.0 282.8,120.0 278.0,115.0 271.5,110.0 264.0,105.0 258.3,102.8 252.2,100.2 247.8,98.4 242.6,94.9 234.8,92.3 227.8,91.4 222.6,88.8 212.0,88.0" fill="url(#core)"/>
<ellipse cx="598" cy="310" rx="16" ry="80" fill="url(#coreb)"/>
<ellipse cx="650" cy="160" rx="18" ry="40" fill="url(#coreb)" transform="rotate(40 650 160)"/>
<ellipse cx="490" cy="435" rx="45" ry="25" fill="url(#coreb)"/>
<ellipse cx="345" cy="100" rx="12" ry="18" fill="url(#coreb)"/>
<polyline points="351.0,78.0 356.6,85.2 364.9,94.3 372.2,103.5 379.5,112.7 385.0,119.0 390.4,125.0 398.0,133.0 404.4,140.0 410.5,150.0 413.8,160.0 417.6,170.0 421.3,180.0 426.0,190.0 429.8,200.0 433.5,210.0 437.3,220.0 441.0,228.0 444.0,240.0 447.5,250.0 451.0,260.0 454.0,270.0 458.8,280.0 463.5,290.0 467.2,300.0 472.8,310.0 477.5,320.0 482.2,330.0 486.0,340.0" fill="none" stroke="url(#meshs)" stroke-width="60" stroke-linejoin="round" stroke-linecap="round"/>
<polyline points="486.0,340.0 491.6,350.0 496.0,358.0 504.8,366.4 512.8,373.7 519.4,381.0 522.3,386.9 542.7,387.0 548.5,384.0 554.3,380.3 558.7,376.6" fill="none" stroke="url(#meshs)" stroke-width="60" stroke-linejoin="round" stroke-linecap="round"/>
<polyline points="558.7,376.6 559.0,360.0 558.5,341.0 557.0,320.0 555.0,300.0 554.5,287.5 555.0,262.5 556.0,245.0 557.8,240.0 563.5,230.0 569.0,220.0 574.7,210.0 579.4,205.0 584.7,195.0 591.3,185.0 596.0,180.0 602.0,172.0 610.0,165.0 618.0,155.0 625.3,145.0 629.3,140.0 638.0,130.0 644.0,125.0 649.3,120.0 654.7,115.0 660.0,110.0 669.3,100.0 676.0,95.0 683.0,93.3 684.0,93.3" fill="none" stroke="url(#meshs)" stroke-width="54" stroke-linejoin="round" stroke-linecap="round"/>
<polyline points="684.0,173.0 681.3,180.0 674.7,190.0 668.0,200.0 658.8,210.0 653.8,220.0 647.2,230.0 640.5,240.0 634.7,250.0 631.3,260.0 630.5,270.0 630.5,290.0 630.5,300.0 633.8,311.0 636.6,326.0 638.5,341.0 639.8,356.0 639.8,371.0 639.6,386.0 637.0,400.0 633.7,420.0 630.8,433.0 629.0,440.0 625.8,447.0 621.7,455.0 620.0,458.0" fill="none" stroke="url(#meshs)" stroke-width="40" stroke-linejoin="round" stroke-linecap="round"/>
<polyline points="462.0,458.0 460.0,457.0 452.5,450.0 444.2,440.0 438.3,430.0 432.5,420.0 426.7,415.0 421.7,408.0 417.5,400.0 414.2,390.0 410.8,380.0 406.9,370.0 401.9,360.0 399.5,350.0 396.0,340.0 392.2,330.0 388.5,320.0 385.6,310.0 381.9,300.0 378.1,290.0 374.4,280.0 370.6,270.0 367.3,260.0 364.0,250.0 360.3,240.0 355.6,230.0 351.0,220.0 346.3,210.0 338.8,200.0 332.2,190.0 326.7,180.0 321.2,170.0 316.5,160.0 309.0,150.0 300.6,140.0 294.0,130.0 288.4,125.0 282.8,120.0 278.0,115.0 271.5,110.0 264.0,105.0 258.3,102.8 252.2,100.2 247.8,98.4 242.6,94.9 234.8,92.3 227.8,91.4 222.6,88.8 212.0,88.0" fill="none" stroke="url(#meshs)" stroke-width="60" stroke-linejoin="round" stroke-linecap="round"/>
<polyline points="351.0,78.0 356.6,85.2 364.9,94.3 372.2,103.5 379.5,112.7 385.0,119.0 390.4,125.0 398.0,133.0 404.4,140.0 410.5,150.0 413.8,160.0 417.6,170.0 421.3,180.0 426.0,190.0 429.8,200.0 433.5,210.0 437.3,220.0 441.0,228.0 444.0,240.0 447.5,250.0 451.0,260.0 454.0,270.0 458.8,280.0 463.5,290.0 467.2,300.0 472.8,310.0 477.5,320.0 482.2,330.0 486.0,340.0" fill="none" stroke="url(#meshg)" stroke-width="46" stroke-linejoin="round" stroke-linecap="round"/>
<polyline points="486.0,340.0 491.6,350.0 496.0,358.0 504.8,366.4 512.8,373.7 519.4,381.0 522.3,386.9 542.7,387.0 548.5,384.0 554.3,380.3 558.7,376.6" fill="none" stroke="url(#meshg)" stroke-width="50" stroke-linejoin="round" stroke-linecap="round"/>
<polyline points="558.7,376.6 559.0,360.0 558.5,341.0 557.0,320.0 555.0,300.0 554.5,287.5 555.0,262.5 556.0,245.0 557.8,240.0 563.5,230.0 569.0,220.0 574.7,210.0 579.4,205.0 584.7,195.0 591.3,185.0 596.0,180.0 602.0,172.0 610.0,165.0 618.0,155.0 625.3,145.0 629.3,140.0 638.0,130.0 644.0,125.0 649.3,120.0 654.7,115.0 660.0,110.0 669.3,100.0 676.0,95.0 683.0,93.3 684.0,93.3" fill="none" stroke="url(#meshg)" stroke-width="42" stroke-linejoin="round" stroke-linecap="round"/>
<polyline points="684.0,173.0 681.3,180.0 674.7,190.0 668.0,200.0 658.8,210.0 653.8,220.0 647.2,230.0 640.5,240.0 634.7,250.0 631.3,260.0 630.5,270.0 630.5,290.0 630.5,300.0 633.8,311.0 636.6,326.0 638.5,341.0 639.8,356.0 639.8,371.0 639.6,386.0 637.0,400.0 633.7,420.0 630.8,433.0 629.0,440.0 625.8,447.0 621.7,455.0 620.0,458.0" fill="none" stroke="url(#meshg)" stroke-width="30" stroke-linejoin="round" stroke-linecap="round"/>
<polyline points="462.0,458.0 460.0,457.0 452.5,450.0 444.2,440.0 438.3,430.0 432.5,420.0 426.7,415.0 421.7,408.0 417.5,400.0 414.2,390.0 410.8,380.0 406.9,370.0 401.9,360.0 399.5,350.0 396.0,340.0 392.2,330.0 388.5,320.0 385.6,310.0 381.9,300.0 378.1,290.0 374.4,280.0 370.6,270.0 367.3,260.0 364.0,250.0 360.3,240.0 355.6,230.0 351.0,220.0 346.3,210.0 338.8,200.0 332.2,190.0 326.7,180.0 321.2,170.0 316.5,160.0 309.0,150.0 300.6,140.0 294.0,130.0 288.4,125.0 282.8,120.0 278.0,115.0 271.5,110.0 264.0,105.0 258.3,102.8 252.2,100.2 247.8,98.4 242.6,94.9 234.8,92.3 227.8,91.4 222.6,88.8 212.0,88.0" fill="none" stroke="url(#meshg)" stroke-width="46" stroke-linejoin="round" stroke-linecap="round"/>
<polyline points="569.0,220.0 574.7,210.0 579.4,205.0 584.7,195.0 591.3,185.0 596.0,180.0 602.0,172.0 610.0,165.0 618.0,155.0 625.3,145.0 629.3,140.0 638.0,130.0 644.0,125.0 649.3,120.0 654.7,115.0 660.0,110.0 669.3,100.0 676.0,95.0 683.0,93.3 684.0,93.3" fill="none" stroke="url(#meshl)" stroke-width="28" stroke-linejoin="round" stroke-linecap="round"/>
<polyline points="338.8,200.0 332.2,190.0 326.7,180.0 321.2,170.0 316.5,160.0 309.0,150.0 300.6,140.0 294.0,130.0 288.4,125.0 282.8,120.0 278.0,115.0 271.5,110.0 264.0,105.0 258.3,102.8 252.2,100.2 247.8,98.4 242.6,94.9 234.8,92.3 227.8,91.4 222.6,88.8 212.0,88.0" fill="none" stroke="url(#meshl)" stroke-width="30" stroke-linejoin="round" stroke-linecap="round"/>
<polyline points="351.0,78.0 356.6,85.2 364.9,94.3 372.2,103.5 379.5,112.7 385.0,119.0 390.4,125.0 398.0,133.0 404.4,140.0 410.5,150.0 413.8,160.0 417.6,170.0 421.3,180.0 426.0,190.0 429.8,200.0 433.5,210.0 437.3,220.0 441.0,228.0 444.0,240.0 447.5,250.0 451.0,260.0 454.0,270.0 458.8,280.0 463.5,290.0 467.2,300.0 472.8,310.0 477.5,320.0 482.2,330.0 486.0,340.0" fill="none" stroke="url(#meshy)" stroke-width="30" stroke-linejoin="round" stroke-linecap="round"/>
<polyline points="640.5,240.0 634.7,250.0 631.3,260.0 630.5,270.0 630.5,290.0 630.5,300.0 633.8,311.0 636.6,326.0 638.5,341.0 639.8,356.0 639.8,371.0 639.6,386.0 637.0,400.0 633.7,420.0" fill="none" stroke="url(#meshy)" stroke-width="22" stroke-linejoin="round" stroke-linecap="round"/>
<polyline points="462.0,458.0 460.0,457.0 452.5,450.0 444.2,440.0 438.3,430.0 432.5,420.0 426.7,415.0 421.7,408.0 417.5,400.0 414.2,390.0 410.8,380.0 406.9,370.0 401.9,360.0 399.5,350.0 396.0,340.0 392.2,330.0 388.5,320.0 385.6,310.0 381.9,300.0 378.1,290.0 374.4,280.0 370.6,270.0 367.3,260.0 364.0,250.0 360.3,240.0 355.6,230.0 351.0,220.0 346.3,210.0 338.8,200.0 332.2,190.0 326.7,180.0 321.2,170.0 316.5,160.0 309.0,150.0 300.6,140.0 294.0,130.0 288.4,125.0 282.8,120.0 278.0,115.0 271.5,110.0 264.0,105.0 258.3,102.8 252.2,100.2 247.8,98.4 242.6,94.9 234.8,92.3 227.8,91.4 222.6,88.8 212.0,88.0" fill="none" stroke="#00ff00" stroke-width="12" stroke-linejoin="round" stroke-linecap="round"/>
<polyline points="462.0,458.0 460.0,457.0 452.5,450.0 444.2,440.0 438.3,430.0 432.5,420.0 426.7,415.0 421.7,408.0 417.5,400.0 414.2,390.0 410.8,380.0 406.9,370.0 401.9,360.0 399.5,350.0 396.0,340.0 392.2,330.0 388.5,320.0 385.6,310.0 381.9,300.0 378.1,290.0 374.4,280.0 370.6,270.0 367.3,260.0 364.0,250.0 360.3,240.0 355.6,230.0 351.0,220.0 346.3,210.0 338.8,200.0 332.2,190.0 326.7,180.0 321.2,170.0 316.5,160.0 309.0,150.0 300.6,140.0 294.0,130.0 288.4,125.0 282.8,120.0 278.0,115.0 271.5,110.0 264.0,105.0 258.3,102.8 252.2,100.2 247.8,98.4 242.6,94.9 234.8,92.3 227.8,91.4 222.6,88.8 212.0,88.0" fill="none" stroke="#80ff00" stroke-width="5" stroke-linejoin="round" stroke-linecap="round"/>
<polyline points="258.3,102.8 252.2,100.2 247.8,98.4 242.6,94.9 234.8,92.3 227.8,91.4 222.6,88.8 212.0,88.0" fill="none" stroke="#80ff00" stroke-width="13" stroke-linejoin="round" stroke-linecap="round"/>
<path d="M226 87h18l4 6h-6l-16-3z" fill="#00ff00"/>
<polyline points="309.0,150.0 300.6,140.0 294.0,130.0 288.4,125.0 282.8,120.0 278.0,115.0 271.5,110.0 264.0,105.0 258.3,102.8" fill="none" stroke="#ffe600" stroke-width="8" stroke-linejoin="round" stroke-linecap="round"/>
<polyline points="398.0,133.0 404.4,140.0 410.5,150.0 413.8,160.0 417.6,170.0 421.3,180.0 426.0,190.0 429.8,200.0 433.5,210.0 437.3,220.0 441.0,228.0 444.0,240.0 447.5,250.0 451.0,260.0 454.0,270.0 458.8,280.0 463.5,290.0 467.2,300.0 472.8,310.0 477.5,320.0 482.2,330.0 486.0,340.0" fill="none" stroke="#ffe600" stroke-width="13" stroke-linejoin="round" stroke-linecap="round"/>
<polyline points="351.0,78.0 356.6,85.2 364.9,94.3 372.2,103.5 379.5,112.7 385.0,119.0 390.4,125.0 398.0,133.0 404.4,140.0" fill="none" stroke="#ffe600" stroke-width="10" stroke-linejoin="round" stroke-linecap="round"/>
<polyline points="491.6,350.0 496.0,358.0 504.8,366.4 512.8,373.7 519.4,381.0 522.3,386.9 542.7,387.0 548.5,384.0 554.3,380.3 558.7,376.6" fill="none" stroke="#80ff00" stroke-width="14" stroke-linejoin="round" stroke-linecap="round"/>
<polyline points="558.7,376.6 559.0,360.0 558.5,341.0 557.0,320.0 555.0,300.0 554.5,287.5 555.0,262.5 556.0,245.0 557.8,240.0 563.5,230.0 569.0,220.0 574.7,210.0 579.4,205.0 584.7,195.0 591.3,185.0 596.0,180.0 602.0,172.0 610.0,165.0 618.0,155.0 625.3,145.0 629.3,140.0 638.0,130.0 644.0,125.0 649.3,120.0 654.7,115.0 660.0,110.0 669.3,100.0 676.0,95.0 683.0,93.3 684.0,93.3" fill="none" stroke="#80ff00" stroke-width="12" stroke-linejoin="round" stroke-linecap="round"/>
<polyline points="579.4,205.0 584.7,195.0 591.3,185.0 596.0,180.0 602.0,172.0" fill="none" stroke="#ffe600" stroke-width="8" stroke-linejoin="round" stroke-linecap="round"/>
<polyline points="558.7,376.6 559.0,360.0 558.5,341.0 557.0,320.0 555.0,300.0 554.5,287.5" fill="none" stroke="#00ff00" stroke-width="11" stroke-linejoin="round" stroke-linecap="round"/>
<polyline points="557.0,320.0 555.0,300.0" fill="none" stroke="#80ff00" stroke-width="5" stroke-linejoin="round" stroke-linecap="round"/>
<polyline points="684.0,173.0 681.3,180.0 674.7,190.0 668.0,200.0 658.8,210.0 653.8,220.0 647.2,230.0 640.5,240.0 634.7,250.0 631.3,260.0 630.5,270.0 630.5,290.0 630.5,300.0 633.8,311.0 636.6,326.0 638.5,341.0 639.8,356.0 639.8,371.0 639.6,386.0 637.0,400.0 633.7,420.0 630.8,433.0 629.0,440.0 625.8,447.0 621.7,455.0 620.0,458.0" fill="none" stroke="#ffe600" stroke-width="12" stroke-linejoin="round" stroke-linecap="round"/>
<polyline points="684.0,173.0 681.3,180.0 674.7,190.0 668.0,200.0 658.8,210.0 653.8,220.0 647.2,230.0 640.5,240.0" fill="none" stroke="#00ff00" stroke-width="11" stroke-linejoin="round" stroke-linecap="round"/>
<polyline points="684.0,173.0 681.3,180.0 674.7,190.0 668.0,200.0 658.8,210.0 653.8,220.0 647.2,230.0 640.5,240.0" fill="none" stroke="#80ff00" stroke-width="5" stroke-linejoin="round" stroke-linecap="round"/>
<polyline points="630.8,433.0 629.0,440.0 625.8,447.0 621.7,455.0 620.0,458.0" fill="none" stroke="#00ff00" stroke-width="10" stroke-linejoin="round" stroke-linecap="round"/>
<polyline points="630.8,433.0 629.0,440.0 625.8,447.0 621.7,455.0 620.0,458.0" fill="none" stroke="#80ff00" stroke-width="4" stroke-linejoin="round" stroke-linecap="round"/>
<path d="M622 440l8-3-4 12-6 3z" fill="#20f0c0"/>
</g>
<g font-family="Liberation Sans" font-size="10.8" fill="#999" opacity="0.99" shape-rendering="auto">
<text x="214" y="122">5346000</text>
<text x="214" y="201">5345800</text>
<text x="214" y="280">5345600</text>
<text x="214" y="359">5345400</text>
<text x="214" y="439">5345200</text>
<text x="251" y="454">315600</text>
<text x="330" y="454">315800</text>
<text x="409" y="454">316000</text>
<text x="489" y="454">316200</text>
<text x="568" y="454">316400</text>
<text x="647" y="454">316600</text>
</g>
<rect x="252" y="78" width="1" height="379" fill="#a0a0a0"/>
<rect x="331" y="78" width="1" height="379" fill="#a0a0a0"/>
<rect x="410" y="78" width="1" height="379" fill="#a0a0a0"/>
<rect x="490" y="78" width="1" height="379" fill="#a0a0a0"/>
<rect x="569" y="78" width="1" height="379" fill="#a0a0a0"/>
<rect x="648" y="78" width="1" height="379" fill="#a0a0a0"/>
<rect x="212" y="125" width="472" height="1" fill="#a0a0a0"/>
<rect x="212" y="204" width="472" height="1" fill="#a0a0a0"/>
<rect x="212" y="283" width="472" height="1" fill="#a0a0a0"/>
<rect x="212" y="362" width="472" height="1" fill="#a0a0a0"/>
<rect x="212" y="442" width="472" height="1" fill="#a0a0a0"/>
<g clip-path="url(#rv)">
<rect x="252" y="78" width="1" height="379" fill="#c4c8d8"/>
<rect x="331" y="78" width="1" height="379" fill="#c4c8d8"/>
<rect x="410" y="78" width="1" height="379" fill="#c4c8d8"/>
<rect x="490" y="78" width="1" height="379" fill="#c4c8d8"/>
<rect x="569" y="78" width="1" height="379" fill="#c4c8d8"/>
<rect x="648" y="78" width="1" height="379" fill="#c4c8d8"/>
<rect x="212" y="125" width="472" height="1" fill="#c4c8d8"/>
<rect x="212" y="204" width="472" height="1" fill="#c4c8d8"/>
<rect x="212" y="283" width="472" height="1" fill="#c4c8d8"/>
<rect x="212" y="362" width="472" height="1" fill="#c4c8d8"/>
<rect x="212" y="442" width="472" height="1" fill="#c4c8d8"/>
</g>
</g>
</svg>


<!-- status bar -->
<div class="a" style="left:206px;top:459px;width:480px;height:19px;background:#f0f0f0"></div>
<div class="a" style="left:210px;top:457px;width:475px;height:1px;background:#d8d8d8"></div>
<div class="a" style="left:206px;top:458px;width:480px;height:1px;background:#fafafa"></div>
<div class="a" style="left:206px;top:459px;width:480px;height:1px;background:#c8c8c8"></div>
<svg class="a" style="left:670px;top:462px" width="16" height="16"><g fill="#a0a0a0"><rect x="12" y="5" width="2" height="2"/><rect x="9" y="8" width="2" height="2"/><rect x="12" y="8" width="2" height="2"/><rect x="6" y="11" width="2" height="2"/><rect x="9" y="11" width="2" height="2"/><rect x="12" y="11" width="2" height="2"/></g></svg>
<div class="t" style="left:213px;top:464.5px;font-size:11.2px">Ready</div>
<!-- window borders -->
<div class="a" style="left:0;top:0;width:688px;height:1px;background:#3434f0"></div>
<div class="a" style="left:0;top:0;width:1px;height:480px;background:#3434f0"></div>
<div class="a" style="left:687px;top:0;width:1px;height:480px;background:#3434f0"></div>
<div class="a" style="left:0;top:479px;width:688px;height:1px;background:#3434f0"></div>
<div class="a" style="left:1px;top:1px;width:686px;height:1px;background:#000"></div>
<div class="a" style="left:1px;top:1px;width:1px;height:478px;background:#000"></div>
<div class="a" style="left:686px;top:1px;width:1px;height:478px;background:#000"></div>
<div class="a" style="left:1px;top:478px;width:686px;height:1px;background:#000"></div>
<div class="a" style="left:2px;top:476px;width:208px;height:1px;background:#b0b0b0"></div>
<div class="a" style="left:684px;top:78px;width:1px;height:380px;background:#d8d8d8"></div>
<div class="a" style="left:685px;top:77px;width:1px;height:382px;background:#fff"></div>

</body></html>
